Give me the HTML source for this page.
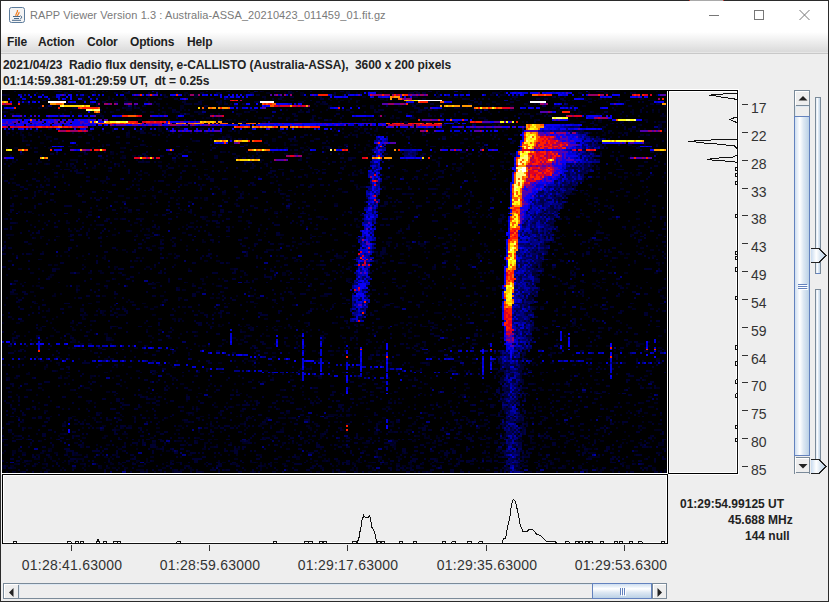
<!DOCTYPE html>
<html><head><meta charset="utf-8">
<style>
*{margin:0;padding:0;box-sizing:border-box}
html,body{width:829px;height:602px;overflow:hidden;background:#eeeeee}
body{position:relative;font-family:"Liberation Sans",sans-serif;}
.a{position:absolute}
#win{left:0;top:0;width:829px;height:602px;border:1px solid #2b2b2b;background:#eeeeee}
#title{left:1px;top:1px;width:827px;height:31px;background:#fff}
#menubar{left:1px;top:32px;width:827px;height:20px;background:linear-gradient(#ffffff,#dadada);border-bottom:0}
#menurow{left:1px;top:52px;width:827px;height:1px;background:#e6e6e6}
#menuline{left:1px;top:53px;width:827px;height:1px;background:#c8c8c8}
.menu{top:34px;font-weight:bold;font-size:12px;letter-spacing:-0.15px;color:#1e1e1e;line-height:16px}
.ttl{left:30px;top:6px;font-size:11px;letter-spacing:0.08px;color:#7a7a7a;line-height:18px;white-space:nowrap}
.hdr{left:3px;font-weight:bold;font-size:12px;color:#222;white-space:nowrap;line-height:15px}
.tick{font-size:14px;color:#333;line-height:14px;white-space:nowrap}
.tl{font-size:14px;color:#333;line-height:14px;white-space:nowrap;letter-spacing:0.22px}
.info{font-weight:bold;font-size:12px;color:#222;white-space:nowrap;line-height:14px}
</style></head><body>
<div class="a" id="win"></div>
<div class="a" id="title"></div>
<div class="a" style="left:690px;top:0;width:33px;height:1px;background:#a9a9a9"></div><div class="a" style="left:689px;top:0;width:1px;height:1px;background:#c0302a"></div><div class="a" style="left:723px;top:0;width:1px;height:1px;background:#c0302a"></div>
<div class="a" id="menubar"></div>
<div class="a" id="menurow"></div>
<div class="a" id="menuline"></div>
<!-- java icon -->
<svg class="a" style="left:9px;top:7px" width="16" height="16" viewBox="0 0 16 16">
 <rect x="0.5" y="0.5" width="15" height="15" rx="2" fill="#f4f4f4" stroke="#5c7c9c"/>
 <path d="M7 9.5 C5.5 7.5 9 6 8.5 3 M8.5 9 C8 7.5 10.5 7 10 5" stroke="#f07a1a" stroke-width="1.2" fill="none"/>
 <path d="M4 9.5h7M5 11.5h5M3 13.3h9M11.5 8.5q2.5 1.5 0 3.5" stroke="#4a6a8a" stroke-width="1" fill="none"/>
</svg>
<div class="a ttl">RAPP Viewer Version 1.3 : Australia-ASSA_20210423_011459_01.fit.gz</div>
<!-- window controls -->
<svg class="a" style="left:700px;top:0" width="128" height="30">
 <path d="M9 15.5h10" stroke="#777" stroke-width="1"/>
 <rect x="54.5" y="10.5" width="9" height="9" fill="none" stroke="#777"/>
 <path d="M99.5 10l10 10M109.5 10l-10 10" stroke="#777" stroke-width="1"/>
</svg>
<div class="a menu" style="left:7px">File</div>
<div class="a menu" style="left:38px">Action</div>
<div class="a menu" style="left:87px">Color</div>
<div class="a menu" style="left:130px">Options</div>
<div class="a menu" style="left:187px">Help</div>

<div class="a hdr" style="top:58px;letter-spacing:-0.07px">2021/04/23&nbsp; Radio flux density, e-CALLISTO (Australia-ASSA),&nbsp; 3600 x 200 pixels</div>
<div class="a hdr" style="top:74px">01:14:59.381-01:29:59 UT,&nbsp; dt = 0.25s</div>

<!-- spectrogram frame -->
<div class="a" style="left:1px;top:89px;width:738px;height:386px;background:#fff"></div>
<svg class="a" style="left:2px;top:90px" width="665" height="383" viewBox="0 0 332.5 200" preserveAspectRatio="none" shape-rendering="crispEdges"><rect width="332.5" height="200" fill="#000"/><path fill="#00001e" d="M20 0h1v1h-1zM26 0h2v1h-2zM37 0h1v1h-1zM52 0h1v1h-1zM76 0h2v1h-2zM112 0h1v1h-1zM121 0h1v1h-1zM130 0h1v1h-1zM137 0h2v1h-2zM160 0h1v1h-1zM172 0h2v1h-2zM187 0h1v1h-1zM191 0h1v1h-1zM217 0h2v1h-2zM233 0h1v1h-1zM249 0h1v1h-1zM256 0h2v1h-2zM327 0h1v1h-1zM44 1h1v1h-1zM46 1h1v1h-1zM57 1h1v1h-1zM61 1h1v1h-1zM91 1h2v1h-2zM109 1h1v1h-1zM132 1h2v1h-2zM141 1h1v1h-1zM145 1h1v1h-1zM149 1h2v1h-2zM177 1h1v1h-1zM179 1h1v1h-1zM182 1h1v1h-1zM188 1h2v1h-2zM194 1h2v1h-2zM233 1h1v1h-1zM247 1h2v1h-2zM263 1h1v1h-1zM269 1h1v1h-1zM301 1h1v1h-1zM305 1h1v1h-1zM315 1h1v1h-1zM2 2h2v1h-2zM18 2h2v1h-2zM38 2h1v1h-1zM41 2h2v1h-2zM80 2h1v1h-1zM143 2h1v1h-1zM149 2h1v1h-1zM170 2h1v1h-1zM245 2h1v1h-1zM250 2h2v1h-2zM304 2h1v1h-1zM10 3h1v1h-1zM25 3h2v1h-2zM29 3h1v1h-1zM37 3h1v1h-1zM39 3h2v1h-2zM47 3h2v1h-2zM53 3h1v1h-1zM73 3h1v1h-1zM85 3h1v1h-1zM96 3h2v1h-2zM152 3h1v1h-1zM156 3h1v1h-1zM158 3h1v1h-1zM180 3h2v1h-2zM205 3h1v1h-1zM223 3h2v1h-2zM226 3h2v1h-2zM288 3h2v1h-2zM7 4h2v1h-2zM40 4h1v1h-1zM45 4h1v1h-1zM53 4h1v1h-1zM62 4h1v1h-1zM66 4h2v1h-2zM94 4h2v1h-2zM120 4h1v1h-1zM131 4h1v1h-1zM167 4h1v1h-1zM189 4h2v1h-2zM192 4h1v1h-1zM210 4h2v1h-2zM232 4h2v1h-2zM238 4h1v1h-1zM256 4h1v1h-1zM291 4h1v1h-1zM293 4h2v1h-2zM298 4h1v1h-1zM301 4h1v1h-1zM320 4h1v1h-1zM17 5h1v1h-1zM62 5h1v1h-1zM88 5h1v1h-1zM99 5h2v1h-2zM140 5h2v1h-2zM144 5h2v1h-2zM151 5h1v1h-1zM164 5h1v1h-1zM169 5h2v1h-2zM173 5h1v1h-1zM177 5h2v1h-2zM186 5h1v1h-1zM191 5h1v1h-1zM283 5h1v1h-1zM285 5h1v1h-1zM291 5h1v1h-1zM324 5h3v1h-3zM9 6h1v1h-1zM47 6h2v1h-2zM71 6h1v1h-1zM108 6h1v1h-1zM111 6h1v1h-1zM118 6h1v1h-1zM148 6h2v1h-2zM168 6h1v1h-1zM173 6h1v1h-1zM245 6h2v1h-2zM263 6h1v1h-1zM281 6h1v1h-1zM302 6h1v1h-1zM308 6h1v1h-1zM311 6h1v1h-1zM32 7h1v1h-1zM37 7h1v1h-1zM82 7h1v1h-1zM98 7h1v1h-1zM109 7h1v1h-1zM121 7h1v1h-1zM156 7h1v1h-1zM159 7h2v1h-2zM204 7h1v1h-1zM208 7h2v1h-2zM242 7h2v1h-2zM247 7h2v1h-2zM252 7h2v1h-2zM262 7h1v1h-1zM266 7h1v1h-1zM311 7h1v1h-1zM22 8h1v1h-1zM28 8h1v1h-1zM48 8h1v1h-1zM62 8h1v1h-1zM71 8h1v1h-1zM78 8h1v1h-1zM89 8h2v1h-2zM108 8h1v1h-1zM113 8h1v1h-1zM157 8h1v1h-1zM163 8h2v1h-2zM180 8h2v1h-2zM184 8h2v1h-2zM198 8h2v1h-2zM217 8h2v1h-2zM229 8h1v1h-1zM243 8h1v1h-1zM245 8h1v1h-1zM254 8h2v1h-2zM262 8h1v1h-1zM281 8h2v1h-2zM290 8h2v1h-2zM307 8h1v1h-1zM8 9h1v1h-1zM14 9h1v1h-1zM19 9h1v1h-1zM21 9h2v1h-2zM26 9h1v1h-1zM35 9h1v1h-1zM52 9h1v1h-1zM61 9h2v1h-2zM67 9h1v1h-1zM83 9h2v1h-2zM89 9h2v1h-2zM101 9h1v1h-1zM118 9h2v1h-2zM151 9h2v1h-2zM184 9h2v1h-2zM228 9h2v1h-2zM232 9h1v1h-1zM235 9h1v1h-1zM275 9h2v1h-2zM28 10h1v1h-1zM31 10h1v1h-1zM62 10h3v1h-3zM69 10h1v1h-1zM89 10h1v1h-1zM91 10h1v1h-1zM100 10h1v1h-1zM117 10h1v1h-1zM126 10h1v1h-1zM142 10h1v1h-1zM162 10h1v1h-1zM167 10h1v1h-1zM196 10h2v1h-2zM210 10h2v1h-2zM216 10h2v1h-2zM221 10h1v1h-1zM251 10h2v1h-2zM255 10h1v1h-1zM278 10h1v1h-1zM284 10h2v1h-2zM288 10h1v1h-1zM306 10h1v1h-1zM315 10h1v1h-1zM328 10h1v1h-1zM0 11h1v1h-1zM2 11h1v1h-1zM55 11h1v1h-1zM71 11h1v1h-1zM80 11h2v1h-2zM86 11h1v1h-1zM98 11h2v1h-2zM122 11h1v1h-1zM149 11h2v1h-2zM159 11h1v1h-1zM174 11h2v1h-2zM188 11h1v1h-1zM204 11h2v1h-2zM207 11h1v1h-1zM209 11h1v1h-1zM236 11h1v1h-1zM243 11h1v1h-1zM260 11h1v1h-1zM288 11h2v1h-2zM295 11h1v1h-1zM314 11h2v1h-2zM325 11h1v1h-1zM328 11h1v1h-1zM7 12h2v1h-2zM28 12h1v1h-1zM34 12h1v1h-1zM38 12h2v1h-2zM42 12h1v1h-1zM49 12h1v1h-1zM60 12h1v1h-1zM66 12h1v1h-1zM81 12h1v1h-1zM90 12h1v1h-1zM99 12h2v1h-2zM104 12h2v1h-2zM118 12h2v1h-2zM140 12h1v1h-1zM237 12h1v1h-1zM244 12h1v1h-1zM258 12h1v1h-1zM262 12h1v1h-1zM268 12h1v1h-1zM285 12h1v1h-1zM287 12h2v1h-2zM291 12h1v1h-1zM297 12h2v1h-2zM309 12h1v1h-1zM315 12h1v1h-1zM10 13h1v1h-1zM94 13h2v1h-2zM118 13h1v1h-1zM126 13h1v1h-1zM216 13h1v1h-1zM226 13h1v1h-1zM329 13h3v1h-3zM8 14h1v1h-1zM24 14h1v1h-1zM100 14h1v1h-1zM102 14h2v1h-2zM108 14h1v1h-1zM128 14h2v1h-2zM134 14h1v1h-1zM142 14h2v1h-2zM159 14h1v1h-1zM194 14h2v1h-2zM197 14h2v1h-2zM206 14h1v1h-1zM208 14h1v1h-1zM220 14h1v1h-1zM238 14h4v1h-4zM251 14h2v1h-2zM264 14h1v1h-1zM287 14h1v1h-1zM309 14h1v1h-1zM60 15h1v1h-1zM68 15h2v1h-2zM73 15h1v1h-1zM112 15h3v1h-3zM116 15h1v1h-1zM134 15h1v1h-1zM163 15h1v1h-1zM249 15h1v1h-1zM266 15h2v1h-2zM283 15h1v1h-1zM303 15h1v1h-1zM321 15h2v1h-2zM111 16h1v1h-1zM118 16h2v1h-2zM130 16h1v1h-1zM154 16h1v1h-1zM157 16h2v1h-2zM168 16h2v1h-2zM260 16h1v1h-1zM291 16h1v1h-1zM298 16h2v1h-2zM313 16h2v1h-2zM328 16h2v1h-2zM25 17h1v1h-1zM202 17h1v1h-1zM227 17h1v1h-1zM235 17h2v1h-2zM270 17h1v1h-1zM304 17h1v1h-1zM329 17h1v1h-1zM53 18h1v1h-1zM172 18h1v1h-1zM206 18h1v1h-1zM245 18h2v1h-2zM318 18h1v1h-1zM47 19h1v1h-1zM78 19h1v1h-1zM87 19h1v1h-1zM104 19h2v1h-2zM187 19h1v1h-1zM295 19h1v1h-1zM307 19h1v1h-1zM11 20h1v1h-1zM71 20h1v1h-1zM75 20h1v1h-1zM79 20h1v1h-1zM86 20h1v1h-1zM88 20h1v1h-1zM135 20h1v1h-1zM151 20h1v1h-1zM153 20h1v1h-1zM168 20h1v1h-1zM204 20h1v1h-1zM206 20h2v1h-2zM219 20h2v1h-2zM235 20h3v1h-3zM300 20h1v1h-1zM315 20h2v1h-2zM318 20h1v1h-1zM321 20h1v1h-1zM2 21h1v1h-1zM5 21h1v1h-1zM9 21h2v1h-2zM43 21h1v1h-1zM63 21h1v1h-1zM68 21h1v1h-1zM78 21h2v1h-2zM82 21h1v1h-1zM113 21h1v1h-1zM118 21h1v1h-1zM138 21h2v1h-2zM165 21h1v1h-1zM167 21h1v1h-1zM176 21h2v1h-2zM186 21h2v1h-2zM245 21h1v1h-1zM250 21h1v1h-1zM258 21h1v1h-1zM286 21h1v1h-1zM318 21h1v1h-1zM9 22h1v1h-1zM13 22h1v1h-1zM38 22h1v1h-1zM52 22h2v1h-2zM73 22h2v1h-2zM80 22h1v1h-1zM97 22h1v1h-1zM101 22h2v1h-2zM118 22h1v1h-1zM124 22h1v1h-1zM170 22h1v1h-1zM174 22h1v1h-1zM179 22h2v1h-2zM192 22h1v1h-1zM205 22h1v1h-1zM215 22h1v1h-1zM225 22h1v1h-1zM234 22h1v1h-1zM294 22h1v1h-1zM297 22h1v1h-1zM301 22h1v1h-1zM305 22h1v1h-1zM308 22h2v1h-2zM329 22h1v1h-1zM2 23h1v1h-1zM5 23h1v1h-1zM9 23h1v1h-1zM13 23h1v1h-1zM43 23h2v1h-2zM63 23h1v1h-1zM88 23h1v1h-1zM112 23h2v1h-2zM125 23h1v1h-1zM131 23h2v1h-2zM142 23h1v1h-1zM176 23h1v1h-1zM188 23h1v1h-1zM226 23h2v1h-2zM240 23h1v1h-1zM246 23h2v1h-2zM251 23h2v1h-2zM300 23h2v1h-2zM319 23h2v1h-2zM322 23h1v1h-1zM10 24h2v1h-2zM22 24h3v1h-3zM38 24h2v1h-2zM45 24h1v1h-1zM62 24h2v1h-2zM65 24h2v1h-2zM82 24h1v1h-1zM111 24h2v1h-2zM114 24h1v1h-1zM162 24h1v1h-1zM224 24h1v1h-1zM237 24h2v1h-2zM304 24h1v1h-1zM318 24h1v1h-1zM10 25h1v1h-1zM22 25h1v1h-1zM108 25h2v1h-2zM116 25h1v1h-1zM135 25h2v1h-2zM156 25h1v1h-1zM245 25h1v1h-1zM326 25h1v1h-1zM11 26h2v1h-2zM48 26h1v1h-1zM82 26h1v1h-1zM95 26h2v1h-2zM115 26h1v1h-1zM132 26h1v1h-1zM135 26h2v1h-2zM146 26h2v1h-2zM165 26h1v1h-1zM183 26h1v1h-1zM19 27h2v1h-2zM28 27h1v1h-1zM57 27h2v1h-2zM141 27h1v1h-1zM151 27h1v1h-1zM163 27h1v1h-1zM229 27h2v1h-2zM240 27h1v1h-1zM322 27h2v1h-2zM50 28h1v1h-1zM71 28h1v1h-1zM121 28h1v1h-1zM141 28h1v1h-1zM144 28h2v1h-2zM147 28h1v1h-1zM178 28h1v1h-1zM182 28h2v1h-2zM204 28h1v1h-1zM314 28h1v1h-1zM321 28h1v1h-1zM48 29h1v1h-1zM74 29h1v1h-1zM107 29h1v1h-1zM114 29h2v1h-2zM127 29h1v1h-1zM152 29h1v1h-1zM160 29h2v1h-2zM168 29h2v1h-2zM183 29h2v1h-2zM201 29h1v1h-1zM206 29h1v1h-1zM220 29h1v1h-1zM222 29h2v1h-2zM301 29h1v1h-1zM315 29h2v1h-2zM6 30h2v1h-2zM14 30h1v1h-1zM17 30h1v1h-1zM23 30h2v1h-2zM59 30h2v1h-2zM137 30h1v1h-1zM141 30h1v1h-1zM150 30h1v1h-1zM153 30h1v1h-1zM162 30h1v1h-1zM168 30h1v1h-1zM171 30h2v1h-2zM181 30h1v1h-1zM204 30h1v1h-1zM220 30h1v1h-1zM239 30h1v1h-1zM78 31h1v1h-1zM91 31h2v1h-2zM144 31h1v1h-1zM151 31h2v1h-2zM181 31h1v1h-1zM184 31h1v1h-1zM297 31h1v1h-1zM39 32h2v1h-2zM47 32h1v1h-1zM55 32h1v1h-1zM90 32h1v1h-1zM96 32h1v1h-1zM110 32h2v1h-2zM161 32h1v1h-1zM178 32h2v1h-2zM248 32h1v1h-1zM253 32h1v1h-1zM299 32h1v1h-1zM10 33h1v1h-1zM54 33h2v1h-2zM57 33h1v1h-1zM86 33h1v1h-1zM100 33h1v1h-1zM141 33h2v1h-2zM153 33h2v1h-2zM170 33h1v1h-1zM183 33h2v1h-2zM227 33h1v1h-1zM242 33h1v1h-1zM251 33h2v1h-2zM327 33h1v1h-1zM38 34h2v1h-2zM60 34h2v1h-2zM65 34h2v1h-2zM74 34h1v1h-1zM117 34h2v1h-2zM123 34h1v1h-1zM128 34h2v1h-2zM243 34h2v1h-2zM314 34h1v1h-1zM0 35h1v1h-1zM49 35h2v1h-2zM55 35h1v1h-1zM59 35h2v1h-2zM88 35h1v1h-1zM153 35h1v1h-1zM162 35h1v1h-1zM219 35h1v1h-1zM245 35h1v1h-1zM251 35h1v1h-1zM5 36h1v1h-1zM34 36h4v1h-4zM41 36h1v1h-1zM67 36h1v1h-1zM85 36h2v1h-2zM129 36h2v1h-2zM202 36h1v1h-1zM215 36h2v1h-2zM233 36h1v1h-1zM5 37h2v1h-2zM18 37h2v1h-2zM54 37h1v1h-1zM71 37h1v1h-1zM78 37h2v1h-2zM86 37h1v1h-1zM100 37h2v1h-2zM128 37h2v1h-2zM160 37h2v1h-2zM217 37h2v1h-2zM232 37h2v1h-2zM249 37h2v1h-2zM252 37h2v1h-2zM4 38h1v1h-1zM21 38h1v1h-1zM23 38h1v1h-1zM57 38h2v1h-2zM83 38h1v1h-1zM131 38h1v1h-1zM296 38h1v1h-1zM306 38h1v1h-1zM32 39h1v1h-1zM34 39h1v1h-1zM51 39h1v1h-1zM56 39h1v1h-1zM88 39h1v1h-1zM125 39h2v1h-2zM153 39h1v1h-1zM171 39h1v1h-1zM175 39h2v1h-2zM194 39h2v1h-2zM213 39h1v1h-1zM230 39h1v1h-1zM249 39h1v1h-1zM35 40h2v1h-2zM45 40h2v1h-2zM79 40h1v1h-1zM124 40h2v1h-2zM181 40h1v1h-1zM183 40h1v1h-1zM225 40h1v1h-1zM227 40h3v1h-3zM250 40h1v1h-1zM293 40h1v1h-1zM297 40h2v1h-2zM25 41h1v1h-1zM82 41h1v1h-1zM101 41h2v1h-2zM144 41h1v1h-1zM149 41h2v1h-2zM228 41h2v1h-2zM245 41h1v1h-1zM295 41h1v1h-1zM322 41h1v1h-1zM16 42h1v1h-1zM53 42h2v1h-2zM80 42h2v1h-2zM120 42h2v1h-2zM176 42h1v1h-1zM178 42h2v1h-2zM201 42h2v1h-2zM217 42h2v1h-2zM227 42h2v1h-2zM18 43h1v1h-1zM71 43h2v1h-2zM81 43h1v1h-1zM155 43h1v1h-1zM169 43h1v1h-1zM180 43h1v1h-1zM216 43h1v1h-1zM232 43h1v1h-1zM248 43h1v1h-1zM314 43h1v1h-1zM0 44h1v1h-1zM30 44h1v1h-1zM68 44h2v1h-2zM73 44h1v1h-1zM83 44h2v1h-2zM96 44h1v1h-1zM102 44h1v1h-1zM132 44h1v1h-1zM152 44h1v1h-1zM173 44h1v1h-1zM176 44h2v1h-2zM190 44h1v1h-1zM315 44h1v1h-1zM317 44h2v1h-2zM324 44h2v1h-2zM26 45h2v1h-2zM81 45h1v1h-1zM116 45h1v1h-1zM128 45h1v1h-1zM134 45h2v1h-2zM146 45h1v1h-1zM152 45h1v1h-1zM200 45h1v1h-1zM236 45h1v1h-1zM295 45h1v1h-1zM301 45h1v1h-1zM308 45h2v1h-2zM311 45h2v1h-2zM330 45h1v1h-1zM4 46h2v1h-2zM22 46h2v1h-2zM46 46h2v1h-2zM88 46h2v1h-2zM98 46h2v1h-2zM103 46h1v1h-1zM112 46h1v1h-1zM119 46h1v1h-1zM142 46h2v1h-2zM191 46h2v1h-2zM210 46h1v1h-1zM252 46h1v1h-1zM301 46h1v1h-1zM311 46h1v1h-1zM21 47h1v1h-1zM23 47h1v1h-1zM43 47h1v1h-1zM49 47h3v1h-3zM65 47h1v1h-1zM68 47h1v1h-1zM76 47h1v1h-1zM137 47h1v1h-1zM214 47h1v1h-1zM237 47h1v1h-1zM251 47h2v1h-2zM5 48h2v1h-2zM50 48h1v1h-1zM52 48h1v1h-1zM93 48h2v1h-2zM135 48h1v1h-1zM183 48h1v1h-1zM189 48h1v1h-1zM212 48h1v1h-1zM309 48h1v1h-1zM331 48h1v1h-1zM13 49h2v1h-2zM67 49h2v1h-2zM82 49h2v1h-2zM91 49h2v1h-2zM101 49h1v1h-1zM139 49h1v1h-1zM176 49h2v1h-2zM217 49h2v1h-2zM293 49h1v1h-1zM314 49h1v1h-1zM19 50h1v1h-1zM39 50h1v1h-1zM64 50h1v1h-1zM99 50h1v1h-1zM106 50h2v1h-2zM179 50h2v1h-2zM191 50h1v1h-1zM294 50h1v1h-1zM320 50h1v1h-1zM63 51h1v1h-1zM74 51h2v1h-2zM168 51h2v1h-2zM177 51h2v1h-2zM191 51h1v1h-1zM199 51h1v1h-1zM217 51h1v1h-1zM222 51h2v1h-2zM229 51h1v1h-1zM246 51h1v1h-1zM249 51h1v1h-1zM252 51h1v1h-1zM298 51h2v1h-2zM309 51h2v1h-2zM5 52h2v1h-2zM52 52h1v1h-1zM67 52h2v1h-2zM73 52h1v1h-1zM98 52h2v1h-2zM129 52h1v1h-1zM139 52h1v1h-1zM153 52h1v1h-1zM167 52h1v1h-1zM18 53h1v1h-1zM21 53h2v1h-2zM79 53h1v1h-1zM117 53h2v1h-2zM120 53h1v1h-1zM136 53h1v1h-1zM138 53h1v1h-1zM170 53h1v1h-1zM221 53h2v1h-2zM247 53h1v1h-1zM250 53h1v1h-1zM289 53h1v1h-1zM305 53h1v1h-1zM322 53h1v1h-1zM16 54h1v1h-1zM37 54h2v1h-2zM40 54h1v1h-1zM81 54h2v1h-2zM106 54h1v1h-1zM110 54h2v1h-2zM120 54h1v1h-1zM123 54h1v1h-1zM141 54h1v1h-1zM146 54h1v1h-1zM202 54h3v1h-3zM226 54h2v1h-2zM234 54h1v1h-1zM281 54h1v1h-1zM284 54h1v1h-1zM286 54h1v1h-1zM291 54h2v1h-2zM321 54h1v1h-1zM7 55h1v1h-1zM58 55h3v1h-3zM70 55h2v1h-2zM75 55h2v1h-2zM156 55h1v1h-1zM192 55h1v1h-1zM234 55h1v1h-1zM276 55h1v1h-1zM293 55h1v1h-1zM311 55h2v1h-2zM62 56h2v1h-2zM66 56h2v1h-2zM85 56h1v1h-1zM88 56h1v1h-1zM99 56h1v1h-1zM101 56h1v1h-1zM113 56h1v1h-1zM140 56h1v1h-1zM220 56h1v1h-1zM223 56h1v1h-1zM316 56h2v1h-2zM25 57h1v1h-1zM87 57h1v1h-1zM101 57h2v1h-2zM110 57h1v1h-1zM278 57h1v1h-1zM292 57h1v1h-1zM302 57h1v1h-1zM26 58h1v1h-1zM56 58h2v1h-2zM94 58h1v1h-1zM146 58h1v1h-1zM150 58h1v1h-1zM158 58h2v1h-2zM217 58h2v1h-2zM221 58h1v1h-1zM238 58h2v1h-2zM313 58h1v1h-1zM9 59h1v1h-1zM69 59h2v1h-2zM74 59h1v1h-1zM105 59h1v1h-1zM116 59h2v1h-2zM166 59h2v1h-2zM285 59h1v1h-1zM293 59h2v1h-2zM125 60h1v1h-1zM191 60h1v1h-1zM195 60h2v1h-2zM304 60h2v1h-2zM52 61h1v1h-1zM59 61h1v1h-1zM61 61h2v1h-2zM134 61h1v1h-1zM203 61h1v1h-1zM237 61h2v1h-2zM303 61h2v1h-2zM48 62h2v1h-2zM89 62h1v1h-1zM91 62h1v1h-1zM156 62h1v1h-1zM216 62h1v1h-1zM325 62h1v1h-1zM8 63h1v1h-1zM14 63h1v1h-1zM38 63h2v1h-2zM43 63h2v1h-2zM63 63h2v1h-2zM131 63h1v1h-1zM136 63h2v1h-2zM139 63h1v1h-1zM150 63h1v1h-1zM171 63h1v1h-1zM178 63h1v1h-1zM196 63h2v1h-2zM235 63h1v1h-1zM253 63h1v1h-1zM318 63h1v1h-1zM325 63h2v1h-2zM2 64h1v1h-1zM15 64h1v1h-1zM68 64h1v1h-1zM87 64h2v1h-2zM94 64h1v1h-1zM106 64h1v1h-1zM124 64h1v1h-1zM145 64h1v1h-1zM222 64h2v1h-2zM233 64h1v1h-1zM290 64h1v1h-1zM3 65h1v1h-1zM18 65h1v1h-1zM76 65h2v1h-2zM106 65h1v1h-1zM153 65h1v1h-1zM240 65h1v1h-1zM290 65h1v1h-1zM47 66h1v1h-1zM101 66h2v1h-2zM108 66h1v1h-1zM137 66h1v1h-1zM142 66h1v1h-1zM157 66h1v1h-1zM159 66h2v1h-2zM197 66h3v1h-3zM233 66h1v1h-1zM235 66h2v1h-2zM239 66h1v1h-1zM242 66h1v1h-1zM251 66h1v1h-1zM281 66h2v1h-2zM306 66h1v1h-1zM330 66h2v1h-2zM1 67h1v1h-1zM56 67h2v1h-2zM59 67h1v1h-1zM69 67h2v1h-2zM100 67h2v1h-2zM133 67h1v1h-1zM159 67h1v1h-1zM195 67h1v1h-1zM250 67h1v1h-1zM303 67h2v1h-2zM317 67h2v1h-2zM18 68h1v1h-1zM32 68h1v1h-1zM75 68h1v1h-1zM97 68h1v1h-1zM102 68h2v1h-2zM118 68h2v1h-2zM122 68h2v1h-2zM176 68h1v1h-1zM178 68h2v1h-2zM233 68h2v1h-2zM293 68h2v1h-2zM313 68h1v1h-1zM7 69h1v1h-1zM21 69h1v1h-1zM32 69h2v1h-2zM40 69h1v1h-1zM66 69h2v1h-2zM83 69h1v1h-1zM94 69h2v1h-2zM147 69h1v1h-1zM150 69h1v1h-1zM187 69h1v1h-1zM226 69h2v1h-2zM237 69h1v1h-1zM248 69h2v1h-2zM298 69h1v1h-1zM14 70h1v1h-1zM44 70h1v1h-1zM47 70h2v1h-2zM64 70h1v1h-1zM69 70h1v1h-1zM92 70h1v1h-1zM129 70h1v1h-1zM177 70h1v1h-1zM203 70h1v1h-1zM298 70h1v1h-1zM318 70h1v1h-1zM90 71h1v1h-1zM95 71h1v1h-1zM107 71h2v1h-2zM115 71h1v1h-1zM177 71h2v1h-2zM276 71h1v1h-1zM299 71h1v1h-1zM315 71h2v1h-2zM36 72h1v1h-1zM43 72h1v1h-1zM46 72h1v1h-1zM56 72h1v1h-1zM70 72h1v1h-1zM72 72h2v1h-2zM77 72h2v1h-2zM88 72h1v1h-1zM96 72h1v1h-1zM121 72h1v1h-1zM156 72h1v1h-1zM165 72h2v1h-2zM199 72h1v1h-1zM244 72h1v1h-1zM311 72h1v1h-1zM315 72h1v1h-1zM33 73h2v1h-2zM38 73h1v1h-1zM43 73h1v1h-1zM62 73h1v1h-1zM64 73h1v1h-1zM69 73h1v1h-1zM73 73h1v1h-1zM248 73h3v1h-3zM278 73h1v1h-1zM297 73h2v1h-2zM317 73h2v1h-2zM90 74h2v1h-2zM103 74h1v1h-1zM131 74h1v1h-1zM172 74h1v1h-1zM197 74h2v1h-2zM200 74h1v1h-1zM275 74h1v1h-1zM319 74h1v1h-1zM2 75h4v1h-4zM14 75h1v1h-1zM55 75h2v1h-2zM67 75h1v1h-1zM72 75h2v1h-2zM139 75h2v1h-2zM154 75h1v1h-1zM173 75h2v1h-2zM224 75h1v1h-1zM228 75h1v1h-1zM246 75h1v1h-1zM276 75h1v1h-1zM280 75h1v1h-1zM296 75h1v1h-1zM302 75h2v1h-2zM314 75h2v1h-2zM329 75h1v1h-1zM19 76h2v1h-2zM28 76h1v1h-1zM33 76h1v1h-1zM49 76h1v1h-1zM74 76h2v1h-2zM131 76h1v1h-1zM158 76h2v1h-2zM208 76h2v1h-2zM250 76h2v1h-2zM271 76h1v1h-1zM273 76h1v1h-1zM279 76h1v1h-1zM281 76h1v1h-1zM3 77h1v1h-1zM16 77h1v1h-1zM19 77h1v1h-1zM139 77h1v1h-1zM188 77h1v1h-1zM201 77h1v1h-1zM219 77h2v1h-2zM224 77h1v1h-1zM273 77h1v1h-1zM294 77h1v1h-1zM327 77h1v1h-1zM23 78h1v1h-1zM79 78h2v1h-2zM84 78h1v1h-1zM89 78h1v1h-1zM100 78h1v1h-1zM166 78h2v1h-2zM235 78h1v1h-1zM248 78h1v1h-1zM251 78h1v1h-1zM293 78h2v1h-2zM303 78h1v1h-1zM49 79h1v1h-1zM71 79h1v1h-1zM85 79h1v1h-1zM100 79h2v1h-2zM105 79h1v1h-1zM145 79h2v1h-2zM150 79h2v1h-2zM155 79h1v1h-1zM158 79h1v1h-1zM190 79h1v1h-1zM192 79h3v1h-3zM202 79h2v1h-2zM213 79h1v1h-1zM222 79h2v1h-2zM13 80h2v1h-2zM138 80h1v1h-1zM140 80h1v1h-1zM148 80h1v1h-1zM152 80h2v1h-2zM192 80h2v1h-2zM200 80h1v1h-1zM209 80h2v1h-2zM271 80h1v1h-1zM309 80h1v1h-1zM75 81h2v1h-2zM92 81h1v1h-1zM203 81h1v1h-1zM209 81h2v1h-2zM217 81h2v1h-2zM225 81h1v1h-1zM234 81h1v1h-1zM241 81h2v1h-2zM298 81h1v1h-1zM317 81h1v1h-1zM327 81h1v1h-1zM331 81h1v1h-1zM73 82h1v1h-1zM78 82h1v1h-1zM147 82h1v1h-1zM203 82h2v1h-2zM211 82h1v1h-1zM216 82h1v1h-1zM230 82h2v1h-2zM319 82h2v1h-2zM15 83h1v1h-1zM57 83h1v1h-1zM60 83h2v1h-2zM79 83h1v1h-1zM103 83h1v1h-1zM125 83h1v1h-1zM132 83h4v1h-4zM137 83h2v1h-2zM165 83h1v1h-1zM203 83h1v1h-1zM226 83h1v1h-1zM230 83h2v1h-2zM242 83h1v1h-1zM248 83h1v1h-1zM272 83h1v1h-1zM301 83h1v1h-1zM324 83h2v1h-2zM328 83h1v1h-1zM20 84h1v1h-1zM31 84h2v1h-2zM62 84h1v1h-1zM162 84h2v1h-2zM175 84h1v1h-1zM211 84h1v1h-1zM213 84h1v1h-1zM303 84h2v1h-2zM317 84h1v1h-1zM320 84h1v1h-1zM5 85h1v1h-1zM14 85h1v1h-1zM83 85h2v1h-2zM86 85h1v1h-1zM187 85h1v1h-1zM191 85h2v1h-2zM199 85h2v1h-2zM221 85h1v1h-1zM237 85h1v1h-1zM269 85h1v1h-1zM309 85h2v1h-2zM312 85h2v1h-2zM331 85h1v1h-1zM27 86h1v1h-1zM29 86h1v1h-1zM33 86h1v1h-1zM40 86h1v1h-1zM51 86h1v1h-1zM137 86h1v1h-1zM168 86h2v1h-2zM187 86h2v1h-2zM194 86h1v1h-1zM203 86h1v1h-1zM227 86h2v1h-2zM237 86h3v1h-3zM251 86h1v1h-1zM276 86h1v1h-1zM325 86h2v1h-2zM330 86h1v1h-1zM37 87h1v1h-1zM50 87h2v1h-2zM68 87h1v1h-1zM70 87h1v1h-1zM82 87h1v1h-1zM87 87h1v1h-1zM141 87h2v1h-2zM167 87h4v1h-4zM240 87h1v1h-1zM307 87h1v1h-1zM311 87h2v1h-2zM19 88h1v1h-1zM41 88h1v1h-1zM51 88h1v1h-1zM99 88h1v1h-1zM141 88h1v1h-1zM148 88h1v1h-1zM187 88h2v1h-2zM199 88h2v1h-2zM234 88h1v1h-1zM273 88h2v1h-2zM278 88h2v1h-2zM3 89h2v1h-2zM66 89h2v1h-2zM101 89h2v1h-2zM107 89h2v1h-2zM137 89h2v1h-2zM146 89h2v1h-2zM149 89h1v1h-1zM154 89h2v1h-2zM222 89h1v1h-1zM227 89h1v1h-1zM294 89h1v1h-1zM304 89h1v1h-1zM113 90h1v1h-1zM173 90h1v1h-1zM187 90h1v1h-1zM200 90h2v1h-2zM238 90h1v1h-1zM316 90h1v1h-1zM327 90h2v1h-2zM330 90h1v1h-1zM23 91h2v1h-2zM26 91h2v1h-2zM40 91h1v1h-1zM86 91h1v1h-1zM157 91h2v1h-2zM234 91h1v1h-1zM272 91h1v1h-1zM328 91h1v1h-1zM41 92h1v1h-1zM56 92h2v1h-2zM72 92h2v1h-2zM76 92h1v1h-1zM139 92h1v1h-1zM152 92h1v1h-1zM173 92h2v1h-2zM208 92h1v1h-1zM215 92h1v1h-1zM220 92h2v1h-2zM234 92h1v1h-1zM269 92h1v1h-1zM305 92h2v1h-2zM8 93h2v1h-2zM18 93h1v1h-1zM27 93h2v1h-2zM56 93h1v1h-1zM71 93h1v1h-1zM93 93h1v1h-1zM114 93h2v1h-2zM134 93h1v1h-1zM150 93h1v1h-1zM155 93h1v1h-1zM215 93h2v1h-2zM237 93h1v1h-1zM275 93h1v1h-1zM295 93h2v1h-2zM20 94h1v1h-1zM48 94h2v1h-2zM119 94h2v1h-2zM142 94h2v1h-2zM165 94h2v1h-2zM169 94h1v1h-1zM193 94h1v1h-1zM284 94h2v1h-2zM14 95h2v1h-2zM37 95h2v1h-2zM43 95h2v1h-2zM49 95h2v1h-2zM58 95h1v1h-1zM68 95h1v1h-1zM136 95h1v1h-1zM140 95h2v1h-2zM161 95h2v1h-2zM170 95h1v1h-1zM190 95h2v1h-2zM204 95h1v1h-1zM238 95h2v1h-2zM243 95h1v1h-1zM245 95h1v1h-1zM267 95h1v1h-1zM298 95h1v1h-1zM311 95h2v1h-2zM326 95h2v1h-2zM2 96h1v1h-1zM24 96h2v1h-2zM61 96h1v1h-1zM121 96h2v1h-2zM140 96h2v1h-2zM143 96h1v1h-1zM273 96h2v1h-2zM284 96h1v1h-1zM23 97h2v1h-2zM102 97h1v1h-1zM136 97h1v1h-1zM169 97h1v1h-1zM208 97h1v1h-1zM236 97h1v1h-1zM247 97h1v1h-1zM286 97h1v1h-1zM56 98h1v1h-1zM99 98h2v1h-2zM108 98h1v1h-1zM110 98h1v1h-1zM126 98h2v1h-2zM151 98h1v1h-1zM156 98h2v1h-2zM172 98h3v1h-3zM223 98h1v1h-1zM229 98h1v1h-1zM247 98h2v1h-2zM278 98h1v1h-1zM301 98h1v1h-1zM52 99h2v1h-2zM100 99h1v1h-1zM161 99h1v1h-1zM164 99h1v1h-1zM173 99h1v1h-1zM183 99h1v1h-1zM202 99h1v1h-1zM297 99h1v1h-1zM18 100h1v1h-1zM28 100h1v1h-1zM77 100h2v1h-2zM83 100h1v1h-1zM92 100h1v1h-1zM125 100h1v1h-1zM148 100h1v1h-1zM190 100h1v1h-1zM208 100h1v1h-1zM224 100h1v1h-1zM286 100h1v1h-1zM290 100h2v1h-2zM300 100h2v1h-2zM322 100h1v1h-1zM9 101h1v1h-1zM47 101h2v1h-2zM58 101h1v1h-1zM75 101h2v1h-2zM95 101h1v1h-1zM100 101h2v1h-2zM105 101h1v1h-1zM209 101h1v1h-1zM280 101h1v1h-1zM295 101h2v1h-2zM15 102h1v1h-1zM17 102h2v1h-2zM32 102h1v1h-1zM37 102h2v1h-2zM107 102h1v1h-1zM154 102h1v1h-1zM184 102h1v1h-1zM213 102h1v1h-1zM235 102h2v1h-2zM248 102h2v1h-2zM277 102h1v1h-1zM284 102h1v1h-1zM297 102h2v1h-2zM309 102h1v1h-1zM317 102h1v1h-1zM37 103h1v1h-1zM52 103h1v1h-1zM88 103h1v1h-1zM142 103h1v1h-1zM144 103h1v1h-1zM191 103h1v1h-1zM198 103h2v1h-2zM211 103h2v1h-2zM214 103h1v1h-1zM222 103h1v1h-1zM242 103h2v1h-2zM245 103h2v1h-2zM296 103h1v1h-1zM299 103h1v1h-1zM312 103h1v1h-1zM324 103h1v1h-1zM330 103h2v1h-2zM38 104h1v1h-1zM90 104h2v1h-2zM101 104h1v1h-1zM152 104h2v1h-2zM156 104h1v1h-1zM182 104h1v1h-1zM245 104h2v1h-2zM270 104h1v1h-1zM289 104h2v1h-2zM328 104h2v1h-2zM14 105h2v1h-2zM37 105h1v1h-1zM81 105h1v1h-1zM97 105h2v1h-2zM110 105h1v1h-1zM123 105h1v1h-1zM201 105h1v1h-1zM210 105h1v1h-1zM236 105h1v1h-1zM286 105h1v1h-1zM310 105h1v1h-1zM4 106h4v1h-4zM26 106h1v1h-1zM29 106h1v1h-1zM108 106h1v1h-1zM126 106h1v1h-1zM144 106h2v1h-2zM183 106h2v1h-2zM220 106h1v1h-1zM246 106h1v1h-1zM277 106h1v1h-1zM289 106h2v1h-2zM16 107h1v1h-1zM25 107h2v1h-2zM50 107h2v1h-2zM79 107h2v1h-2zM117 107h1v1h-1zM159 107h4v1h-4zM205 107h1v1h-1zM287 107h1v1h-1zM308 107h1v1h-1zM329 107h2v1h-2zM2 108h1v1h-1zM7 108h1v1h-1zM36 108h1v1h-1zM56 108h1v1h-1zM88 108h2v1h-2zM104 108h2v1h-2zM107 108h2v1h-2zM127 108h2v1h-2zM132 108h1v1h-1zM139 108h1v1h-1zM170 108h2v1h-2zM200 108h1v1h-1zM221 108h1v1h-1zM263 108h1v1h-1zM330 108h2v1h-2zM20 109h1v1h-1zM63 109h1v1h-1zM88 109h1v1h-1zM186 109h1v1h-1zM200 109h1v1h-1zM228 109h1v1h-1zM292 109h1v1h-1zM8 110h1v1h-1zM16 110h1v1h-1zM47 110h2v1h-2zM62 110h1v1h-1zM64 110h2v1h-2zM80 110h2v1h-2zM122 110h1v1h-1zM136 110h1v1h-1zM188 110h1v1h-1zM209 110h2v1h-2zM218 110h2v1h-2zM236 110h2v1h-2zM17 111h1v1h-1zM43 111h2v1h-2zM70 111h2v1h-2zM113 111h1v1h-1zM126 111h2v1h-2zM155 111h2v1h-2zM235 111h1v1h-1zM281 111h1v1h-1zM315 111h1v1h-1zM329 111h2v1h-2zM1 112h1v1h-1zM145 112h2v1h-2zM159 112h1v1h-1zM165 112h1v1h-1zM191 112h1v1h-1zM218 112h1v1h-1zM223 112h2v1h-2zM296 112h2v1h-2zM14 113h1v1h-1zM33 113h2v1h-2zM54 113h1v1h-1zM60 113h1v1h-1zM71 113h2v1h-2zM76 113h2v1h-2zM90 113h2v1h-2zM126 113h1v1h-1zM135 113h1v1h-1zM140 113h1v1h-1zM190 113h2v1h-2zM198 113h1v1h-1zM266 113h2v1h-2zM269 113h2v1h-2zM280 113h2v1h-2zM289 113h1v1h-1zM294 113h1v1h-1zM314 113h1v1h-1zM23 114h1v1h-1zM39 114h2v1h-2zM48 114h1v1h-1zM55 114h1v1h-1zM74 114h2v1h-2zM107 114h1v1h-1zM155 114h1v1h-1zM157 114h1v1h-1zM160 114h1v1h-1zM182 114h1v1h-1zM315 114h2v1h-2zM324 114h2v1h-2zM328 114h1v1h-1zM20 115h1v1h-1zM22 115h2v1h-2zM39 115h2v1h-2zM50 115h2v1h-2zM86 115h1v1h-1zM98 115h1v1h-1zM212 115h1v1h-1zM222 115h1v1h-1zM263 115h1v1h-1zM284 115h1v1h-1zM310 115h1v1h-1zM330 115h1v1h-1zM50 116h1v1h-1zM57 116h1v1h-1zM91 116h1v1h-1zM99 116h2v1h-2zM106 116h1v1h-1zM216 116h4v1h-4zM244 116h1v1h-1zM301 116h1v1h-1zM0 117h1v1h-1zM40 117h3v1h-3zM46 117h2v1h-2zM50 117h2v1h-2zM58 117h4v1h-4zM75 117h2v1h-2zM109 117h1v1h-1zM116 117h1v1h-1zM239 117h2v1h-2zM242 117h2v1h-2zM284 117h1v1h-1zM291 117h2v1h-2zM4 118h1v1h-1zM20 118h2v1h-2zM27 118h1v1h-1zM40 118h1v1h-1zM167 118h1v1h-1zM204 118h1v1h-1zM206 118h2v1h-2zM221 118h1v1h-1zM246 118h1v1h-1zM293 118h1v1h-1zM5 119h1v1h-1zM25 119h1v1h-1zM40 119h2v1h-2zM78 119h2v1h-2zM85 119h2v1h-2zM88 119h2v1h-2zM131 119h2v1h-2zM229 119h1v1h-1zM9 120h2v1h-2zM44 120h2v1h-2zM86 120h1v1h-1zM90 120h1v1h-1zM148 120h1v1h-1zM298 120h1v1h-1zM307 120h2v1h-2zM0 121h1v1h-1zM7 121h2v1h-2zM24 121h1v1h-1zM34 121h2v1h-2zM71 121h1v1h-1zM151 121h2v1h-2zM166 121h2v1h-2zM199 121h2v1h-2zM203 121h2v1h-2zM213 121h2v1h-2zM264 121h1v1h-1zM309 121h1v1h-1zM37 122h1v1h-1zM44 122h1v1h-1zM103 122h1v1h-1zM108 122h1v1h-1zM110 122h1v1h-1zM122 122h2v1h-2zM177 122h1v1h-1zM196 122h2v1h-2zM216 122h2v1h-2zM282 122h1v1h-1zM285 122h2v1h-2zM312 122h1v1h-1zM57 123h1v1h-1zM105 123h1v1h-1zM108 123h2v1h-2zM119 123h1v1h-1zM121 123h1v1h-1zM124 123h1v1h-1zM138 123h2v1h-2zM143 123h2v1h-2zM146 123h1v1h-1zM172 123h2v1h-2zM188 123h3v1h-3zM209 123h2v1h-2zM212 123h1v1h-1zM237 123h1v1h-1zM284 123h2v1h-2zM287 123h1v1h-1zM19 124h1v1h-1zM25 124h1v1h-1zM35 124h1v1h-1zM124 124h1v1h-1zM135 124h1v1h-1zM141 124h1v1h-1zM144 124h1v1h-1zM169 124h2v1h-2zM183 124h1v1h-1zM188 124h2v1h-2zM200 124h1v1h-1zM204 124h1v1h-1zM216 124h2v1h-2zM226 124h1v1h-1zM288 124h1v1h-1zM299 124h2v1h-2zM18 125h2v1h-2zM26 125h1v1h-1zM35 125h2v1h-2zM39 125h1v1h-1zM44 125h1v1h-1zM72 125h1v1h-1zM78 125h2v1h-2zM85 125h1v1h-1zM119 125h1v1h-1zM132 125h1v1h-1zM136 125h1v1h-1zM150 125h1v1h-1zM154 125h1v1h-1zM177 125h1v1h-1zM203 125h1v1h-1zM224 125h1v1h-1zM291 125h1v1h-1zM308 125h1v1h-1zM331 125h1v1h-1zM13 126h1v1h-1zM27 126h2v1h-2zM43 126h1v1h-1zM83 126h1v1h-1zM97 126h1v1h-1zM120 126h2v1h-2zM160 126h1v1h-1zM203 126h2v1h-2zM248 126h1v1h-1zM294 126h2v1h-2zM299 126h1v1h-1zM322 126h1v1h-1zM331 126h1v1h-1zM5 127h1v1h-1zM32 127h2v1h-2zM46 127h1v1h-1zM51 127h2v1h-2zM89 127h1v1h-1zM130 127h1v1h-1zM161 127h2v1h-2zM183 127h1v1h-1zM185 127h2v1h-2zM200 127h2v1h-2zM242 127h1v1h-1zM245 127h1v1h-1zM306 127h2v1h-2zM11 128h1v1h-1zM24 128h2v1h-2zM34 128h1v1h-1zM52 128h1v1h-1zM73 128h2v1h-2zM97 128h1v1h-1zM121 128h2v1h-2zM124 128h1v1h-1zM132 128h2v1h-2zM146 128h1v1h-1zM148 128h2v1h-2zM154 128h1v1h-1zM169 128h1v1h-1zM176 128h1v1h-1zM207 128h2v1h-2zM262 128h1v1h-1zM328 128h2v1h-2zM29 129h1v1h-1zM54 129h1v1h-1zM75 129h1v1h-1zM83 129h2v1h-2zM88 129h1v1h-1zM115 129h2v1h-2zM121 129h1v1h-1zM147 129h1v1h-1zM203 129h2v1h-2zM229 129h1v1h-1zM293 129h1v1h-1zM299 129h1v1h-1zM31 130h1v1h-1zM35 130h2v1h-2zM43 130h1v1h-1zM54 130h2v1h-2zM111 130h1v1h-1zM117 130h1v1h-1zM119 130h2v1h-2zM127 130h1v1h-1zM177 130h1v1h-1zM182 130h2v1h-2zM191 130h1v1h-1zM16 131h1v1h-1zM35 131h2v1h-2zM68 131h2v1h-2zM112 131h1v1h-1zM160 131h1v1h-1zM171 131h1v1h-1zM183 131h2v1h-2zM313 131h2v1h-2zM328 131h1v1h-1zM39 132h2v1h-2zM110 132h1v1h-1zM118 132h2v1h-2zM141 132h1v1h-1zM147 132h1v1h-1zM207 132h2v1h-2zM211 132h1v1h-1zM216 132h1v1h-1zM237 132h1v1h-1zM277 132h2v1h-2zM312 132h2v1h-2zM317 132h4v1h-4zM19 133h1v1h-1zM57 133h1v1h-1zM72 133h1v1h-1zM98 133h1v1h-1zM100 133h2v1h-2zM103 133h1v1h-1zM108 133h1v1h-1zM142 133h2v1h-2zM189 133h1v1h-1zM211 133h1v1h-1zM228 133h2v1h-2zM234 133h1v1h-1zM250 133h1v1h-1zM292 133h2v1h-2zM297 133h1v1h-1zM302 133h2v1h-2zM312 133h1v1h-1zM323 133h1v1h-1zM33 134h1v1h-1zM35 134h2v1h-2zM66 134h2v1h-2zM84 134h1v1h-1zM87 134h1v1h-1zM132 134h3v1h-3zM176 134h2v1h-2zM186 134h1v1h-1zM188 134h2v1h-2zM224 134h1v1h-1zM234 134h1v1h-1zM240 134h1v1h-1zM273 134h2v1h-2zM321 134h1v1h-1zM328 134h2v1h-2zM40 135h2v1h-2zM56 135h1v1h-1zM71 135h1v1h-1zM81 135h2v1h-2zM100 135h2v1h-2zM223 135h1v1h-1zM268 135h2v1h-2zM274 135h1v1h-1zM280 135h1v1h-1zM293 135h1v1h-1zM308 135h1v1h-1zM323 135h1v1h-1zM6 136h1v1h-1zM44 136h1v1h-1zM64 136h1v1h-1zM148 136h1v1h-1zM151 136h1v1h-1zM155 136h2v1h-2zM165 136h1v1h-1zM167 136h2v1h-2zM187 136h2v1h-2zM213 136h1v1h-1zM218 136h1v1h-1zM220 136h1v1h-1zM258 136h1v1h-1zM306 136h1v1h-1zM309 136h1v1h-1zM331 136h1v1h-1zM71 137h2v1h-2zM93 137h1v1h-1zM135 137h2v1h-2zM143 137h1v1h-1zM187 137h1v1h-1zM226 137h2v1h-2zM274 137h2v1h-2zM289 137h1v1h-1zM313 137h1v1h-1zM33 138h1v1h-1zM93 138h1v1h-1zM164 138h2v1h-2zM173 138h2v1h-2zM236 138h1v1h-1zM249 138h1v1h-1zM314 138h1v1h-1zM27 139h2v1h-2zM127 139h1v1h-1zM178 139h1v1h-1zM183 139h2v1h-2zM215 139h2v1h-2zM222 139h2v1h-2zM259 139h1v1h-1zM274 139h1v1h-1zM306 139h1v1h-1zM311 139h1v1h-1zM9 140h2v1h-2zM38 140h1v1h-1zM51 140h2v1h-2zM121 140h2v1h-2zM149 140h1v1h-1zM158 140h1v1h-1zM258 140h1v1h-1zM262 140h1v1h-1zM292 140h2v1h-2zM303 140h1v1h-1zM317 140h1v1h-1zM327 140h2v1h-2zM19 141h2v1h-2zM65 141h1v1h-1zM123 141h2v1h-2zM135 141h1v1h-1zM161 141h2v1h-2zM172 141h2v1h-2zM187 141h2v1h-2zM190 141h1v1h-1zM219 141h1v1h-1zM226 141h4v1h-4zM286 141h1v1h-1zM320 141h1v1h-1zM27 142h2v1h-2zM108 142h2v1h-2zM121 142h1v1h-1zM128 142h1v1h-1zM154 142h1v1h-1zM189 142h1v1h-1zM203 142h1v1h-1zM209 142h1v1h-1zM213 142h1v1h-1zM235 142h2v1h-2zM239 142h1v1h-1zM265 142h2v1h-2zM274 142h2v1h-2zM298 142h2v1h-2zM0 143h2v1h-2zM8 143h1v1h-1zM16 143h1v1h-1zM28 143h1v1h-1zM60 143h1v1h-1zM79 143h1v1h-1zM84 143h1v1h-1zM125 143h1v1h-1zM171 143h1v1h-1zM188 143h2v1h-2zM194 143h1v1h-1zM212 143h2v1h-2zM265 143h1v1h-1zM285 143h1v1h-1zM289 143h1v1h-1zM293 143h2v1h-2zM303 143h1v1h-1zM8 144h1v1h-1zM21 144h2v1h-2zM55 144h1v1h-1zM57 144h1v1h-1zM63 144h2v1h-2zM85 144h2v1h-2zM126 144h1v1h-1zM151 144h1v1h-1zM154 144h1v1h-1zM204 144h2v1h-2zM225 144h2v1h-2zM21 145h1v1h-1zM103 145h1v1h-1zM136 145h1v1h-1zM152 145h2v1h-2zM238 145h1v1h-1zM245 145h1v1h-1zM293 145h1v1h-1zM299 145h1v1h-1zM27 146h1v1h-1zM54 146h1v1h-1zM67 146h2v1h-2zM98 146h1v1h-1zM124 146h1v1h-1zM131 146h1v1h-1zM150 146h1v1h-1zM207 146h3v1h-3zM231 146h1v1h-1zM293 146h1v1h-1zM323 146h2v1h-2zM13 147h1v1h-1zM51 147h2v1h-2zM69 147h1v1h-1zM76 147h2v1h-2zM205 147h1v1h-1zM221 147h1v1h-1zM247 147h1v1h-1zM269 147h2v1h-2zM12 148h2v1h-2zM62 148h1v1h-1zM76 148h1v1h-1zM82 148h2v1h-2zM147 148h1v1h-1zM182 148h1v1h-1zM235 148h1v1h-1zM247 148h1v1h-1zM269 148h1v1h-1zM288 148h1v1h-1zM303 148h2v1h-2zM29 149h1v1h-1zM33 149h1v1h-1zM44 149h2v1h-2zM48 149h1v1h-1zM57 149h2v1h-2zM90 149h1v1h-1zM96 149h1v1h-1zM118 149h1v1h-1zM144 149h1v1h-1zM156 149h2v1h-2zM171 149h1v1h-1zM185 149h1v1h-1zM201 149h2v1h-2zM211 149h1v1h-1zM231 149h1v1h-1zM239 149h2v1h-2zM248 149h1v1h-1zM251 149h1v1h-1zM263 149h1v1h-1zM284 149h1v1h-1zM321 149h2v1h-2zM2 150h2v1h-2zM6 150h2v1h-2zM31 150h2v1h-2zM44 150h1v1h-1zM55 150h1v1h-1zM64 150h1v1h-1zM85 150h2v1h-2zM135 150h1v1h-1zM158 150h2v1h-2zM178 150h1v1h-1zM214 150h1v1h-1zM250 150h1v1h-1zM290 150h1v1h-1zM3 151h1v1h-1zM35 151h1v1h-1zM85 151h1v1h-1zM103 151h1v1h-1zM112 151h1v1h-1zM125 151h1v1h-1zM144 151h2v1h-2zM149 151h1v1h-1zM173 151h1v1h-1zM203 151h2v1h-2zM226 151h1v1h-1zM270 151h1v1h-1zM296 151h2v1h-2zM321 151h1v1h-1zM43 152h1v1h-1zM61 152h1v1h-1zM77 152h1v1h-1zM130 152h2v1h-2zM251 152h1v1h-1zM33 153h1v1h-1zM89 153h2v1h-2zM104 153h1v1h-1zM116 153h1v1h-1zM120 153h1v1h-1zM180 153h2v1h-2zM193 153h1v1h-1zM212 153h1v1h-1zM240 153h1v1h-1zM266 153h1v1h-1zM277 153h2v1h-2zM281 153h1v1h-1zM289 153h1v1h-1zM297 153h2v1h-2zM318 153h1v1h-1zM40 154h1v1h-1zM49 154h1v1h-1zM59 154h1v1h-1zM103 154h1v1h-1zM164 154h2v1h-2zM190 154h1v1h-1zM242 154h2v1h-2zM283 154h1v1h-1zM319 154h1v1h-1zM8 155h1v1h-1zM19 155h1v1h-1zM41 155h3v1h-3zM62 155h1v1h-1zM83 155h1v1h-1zM98 155h1v1h-1zM149 155h1v1h-1zM155 155h1v1h-1zM198 155h1v1h-1zM208 155h2v1h-2zM214 155h1v1h-1zM220 155h1v1h-1zM232 155h2v1h-2zM244 155h1v1h-1zM268 155h2v1h-2zM290 155h1v1h-1zM294 155h1v1h-1zM313 155h1v1h-1zM322 155h2v1h-2zM327 155h2v1h-2zM12 156h2v1h-2zM20 156h1v1h-1zM34 156h2v1h-2zM44 156h1v1h-1zM93 156h2v1h-2zM115 156h1v1h-1zM117 156h1v1h-1zM139 156h2v1h-2zM231 156h1v1h-1zM242 156h1v1h-1zM269 156h2v1h-2zM273 156h2v1h-2zM278 156h1v1h-1zM3 157h2v1h-2zM52 157h2v1h-2zM72 157h1v1h-1zM106 157h1v1h-1zM150 157h1v1h-1zM156 157h2v1h-2zM182 157h1v1h-1zM185 157h1v1h-1zM189 157h2v1h-2zM197 157h1v1h-1zM226 157h1v1h-1zM239 157h1v1h-1zM282 157h4v1h-4zM296 157h2v1h-2zM37 158h1v1h-1zM77 158h1v1h-1zM81 158h1v1h-1zM98 158h2v1h-2zM119 158h1v1h-1zM165 158h1v1h-1zM169 158h1v1h-1zM174 158h1v1h-1zM194 158h1v1h-1zM218 158h1v1h-1zM225 158h1v1h-1zM245 158h2v1h-2zM249 158h1v1h-1zM288 158h1v1h-1zM296 158h1v1h-1zM299 158h1v1h-1zM308 158h1v1h-1zM324 158h1v1h-1zM7 159h1v1h-1zM17 159h1v1h-1zM56 159h1v1h-1zM69 159h1v1h-1zM92 159h1v1h-1zM122 159h1v1h-1zM137 159h2v1h-2zM150 159h1v1h-1zM185 159h1v1h-1zM211 159h1v1h-1zM229 159h2v1h-2zM263 159h1v1h-1zM71 160h1v1h-1zM76 160h1v1h-1zM79 160h1v1h-1zM97 160h1v1h-1zM103 160h2v1h-2zM123 160h2v1h-2zM144 160h1v1h-1zM180 160h1v1h-1zM228 160h1v1h-1zM233 160h1v1h-1zM236 160h1v1h-1zM247 160h1v1h-1zM261 160h1v1h-1zM279 160h3v1h-3zM323 160h2v1h-2zM8 161h1v1h-1zM74 161h3v1h-3zM145 161h1v1h-1zM151 161h1v1h-1zM178 161h2v1h-2zM194 161h1v1h-1zM200 161h1v1h-1zM273 161h1v1h-1zM5 162h1v1h-1zM24 162h1v1h-1zM42 162h2v1h-2zM92 162h1v1h-1zM124 162h1v1h-1zM126 162h1v1h-1zM142 162h2v1h-2zM154 162h1v1h-1zM156 162h1v1h-1zM193 162h1v1h-1zM196 162h1v1h-1zM223 162h2v1h-2zM240 162h1v1h-1zM249 162h1v1h-1zM257 162h1v1h-1zM275 162h1v1h-1zM284 162h1v1h-1zM2 163h2v1h-2zM18 163h1v1h-1zM43 163h1v1h-1zM46 163h1v1h-1zM54 163h1v1h-1zM60 163h1v1h-1zM72 163h2v1h-2zM82 163h1v1h-1zM106 163h1v1h-1zM112 163h1v1h-1zM158 163h1v1h-1zM179 163h2v1h-2zM182 163h1v1h-1zM198 163h2v1h-2zM217 163h1v1h-1zM223 163h1v1h-1zM252 163h1v1h-1zM268 163h1v1h-1zM296 163h1v1h-1zM312 163h2v1h-2zM319 163h2v1h-2zM326 163h2v1h-2zM77 164h2v1h-2zM117 164h2v1h-2zM125 164h1v1h-1zM155 164h1v1h-1zM206 164h1v1h-1zM215 164h1v1h-1zM221 164h1v1h-1zM242 164h1v1h-1zM246 164h1v1h-1zM265 164h1v1h-1zM281 164h1v1h-1zM299 164h1v1h-1zM4 165h1v1h-1zM69 165h1v1h-1zM89 165h1v1h-1zM95 165h1v1h-1zM97 165h1v1h-1zM106 165h2v1h-2zM113 165h1v1h-1zM115 165h1v1h-1zM133 165h1v1h-1zM151 165h1v1h-1zM192 165h2v1h-2zM203 165h1v1h-1zM219 165h1v1h-1zM252 165h1v1h-1zM259 165h1v1h-1zM268 165h2v1h-2zM271 165h1v1h-1zM283 165h1v1h-1zM323 165h3v1h-3zM18 166h1v1h-1zM30 166h1v1h-1zM42 166h1v1h-1zM60 166h1v1h-1zM98 166h1v1h-1zM138 166h1v1h-1zM169 166h1v1h-1zM182 166h2v1h-2zM190 166h2v1h-2zM194 166h1v1h-1zM238 166h2v1h-2zM258 166h1v1h-1zM274 166h1v1h-1zM288 166h1v1h-1zM302 166h1v1h-1zM6 167h1v1h-1zM21 167h2v1h-2zM72 167h1v1h-1zM90 167h1v1h-1zM97 167h1v1h-1zM119 167h2v1h-2zM133 167h1v1h-1zM150 167h1v1h-1zM168 167h1v1h-1zM172 167h2v1h-2zM225 167h1v1h-1zM268 167h1v1h-1zM313 167h1v1h-1zM317 167h1v1h-1zM48 168h2v1h-2zM92 168h1v1h-1zM95 168h1v1h-1zM108 168h2v1h-2zM142 168h2v1h-2zM198 168h1v1h-1zM210 168h1v1h-1zM212 168h1v1h-1zM221 168h1v1h-1zM249 168h1v1h-1zM263 168h2v1h-2zM282 168h1v1h-1zM286 168h1v1h-1zM312 168h1v1h-1zM321 168h2v1h-2zM59 169h1v1h-1zM93 169h1v1h-1zM95 169h1v1h-1zM103 169h1v1h-1zM119 169h1v1h-1zM141 169h1v1h-1zM157 169h1v1h-1zM163 169h5v1h-5zM174 169h1v1h-1zM244 169h3v1h-3zM260 169h1v1h-1zM280 169h2v1h-2zM306 169h1v1h-1zM309 169h1v1h-1zM329 169h1v1h-1zM24 170h1v1h-1zM35 170h2v1h-2zM43 170h1v1h-1zM60 170h1v1h-1zM65 170h2v1h-2zM99 170h2v1h-2zM117 170h1v1h-1zM168 170h3v1h-3zM172 170h2v1h-2zM181 170h2v1h-2zM196 170h1v1h-1zM247 170h1v1h-1zM271 170h1v1h-1zM275 170h1v1h-1zM283 170h1v1h-1zM299 170h1v1h-1zM303 170h2v1h-2zM318 170h1v1h-1zM45 171h2v1h-2zM57 171h2v1h-2zM73 171h1v1h-1zM77 171h1v1h-1zM82 171h1v1h-1zM103 171h1v1h-1zM110 171h2v1h-2zM123 171h2v1h-2zM133 171h1v1h-1zM138 171h4v1h-4zM143 171h2v1h-2zM148 171h1v1h-1zM153 171h1v1h-1zM167 171h1v1h-1zM190 171h2v1h-2zM232 171h1v1h-1zM251 171h1v1h-1zM262 171h1v1h-1zM313 171h1v1h-1zM23 172h1v1h-1zM37 172h1v1h-1zM41 172h1v1h-1zM46 172h1v1h-1zM53 172h2v1h-2zM66 172h1v1h-1zM80 172h1v1h-1zM90 172h1v1h-1zM98 172h1v1h-1zM131 172h2v1h-2zM183 172h1v1h-1zM193 172h1v1h-1zM207 172h1v1h-1zM230 172h1v1h-1zM232 172h2v1h-2zM236 172h1v1h-1zM239 172h1v1h-1zM249 172h1v1h-1zM270 172h2v1h-2zM294 172h1v1h-1zM3 173h3v1h-3zM10 173h1v1h-1zM40 173h1v1h-1zM48 173h2v1h-2zM78 173h1v1h-1zM91 173h2v1h-2zM94 173h1v1h-1zM104 173h1v1h-1zM121 173h1v1h-1zM138 173h1v1h-1zM144 173h1v1h-1zM163 173h1v1h-1zM166 173h2v1h-2zM183 173h2v1h-2zM188 173h2v1h-2zM195 173h1v1h-1zM206 173h1v1h-1zM227 173h1v1h-1zM234 173h1v1h-1zM251 173h1v1h-1zM256 173h1v1h-1zM259 173h2v1h-2zM262 173h1v1h-1zM265 173h1v1h-1zM306 173h1v1h-1zM308 173h1v1h-1zM320 173h1v1h-1zM323 173h2v1h-2zM8 174h1v1h-1zM30 174h2v1h-2zM36 174h2v1h-2zM54 174h1v1h-1zM102 174h1v1h-1zM119 174h2v1h-2zM129 174h4v1h-4zM136 174h1v1h-1zM140 174h2v1h-2zM156 174h2v1h-2zM188 174h1v1h-1zM195 174h1v1h-1zM205 174h2v1h-2zM210 174h1v1h-1zM223 174h1v1h-1zM227 174h2v1h-2zM241 174h2v1h-2zM277 174h2v1h-2zM282 174h1v1h-1zM310 174h1v1h-1zM328 174h2v1h-2zM44 175h1v1h-1zM50 175h2v1h-2zM63 175h2v1h-2zM88 175h2v1h-2zM104 175h2v1h-2zM116 175h1v1h-1zM121 175h1v1h-1zM129 175h1v1h-1zM134 175h1v1h-1zM152 175h2v1h-2zM193 175h3v1h-3zM203 175h2v1h-2zM238 175h4v1h-4zM251 175h1v1h-1zM296 175h1v1h-1zM11 176h1v1h-1zM13 176h2v1h-2zM40 176h1v1h-1zM47 176h2v1h-2zM56 176h1v1h-1zM60 176h1v1h-1zM77 176h2v1h-2zM90 176h1v1h-1zM106 176h2v1h-2zM122 176h1v1h-1zM140 176h1v1h-1zM153 176h2v1h-2zM209 176h1v1h-1zM222 176h1v1h-1zM271 176h1v1h-1zM303 176h1v1h-1zM307 176h1v1h-1zM318 176h1v1h-1zM320 176h2v1h-2zM30 177h1v1h-1zM50 177h1v1h-1zM57 177h2v1h-2zM72 177h1v1h-1zM87 177h2v1h-2zM98 177h1v1h-1zM121 177h1v1h-1zM139 177h2v1h-2zM146 177h1v1h-1zM154 177h1v1h-1zM157 177h1v1h-1zM170 177h1v1h-1zM202 177h3v1h-3zM242 177h1v1h-1zM265 177h1v1h-1zM289 177h2v1h-2zM298 177h1v1h-1zM319 177h1v1h-1zM326 177h4v1h-4zM3 178h2v1h-2zM68 178h1v1h-1zM77 178h2v1h-2zM98 178h1v1h-1zM109 178h1v1h-1zM131 178h2v1h-2zM152 178h1v1h-1zM161 178h2v1h-2zM172 178h1v1h-1zM186 178h2v1h-2zM189 178h1v1h-1zM194 178h2v1h-2zM199 178h1v1h-1zM201 178h2v1h-2zM221 178h2v1h-2zM229 178h1v1h-1zM264 178h2v1h-2zM285 178h1v1h-1zM311 178h1v1h-1zM17 179h1v1h-1zM29 179h2v1h-2zM32 179h1v1h-1zM60 179h3v1h-3zM86 179h1v1h-1zM88 179h1v1h-1zM99 179h2v1h-2zM103 179h1v1h-1zM149 179h1v1h-1zM159 179h1v1h-1zM186 179h2v1h-2zM211 179h1v1h-1zM251 179h1v1h-1zM296 179h2v1h-2zM329 179h1v1h-1zM6 180h2v1h-2zM28 180h1v1h-1zM36 180h1v1h-1zM51 180h2v1h-2zM135 180h2v1h-2zM141 180h1v1h-1zM159 180h2v1h-2zM207 180h2v1h-2zM211 180h1v1h-1zM213 180h1v1h-1zM217 180h1v1h-1zM251 180h1v1h-1zM257 180h1v1h-1zM313 180h1v1h-1zM324 180h1v1h-1zM5 181h1v1h-1zM24 181h1v1h-1zM40 181h2v1h-2zM50 181h2v1h-2zM62 181h1v1h-1zM74 181h2v1h-2zM89 181h1v1h-1zM97 181h2v1h-2zM131 181h1v1h-1zM159 181h1v1h-1zM179 181h2v1h-2zM183 181h2v1h-2zM211 181h3v1h-3zM217 181h2v1h-2zM238 181h2v1h-2zM242 181h1v1h-1zM244 181h1v1h-1zM259 181h1v1h-1zM269 181h1v1h-1zM282 181h1v1h-1zM286 181h1v1h-1zM326 181h1v1h-1zM12 182h1v1h-1zM33 182h1v1h-1zM68 182h1v1h-1zM82 182h1v1h-1zM103 182h2v1h-2zM106 182h2v1h-2zM153 182h2v1h-2zM158 182h1v1h-1zM174 182h1v1h-1zM179 182h1v1h-1zM194 182h2v1h-2zM206 182h1v1h-1zM218 182h1v1h-1zM243 182h1v1h-1zM264 182h2v1h-2zM275 182h2v1h-2zM278 182h1v1h-1zM293 182h1v1h-1zM296 182h1v1h-1zM298 182h1v1h-1zM310 182h2v1h-2zM324 182h1v1h-1zM0 183h1v1h-1zM19 183h1v1h-1zM68 183h1v1h-1zM87 183h3v1h-3zM97 183h1v1h-1zM103 183h1v1h-1zM123 183h1v1h-1zM151 183h2v1h-2zM155 183h1v1h-1zM168 183h1v1h-1zM170 183h1v1h-1zM186 183h1v1h-1zM196 183h2v1h-2zM205 183h2v1h-2zM246 183h2v1h-2zM256 183h1v1h-1zM258 183h3v1h-3zM264 183h1v1h-1zM270 183h1v1h-1zM282 183h2v1h-2zM299 183h2v1h-2zM314 183h2v1h-2zM325 183h1v1h-1zM36 184h2v1h-2zM75 184h2v1h-2zM83 184h1v1h-1zM92 184h1v1h-1zM101 184h2v1h-2zM104 184h1v1h-1zM111 184h1v1h-1zM114 184h1v1h-1zM120 184h3v1h-3zM126 184h1v1h-1zM140 184h1v1h-1zM143 184h1v1h-1zM145 184h1v1h-1zM147 184h1v1h-1zM151 184h1v1h-1zM180 184h4v1h-4zM194 184h2v1h-2zM212 184h2v1h-2zM215 184h2v1h-2zM222 184h1v1h-1zM242 184h2v1h-2zM264 184h3v1h-3zM281 184h2v1h-2zM293 184h1v1h-1zM310 184h1v1h-1zM312 184h1v1h-1zM318 184h2v1h-2zM323 184h1v1h-1zM328 184h3v1h-3zM1 185h2v1h-2zM14 185h1v1h-1zM40 185h1v1h-1zM47 185h1v1h-1zM52 185h2v1h-2zM61 185h1v1h-1zM64 185h1v1h-1zM67 185h1v1h-1zM81 185h1v1h-1zM91 185h1v1h-1zM101 185h1v1h-1zM107 185h1v1h-1zM140 185h1v1h-1zM164 185h1v1h-1zM167 185h1v1h-1zM170 185h2v1h-2zM196 185h1v1h-1zM218 185h2v1h-2zM227 185h2v1h-2zM262 185h1v1h-1zM268 185h1v1h-1zM271 185h1v1h-1zM286 185h1v1h-1zM309 185h1v1h-1zM320 185h1v1h-1zM328 185h3v1h-3zM25 186h1v1h-1zM40 186h1v1h-1zM57 186h1v1h-1zM77 186h1v1h-1zM104 186h2v1h-2zM181 186h2v1h-2zM195 186h2v1h-2zM215 186h1v1h-1zM242 186h2v1h-2zM252 186h1v1h-1zM256 186h1v1h-1zM265 186h2v1h-2zM270 186h4v1h-4zM278 186h1v1h-1zM290 186h2v1h-2zM323 186h1v1h-1zM8 187h1v1h-1zM23 187h2v1h-2zM58 187h2v1h-2zM67 187h1v1h-1zM77 187h2v1h-2zM100 187h2v1h-2zM117 187h2v1h-2zM142 187h2v1h-2zM159 187h1v1h-1zM166 187h1v1h-1zM225 187h1v1h-1zM247 187h1v1h-1zM293 187h2v1h-2zM296 187h1v1h-1zM305 187h1v1h-1zM330 187h2v1h-2zM1 188h1v1h-1zM5 188h2v1h-2zM8 188h1v1h-1zM21 188h1v1h-1zM24 188h1v1h-1zM60 188h1v1h-1zM80 188h1v1h-1zM82 188h2v1h-2zM85 188h1v1h-1zM93 188h1v1h-1zM114 188h2v1h-2zM152 188h1v1h-1zM170 188h1v1h-1zM180 188h2v1h-2zM186 188h2v1h-2zM194 188h1v1h-1zM219 188h2v1h-2zM248 188h1v1h-1zM291 188h2v1h-2zM316 188h2v1h-2zM0 189h1v1h-1zM5 189h2v1h-2zM10 189h2v1h-2zM19 189h2v1h-2zM26 189h2v1h-2zM32 189h1v1h-1zM36 189h1v1h-1zM49 189h1v1h-1zM158 189h1v1h-1zM197 189h1v1h-1zM200 189h1v1h-1zM202 189h1v1h-1zM250 189h1v1h-1zM268 189h1v1h-1zM277 189h1v1h-1zM281 189h1v1h-1zM294 189h3v1h-3zM305 189h1v1h-1zM328 189h2v1h-2zM17 190h2v1h-2zM36 190h4v1h-4zM42 190h1v1h-1zM56 190h2v1h-2zM79 190h1v1h-1zM93 190h2v1h-2zM109 190h1v1h-1zM113 190h1v1h-1zM117 190h1v1h-1zM121 190h1v1h-1zM128 190h2v1h-2zM149 190h1v1h-1zM160 190h2v1h-2zM182 190h2v1h-2zM187 190h1v1h-1zM205 190h2v1h-2zM246 190h2v1h-2zM260 190h2v1h-2zM268 190h1v1h-1zM316 190h1v1h-1zM23 191h2v1h-2zM33 191h1v1h-1zM51 191h2v1h-2zM54 191h1v1h-1zM74 191h2v1h-2zM89 191h1v1h-1zM106 191h1v1h-1zM138 191h2v1h-2zM143 191h1v1h-1zM147 191h2v1h-2zM158 191h2v1h-2zM197 191h2v1h-2zM219 191h1v1h-1zM222 191h1v1h-1zM242 191h2v1h-2zM246 191h1v1h-1zM259 191h1v1h-1zM293 191h6v1h-6zM323 191h1v1h-1zM9 192h1v1h-1zM16 192h3v1h-3zM21 192h1v1h-1zM24 192h1v1h-1zM28 192h1v1h-1zM37 192h4v1h-4zM53 192h1v1h-1zM55 192h1v1h-1zM64 192h1v1h-1zM72 192h1v1h-1zM116 192h2v1h-2zM147 192h2v1h-2zM161 192h1v1h-1zM163 192h1v1h-1zM188 192h2v1h-2zM193 192h1v1h-1zM198 192h2v1h-2zM217 192h1v1h-1zM221 192h1v1h-1zM228 192h1v1h-1zM244 192h1v1h-1zM257 192h1v1h-1zM277 192h2v1h-2zM321 192h1v1h-1zM13 193h2v1h-2zM21 193h1v1h-1zM25 193h2v1h-2zM31 193h1v1h-1zM34 193h2v1h-2zM40 193h1v1h-1zM67 193h2v1h-2zM72 193h1v1h-1zM75 193h1v1h-1zM84 193h2v1h-2zM108 193h1v1h-1zM152 193h1v1h-1zM156 193h2v1h-2zM160 193h2v1h-2zM163 193h1v1h-1zM167 193h2v1h-2zM177 193h2v1h-2zM213 193h1v1h-1zM228 193h1v1h-1zM237 193h1v1h-1zM251 193h1v1h-1zM268 193h1v1h-1zM274 193h1v1h-1zM278 193h1v1h-1zM282 193h2v1h-2zM285 193h1v1h-1zM297 193h1v1h-1zM304 193h1v1h-1zM315 193h1v1h-1zM10 194h2v1h-2zM30 194h1v1h-1zM33 194h1v1h-1zM37 194h1v1h-1zM51 194h1v1h-1zM53 194h2v1h-2zM65 194h1v1h-1zM67 194h1v1h-1zM72 194h2v1h-2zM82 194h1v1h-1zM87 194h2v1h-2zM110 194h2v1h-2zM124 194h2v1h-2zM127 194h1v1h-1zM129 194h1v1h-1zM136 194h2v1h-2zM145 194h1v1h-1zM154 194h1v1h-1zM168 194h1v1h-1zM173 194h1v1h-1zM175 194h1v1h-1zM178 194h2v1h-2zM183 194h2v1h-2zM191 194h1v1h-1zM206 194h1v1h-1zM217 194h2v1h-2zM239 194h2v1h-2zM244 194h1v1h-1zM262 194h1v1h-1zM270 194h2v1h-2zM275 194h1v1h-1zM310 194h2v1h-2zM326 194h1v1h-1zM6 195h2v1h-2zM12 195h2v1h-2zM17 195h1v1h-1zM20 195h2v1h-2zM33 195h1v1h-1zM39 195h2v1h-2zM47 195h1v1h-1zM54 195h2v1h-2zM58 195h2v1h-2zM80 195h1v1h-1zM101 195h1v1h-1zM115 195h3v1h-3zM129 195h1v1h-1zM131 195h1v1h-1zM134 195h1v1h-1zM140 195h2v1h-2zM168 195h1v1h-1zM175 195h2v1h-2zM191 195h2v1h-2zM194 195h1v1h-1zM197 195h2v1h-2zM203 195h2v1h-2zM210 195h1v1h-1zM214 195h1v1h-1zM223 195h2v1h-2zM234 195h2v1h-2zM258 195h3v1h-3zM272 195h1v1h-1zM275 195h1v1h-1zM283 195h1v1h-1zM290 195h1v1h-1zM310 195h1v1h-1zM316 195h1v1h-1zM0 196h1v1h-1zM2 196h1v1h-1zM4 196h2v1h-2zM16 196h1v1h-1zM22 196h1v1h-1zM41 196h1v1h-1zM43 196h1v1h-1zM49 196h1v1h-1zM69 196h2v1h-2zM83 196h1v1h-1zM91 196h1v1h-1zM102 196h1v1h-1zM130 196h2v1h-2zM142 196h1v1h-1zM165 196h1v1h-1zM167 196h1v1h-1zM182 196h1v1h-1zM184 196h1v1h-1zM200 196h2v1h-2zM204 196h2v1h-2zM227 196h1v1h-1zM269 196h1v1h-1zM281 196h1v1h-1zM288 196h2v1h-2zM295 196h1v1h-1zM312 196h2v1h-2zM0 197h1v1h-1zM5 197h2v1h-2zM20 197h2v1h-2zM30 197h1v1h-1zM35 197h2v1h-2zM40 197h1v1h-1zM48 197h2v1h-2zM52 197h2v1h-2zM55 197h2v1h-2zM58 197h1v1h-1zM61 197h2v1h-2zM80 197h2v1h-2zM93 197h2v1h-2zM129 197h1v1h-1zM132 197h1v1h-1zM159 197h2v1h-2zM175 197h1v1h-1zM177 197h1v1h-1zM183 197h1v1h-1zM197 197h1v1h-1zM203 197h1v1h-1zM209 197h2v1h-2zM240 197h1v1h-1zM251 197h1v1h-1zM257 197h1v1h-1zM275 197h2v1h-2zM280 197h2v1h-2zM288 197h1v1h-1zM297 197h1v1h-1zM307 197h1v1h-1zM312 197h2v1h-2zM325 197h2v1h-2zM22 198h2v1h-2zM29 198h1v1h-1zM41 198h1v1h-1zM67 198h4v1h-4zM85 198h1v1h-1zM89 198h2v1h-2zM94 198h2v1h-2zM111 198h1v1h-1zM121 198h1v1h-1zM129 198h1v1h-1zM137 198h1v1h-1zM142 198h1v1h-1zM165 198h1v1h-1zM174 198h2v1h-2zM177 198h1v1h-1zM185 198h1v1h-1zM200 198h2v1h-2zM229 198h1v1h-1zM242 198h2v1h-2zM258 198h1v1h-1zM297 198h1v1h-1zM299 198h2v1h-2zM304 198h2v1h-2zM322 198h1v1h-1zM325 198h2v1h-2zM331 198h1v1h-1zM2 199h1v1h-1zM5 199h2v1h-2zM9 199h1v1h-1zM19 199h1v1h-1zM71 199h1v1h-1zM76 199h1v1h-1zM79 199h1v1h-1zM85 199h1v1h-1zM100 199h1v1h-1zM124 199h1v1h-1zM126 199h1v1h-1zM135 199h2v1h-2zM154 199h1v1h-1zM157 199h2v1h-2zM168 199h2v1h-2zM177 199h1v1h-1zM183 199h2v1h-2zM188 199h1v1h-1zM206 199h1v1h-1zM210 199h2v1h-2zM213 199h2v1h-2zM263 199h2v1h-2zM268 199h2v1h-2zM287 199h1v1h-1zM298 199h2v1h-2zM305 199h1v1h-1zM331 199h1v1h-1z"/><path fill="#00002f" d="M6 0h1v1h-1zM28 0h2v1h-2zM34 0h1v1h-1zM38 0h1v1h-1zM45 0h2v1h-2zM50 0h1v1h-1zM60 0h1v1h-1zM102 0h1v1h-1zM113 0h1v1h-1zM123 0h1v1h-1zM129 0h1v1h-1zM136 0h1v1h-1zM143 0h2v1h-2zM147 0h1v1h-1zM154 0h1v1h-1zM169 0h2v1h-2zM183 0h1v1h-1zM186 0h1v1h-1zM206 0h2v1h-2zM213 0h2v1h-2zM229 0h1v1h-1zM275 0h1v1h-1zM297 0h4v1h-4zM17 1h1v1h-1zM31 1h2v1h-2zM56 1h1v1h-1zM62 1h2v1h-2zM73 1h1v1h-1zM87 1h1v1h-1zM99 1h2v1h-2zM107 1h2v1h-2zM124 1h2v1h-2zM143 1h2v1h-2zM166 1h1v1h-1zM172 1h2v1h-2zM203 1h3v1h-3zM207 1h2v1h-2zM210 1h2v1h-2zM217 1h1v1h-1zM245 1h2v1h-2zM251 1h1v1h-1zM288 1h2v1h-2zM293 1h1v1h-1zM302 1h1v1h-1zM311 1h1v1h-1zM314 1h1v1h-1zM316 1h1v1h-1zM0 2h2v1h-2zM71 2h1v1h-1zM81 2h1v1h-1zM91 2h1v1h-1zM93 2h1v1h-1zM96 2h2v1h-2zM108 2h1v1h-1zM121 2h1v1h-1zM127 2h2v1h-2zM150 2h1v1h-1zM165 2h2v1h-2zM218 2h1v1h-1zM228 2h1v1h-1zM244 2h1v1h-1zM249 2h1v1h-1zM258 2h1v1h-1zM319 2h1v1h-1zM327 2h1v1h-1zM61 3h1v1h-1zM81 3h2v1h-2zM113 3h1v1h-1zM116 3h1v1h-1zM130 3h2v1h-2zM139 3h2v1h-2zM144 3h2v1h-2zM159 3h1v1h-1zM203 3h1v1h-1zM206 3h2v1h-2zM217 3h2v1h-2zM229 3h1v1h-1zM248 3h1v1h-1zM255 3h3v1h-3zM275 3h1v1h-1zM278 3h1v1h-1zM281 3h1v1h-1zM308 3h1v1h-1zM55 4h1v1h-1zM61 4h1v1h-1zM72 4h1v1h-1zM78 4h2v1h-2zM86 4h2v1h-2zM104 4h2v1h-2zM112 4h2v1h-2zM135 4h1v1h-1zM138 4h2v1h-2zM159 4h2v1h-2zM163 4h1v1h-1zM174 4h1v1h-1zM230 4h2v1h-2zM236 4h1v1h-1zM240 4h1v1h-1zM243 4h1v1h-1zM254 4h1v1h-1zM267 4h2v1h-2zM271 4h2v1h-2zM279 4h2v1h-2zM299 4h1v1h-1zM319 4h1v1h-1zM15 5h1v1h-1zM20 5h2v1h-2zM40 5h2v1h-2zM52 5h1v1h-1zM72 5h1v1h-1zM91 5h1v1h-1zM109 5h1v1h-1zM154 5h1v1h-1zM192 5h1v1h-1zM194 5h1v1h-1zM234 5h2v1h-2zM257 5h2v1h-2zM280 5h2v1h-2zM292 5h1v1h-1zM296 5h1v1h-1zM307 5h2v1h-2zM312 5h2v1h-2zM323 5h1v1h-1zM11 6h2v1h-2zM50 6h2v1h-2zM56 6h2v1h-2zM61 6h4v1h-4zM73 6h1v1h-1zM76 6h1v1h-1zM90 6h2v1h-2zM98 6h2v1h-2zM107 6h1v1h-1zM109 6h1v1h-1zM126 6h3v1h-3zM150 6h1v1h-1zM157 6h2v1h-2zM160 6h2v1h-2zM177 6h1v1h-1zM213 6h1v1h-1zM236 6h2v1h-2zM239 6h1v1h-1zM254 6h2v1h-2zM293 6h2v1h-2zM318 6h1v1h-1zM320 6h1v1h-1zM13 7h1v1h-1zM44 7h2v1h-2zM47 7h1v1h-1zM75 7h1v1h-1zM77 7h2v1h-2zM91 7h4v1h-4zM96 7h2v1h-2zM99 7h1v1h-1zM108 7h1v1h-1zM111 7h2v1h-2zM114 7h1v1h-1zM120 7h1v1h-1zM147 7h1v1h-1zM161 7h2v1h-2zM205 7h1v1h-1zM207 7h1v1h-1zM214 7h2v1h-2zM233 7h2v1h-2zM238 7h2v1h-2zM261 7h1v1h-1zM268 7h1v1h-1zM324 7h2v1h-2zM327 7h2v1h-2zM19 8h1v1h-1zM47 8h1v1h-1zM66 8h1v1h-1zM70 8h1v1h-1zM101 8h2v1h-2zM116 8h2v1h-2zM168 8h1v1h-1zM177 8h1v1h-1zM188 8h1v1h-1zM205 8h2v1h-2zM263 8h1v1h-1zM276 8h3v1h-3zM280 8h1v1h-1zM284 8h1v1h-1zM313 8h2v1h-2zM322 8h1v1h-1zM331 8h1v1h-1zM18 9h1v1h-1zM36 9h2v1h-2zM60 9h1v1h-1zM63 9h2v1h-2zM66 9h1v1h-1zM68 9h1v1h-1zM80 9h1v1h-1zM123 9h1v1h-1zM163 9h1v1h-1zM206 9h3v1h-3zM226 9h2v1h-2zM285 9h1v1h-1zM305 9h1v1h-1zM320 9h1v1h-1zM4 10h2v1h-2zM49 10h1v1h-1zM57 10h2v1h-2zM78 10h1v1h-1zM85 10h2v1h-2zM93 10h1v1h-1zM110 10h1v1h-1zM124 10h2v1h-2zM149 10h1v1h-1zM153 10h1v1h-1zM155 10h1v1h-1zM168 10h1v1h-1zM170 10h1v1h-1zM172 10h2v1h-2zM186 10h1v1h-1zM188 10h3v1h-3zM208 10h2v1h-2zM213 10h2v1h-2zM238 10h2v1h-2zM254 10h1v1h-1zM283 10h1v1h-1zM319 10h1v1h-1zM325 10h1v1h-1zM1 11h1v1h-1zM34 11h1v1h-1zM51 11h1v1h-1zM54 11h1v1h-1zM70 11h1v1h-1zM74 11h2v1h-2zM85 11h1v1h-1zM87 11h2v1h-2zM96 11h2v1h-2zM121 11h1v1h-1zM123 11h1v1h-1zM127 11h1v1h-1zM148 11h1v1h-1zM181 11h1v1h-1zM186 11h2v1h-2zM198 11h2v1h-2zM208 11h1v1h-1zM228 11h1v1h-1zM248 11h1v1h-1zM294 11h1v1h-1zM310 11h1v1h-1zM319 11h1v1h-1zM322 11h1v1h-1zM4 12h2v1h-2zM30 12h1v1h-1zM47 12h2v1h-2zM78 12h1v1h-1zM89 12h1v1h-1zM92 12h2v1h-2zM98 12h1v1h-1zM108 12h1v1h-1zM117 12h1v1h-1zM145 12h2v1h-2zM167 12h2v1h-2zM202 12h1v1h-1zM213 12h1v1h-1zM219 12h2v1h-2zM226 12h1v1h-1zM230 12h3v1h-3zM238 12h1v1h-1zM259 12h1v1h-1zM261 12h1v1h-1zM263 12h1v1h-1zM267 12h1v1h-1zM269 12h1v1h-1zM272 12h1v1h-1zM284 12h1v1h-1zM300 12h1v1h-1zM330 12h1v1h-1zM49 13h2v1h-2zM87 13h1v1h-1zM146 13h2v1h-2zM155 13h2v1h-2zM166 13h1v1h-1zM170 13h1v1h-1zM188 13h1v1h-1zM191 13h1v1h-1zM195 13h1v1h-1zM205 13h1v1h-1zM213 13h2v1h-2zM256 13h1v1h-1zM264 13h2v1h-2zM271 13h1v1h-1zM273 13h2v1h-2zM312 13h1v1h-1zM318 13h1v1h-1zM10 14h1v1h-1zM13 14h1v1h-1zM23 14h1v1h-1zM43 14h1v1h-1zM50 14h1v1h-1zM87 14h1v1h-1zM105 14h1v1h-1zM133 14h1v1h-1zM138 14h2v1h-2zM155 14h1v1h-1zM158 14h1v1h-1zM169 14h1v1h-1zM204 14h2v1h-2zM224 14h1v1h-1zM235 14h1v1h-1zM17 15h1v1h-1zM74 15h2v1h-2zM83 15h1v1h-1zM91 15h1v1h-1zM96 15h1v1h-1zM108 15h2v1h-2zM122 15h1v1h-1zM142 15h1v1h-1zM146 15h2v1h-2zM154 15h2v1h-2zM164 15h1v1h-1zM180 15h2v1h-2zM183 15h1v1h-1zM186 15h1v1h-1zM241 15h2v1h-2zM268 15h1v1h-1zM296 15h1v1h-1zM298 15h2v1h-2zM107 16h1v1h-1zM120 16h2v1h-2zM131 16h1v1h-1zM155 16h2v1h-2zM197 16h1v1h-1zM199 16h1v1h-1zM201 16h2v1h-2zM212 16h2v1h-2zM233 16h1v1h-1zM262 16h1v1h-1zM266 16h1v1h-1zM289 16h2v1h-2zM295 16h1v1h-1zM309 16h2v1h-2zM322 16h1v1h-1zM326 16h1v1h-1zM330 16h2v1h-2zM14 17h1v1h-1zM20 17h1v1h-1zM86 17h1v1h-1zM106 17h1v1h-1zM120 17h1v1h-1zM211 17h1v1h-1zM240 17h5v1h-5zM253 17h1v1h-1zM284 17h2v1h-2zM305 17h1v1h-1zM307 17h1v1h-1zM309 17h1v1h-1zM24 18h1v1h-1zM93 18h1v1h-1zM176 18h1v1h-1zM181 18h1v1h-1zM220 18h2v1h-2zM225 18h1v1h-1zM230 18h1v1h-1zM248 18h1v1h-1zM296 18h2v1h-2zM302 18h1v1h-1zM310 18h1v1h-1zM319 18h1v1h-1zM328 18h2v1h-2zM45 19h1v1h-1zM54 19h1v1h-1zM66 19h1v1h-1zM70 19h2v1h-2zM81 19h2v1h-2zM88 19h1v1h-1zM94 19h1v1h-1zM110 19h1v1h-1zM124 19h1v1h-1zM176 19h2v1h-2zM179 19h1v1h-1zM190 19h1v1h-1zM224 19h1v1h-1zM292 19h1v1h-1zM300 19h2v1h-2zM311 19h1v1h-1zM328 19h2v1h-2zM4 20h1v1h-1zM13 20h1v1h-1zM23 20h2v1h-2zM42 20h1v1h-1zM55 20h1v1h-1zM78 20h1v1h-1zM89 20h2v1h-2zM99 20h2v1h-2zM121 20h1v1h-1zM129 20h1v1h-1zM157 20h1v1h-1zM166 20h1v1h-1zM170 20h1v1h-1zM178 20h1v1h-1zM181 20h2v1h-2zM187 20h1v1h-1zM202 20h2v1h-2zM211 20h2v1h-2zM224 20h1v1h-1zM230 20h1v1h-1zM233 20h1v1h-1zM238 20h1v1h-1zM246 20h1v1h-1zM252 20h1v1h-1zM311 20h1v1h-1zM313 20h2v1h-2zM328 20h1v1h-1zM331 20h1v1h-1zM16 21h2v1h-2zM19 21h1v1h-1zM44 21h1v1h-1zM50 21h1v1h-1zM55 21h1v1h-1zM67 21h1v1h-1zM69 21h2v1h-2zM114 21h1v1h-1zM116 21h1v1h-1zM181 21h1v1h-1zM197 21h2v1h-2zM206 21h1v1h-1zM285 21h1v1h-1zM287 21h2v1h-2zM290 21h1v1h-1zM300 21h1v1h-1zM303 21h2v1h-2zM314 21h1v1h-1zM317 21h1v1h-1zM331 21h1v1h-1zM2 22h2v1h-2zM7 22h1v1h-1zM35 22h1v1h-1zM41 22h1v1h-1zM62 22h2v1h-2zM69 22h3v1h-3zM85 22h1v1h-1zM94 22h1v1h-1zM109 22h1v1h-1zM123 22h1v1h-1zM140 22h2v1h-2zM161 22h1v1h-1zM182 22h2v1h-2zM199 22h1v1h-1zM210 22h1v1h-1zM212 22h2v1h-2zM229 22h1v1h-1zM232 22h1v1h-1zM290 22h1v1h-1zM303 22h1v1h-1zM311 22h2v1h-2zM10 23h1v1h-1zM14 23h1v1h-1zM21 23h1v1h-1zM48 23h1v1h-1zM62 23h1v1h-1zM75 23h2v1h-2zM78 23h1v1h-1zM83 23h1v1h-1zM89 23h1v1h-1zM104 23h2v1h-2zM151 23h2v1h-2zM154 23h1v1h-1zM166 23h2v1h-2zM173 23h1v1h-1zM175 23h1v1h-1zM177 23h1v1h-1zM184 23h1v1h-1zM186 23h1v1h-1zM195 23h1v1h-1zM200 23h1v1h-1zM210 23h2v1h-2zM234 23h1v1h-1zM244 23h1v1h-1zM256 23h2v1h-2zM310 23h1v1h-1zM312 23h1v1h-1zM323 23h1v1h-1zM18 24h1v1h-1zM57 24h2v1h-2zM88 24h1v1h-1zM110 24h1v1h-1zM113 24h1v1h-1zM138 24h2v1h-2zM149 24h2v1h-2zM171 24h2v1h-2zM177 24h1v1h-1zM202 24h2v1h-2zM220 24h2v1h-2zM246 24h1v1h-1zM294 24h2v1h-2zM298 24h1v1h-1zM308 24h1v1h-1zM26 25h2v1h-2zM45 25h1v1h-1zM68 25h1v1h-1zM94 25h1v1h-1zM104 25h1v1h-1zM110 25h2v1h-2zM114 25h1v1h-1zM118 25h2v1h-2zM122 25h1v1h-1zM129 25h1v1h-1zM143 25h4v1h-4zM157 25h2v1h-2zM203 25h1v1h-1zM218 25h1v1h-1zM231 25h2v1h-2zM235 25h1v1h-1zM248 25h1v1h-1zM303 25h1v1h-1zM10 26h1v1h-1zM14 26h1v1h-1zM24 26h1v1h-1zM30 26h1v1h-1zM70 26h1v1h-1zM97 26h2v1h-2zM113 26h1v1h-1zM144 26h1v1h-1zM154 26h2v1h-2zM162 26h1v1h-1zM212 26h1v1h-1zM255 26h2v1h-2zM330 26h1v1h-1zM42 27h2v1h-2zM62 27h2v1h-2zM131 27h2v1h-2zM160 27h2v1h-2zM237 27h2v1h-2zM254 27h2v1h-2zM294 27h1v1h-1zM296 27h1v1h-1zM321 27h1v1h-1zM12 28h2v1h-2zM37 28h1v1h-1zM52 28h2v1h-2zM69 28h2v1h-2zM104 28h1v1h-1zM122 28h1v1h-1zM133 28h1v1h-1zM146 28h1v1h-1zM171 28h2v1h-2zM176 28h1v1h-1zM212 28h1v1h-1zM247 28h1v1h-1zM298 28h2v1h-2zM301 28h1v1h-1zM308 28h1v1h-1zM313 28h1v1h-1zM327 28h1v1h-1zM21 29h1v1h-1zM24 29h1v1h-1zM33 29h2v1h-2zM50 29h1v1h-1zM66 29h2v1h-2zM72 29h1v1h-1zM87 29h2v1h-2zM92 29h1v1h-1zM162 29h2v1h-2zM214 29h3v1h-3zM233 29h1v1h-1zM238 29h1v1h-1zM240 29h1v1h-1zM250 29h1v1h-1zM299 29h2v1h-2zM318 29h1v1h-1zM327 29h1v1h-1zM2 30h1v1h-1zM16 30h1v1h-1zM29 30h1v1h-1zM45 30h1v1h-1zM61 30h1v1h-1zM105 30h2v1h-2zM142 30h1v1h-1zM149 30h1v1h-1zM160 30h1v1h-1zM163 30h2v1h-2zM176 30h1v1h-1zM240 30h1v1h-1zM242 30h1v1h-1zM299 30h1v1h-1zM302 30h1v1h-1zM317 30h2v1h-2zM324 30h1v1h-1zM64 31h1v1h-1zM104 31h1v1h-1zM146 31h2v1h-2zM291 31h1v1h-1zM319 31h1v1h-1zM16 32h2v1h-2zM51 32h1v1h-1zM54 32h1v1h-1zM59 32h2v1h-2zM72 32h1v1h-1zM93 32h2v1h-2zM109 32h1v1h-1zM113 32h1v1h-1zM122 32h1v1h-1zM127 32h2v1h-2zM133 32h1v1h-1zM135 32h1v1h-1zM150 32h1v1h-1zM173 32h1v1h-1zM185 32h1v1h-1zM199 32h1v1h-1zM207 32h1v1h-1zM216 32h1v1h-1zM229 32h3v1h-3zM292 32h1v1h-1zM295 32h1v1h-1zM305 32h1v1h-1zM308 32h1v1h-1zM324 32h2v1h-2zM9 33h1v1h-1zM24 33h2v1h-2zM27 33h1v1h-1zM31 33h1v1h-1zM41 33h2v1h-2zM70 33h2v1h-2zM83 33h2v1h-2zM88 33h2v1h-2zM115 33h2v1h-2zM127 33h1v1h-1zM146 33h2v1h-2zM164 33h1v1h-1zM168 33h1v1h-1zM186 33h1v1h-1zM191 33h2v1h-2zM210 33h2v1h-2zM233 33h2v1h-2zM239 33h1v1h-1zM255 33h2v1h-2zM296 33h1v1h-1zM299 33h1v1h-1zM329 33h1v1h-1zM4 34h1v1h-1zM19 34h1v1h-1zM52 34h1v1h-1zM68 34h2v1h-2zM71 34h2v1h-2zM80 34h1v1h-1zM87 34h1v1h-1zM106 34h2v1h-2zM125 34h1v1h-1zM209 34h2v1h-2zM232 34h1v1h-1zM238 34h1v1h-1zM255 34h2v1h-2zM299 34h1v1h-1zM304 34h2v1h-2zM309 34h2v1h-2zM61 35h1v1h-1zM76 35h1v1h-1zM106 35h2v1h-2zM116 35h2v1h-2zM120 35h2v1h-2zM124 35h2v1h-2zM127 35h2v1h-2zM149 35h1v1h-1zM152 35h1v1h-1zM169 35h2v1h-2zM173 35h4v1h-4zM218 35h1v1h-1zM229 35h2v1h-2zM295 35h1v1h-1zM307 35h1v1h-1zM313 35h1v1h-1zM2 36h1v1h-1zM7 36h1v1h-1zM18 36h1v1h-1zM23 36h1v1h-1zM52 36h1v1h-1zM70 36h1v1h-1zM92 36h1v1h-1zM94 36h1v1h-1zM100 36h1v1h-1zM148 36h2v1h-2zM173 36h2v1h-2zM193 36h1v1h-1zM209 36h1v1h-1zM326 36h1v1h-1zM29 37h1v1h-1zM37 37h1v1h-1zM60 37h1v1h-1zM68 37h3v1h-3zM72 37h2v1h-2zM76 37h1v1h-1zM109 37h2v1h-2zM121 37h4v1h-4zM134 37h1v1h-1zM152 37h1v1h-1zM165 37h2v1h-2zM169 37h1v1h-1zM171 37h1v1h-1zM308 37h1v1h-1zM321 37h2v1h-2zM328 37h1v1h-1zM1 38h1v1h-1zM13 38h2v1h-2zM17 38h1v1h-1zM22 38h1v1h-1zM32 38h1v1h-1zM34 38h2v1h-2zM48 38h1v1h-1zM121 38h1v1h-1zM125 38h1v1h-1zM132 38h1v1h-1zM163 38h1v1h-1zM184 38h1v1h-1zM218 38h1v1h-1zM225 38h2v1h-2zM229 38h1v1h-1zM235 38h1v1h-1zM291 38h1v1h-1zM294 38h1v1h-1zM331 38h1v1h-1zM3 39h1v1h-1zM27 39h2v1h-2zM36 39h1v1h-1zM46 39h1v1h-1zM58 39h1v1h-1zM61 39h1v1h-1zM78 39h2v1h-2zM82 39h1v1h-1zM91 39h2v1h-2zM95 39h2v1h-2zM105 39h1v1h-1zM132 39h1v1h-1zM218 39h1v1h-1zM244 39h2v1h-2zM250 39h1v1h-1zM294 39h1v1h-1zM297 39h1v1h-1zM309 39h1v1h-1zM318 39h3v1h-3zM326 39h2v1h-2zM42 40h1v1h-1zM53 40h1v1h-1zM83 40h3v1h-3zM112 40h1v1h-1zM117 40h1v1h-1zM129 40h1v1h-1zM134 40h1v1h-1zM154 40h1v1h-1zM169 40h2v1h-2zM212 40h1v1h-1zM254 40h1v1h-1zM285 40h3v1h-3zM289 40h1v1h-1zM294 40h1v1h-1zM324 40h1v1h-1zM9 41h2v1h-2zM29 41h1v1h-1zM31 41h3v1h-3zM37 41h1v1h-1zM39 41h1v1h-1zM63 41h1v1h-1zM97 41h1v1h-1zM138 41h3v1h-3zM156 41h2v1h-2zM160 41h2v1h-2zM170 41h1v1h-1zM179 41h1v1h-1zM200 41h2v1h-2zM209 41h1v1h-1zM221 41h1v1h-1zM225 41h1v1h-1zM251 41h1v1h-1zM253 41h1v1h-1zM291 41h2v1h-2zM297 41h2v1h-2zM307 41h4v1h-4zM317 41h2v1h-2zM34 42h1v1h-1zM36 42h2v1h-2zM63 42h1v1h-1zM69 42h1v1h-1zM90 42h2v1h-2zM105 42h1v1h-1zM108 42h1v1h-1zM111 42h1v1h-1zM122 42h1v1h-1zM134 42h3v1h-3zM144 42h2v1h-2zM158 42h1v1h-1zM207 42h2v1h-2zM219 42h2v1h-2zM244 42h1v1h-1zM286 42h2v1h-2zM291 42h1v1h-1zM26 43h1v1h-1zM37 43h4v1h-4zM63 43h1v1h-1zM67 43h1v1h-1zM89 43h1v1h-1zM133 43h2v1h-2zM140 43h1v1h-1zM157 43h1v1h-1zM160 43h2v1h-2zM168 43h1v1h-1zM175 43h1v1h-1zM179 43h1v1h-1zM220 43h1v1h-1zM235 43h1v1h-1zM289 43h1v1h-1zM298 43h1v1h-1zM303 43h2v1h-2zM311 43h2v1h-2zM318 43h2v1h-2zM331 43h1v1h-1zM6 44h1v1h-1zM80 44h1v1h-1zM101 44h1v1h-1zM136 44h1v1h-1zM140 44h1v1h-1zM151 44h1v1h-1zM175 44h1v1h-1zM188 44h1v1h-1zM211 44h2v1h-2zM224 44h1v1h-1zM246 44h1v1h-1zM283 44h1v1h-1zM306 44h1v1h-1zM21 45h1v1h-1zM30 45h1v1h-1zM42 45h2v1h-2zM52 45h1v1h-1zM89 45h1v1h-1zM98 45h1v1h-1zM103 45h1v1h-1zM126 45h1v1h-1zM137 45h1v1h-1zM148 45h2v1h-2zM192 45h1v1h-1zM196 45h1v1h-1zM206 45h2v1h-2zM218 45h3v1h-3zM291 45h1v1h-1zM297 45h2v1h-2zM323 45h1v1h-1zM15 46h2v1h-2zM52 46h2v1h-2zM59 46h1v1h-1zM66 46h1v1h-1zM69 46h1v1h-1zM102 46h1v1h-1zM104 46h2v1h-2zM110 46h2v1h-2zM158 46h2v1h-2zM169 46h1v1h-1zM205 46h1v1h-1zM207 46h1v1h-1zM215 46h1v1h-1zM217 46h1v1h-1zM245 46h2v1h-2zM292 46h1v1h-1zM322 46h1v1h-1zM1 47h2v1h-2zM12 47h1v1h-1zM17 47h2v1h-2zM42 47h1v1h-1zM78 47h3v1h-3zM87 47h1v1h-1zM104 47h2v1h-2zM166 47h2v1h-2zM174 47h2v1h-2zM236 47h1v1h-1zM287 47h2v1h-2zM290 47h1v1h-1zM319 47h2v1h-2zM3 48h1v1h-1zM31 48h1v1h-1zM124 48h2v1h-2zM134 48h1v1h-1zM194 48h1v1h-1zM202 48h1v1h-1zM225 48h1v1h-1zM230 48h1v1h-1zM284 48h1v1h-1zM7 49h2v1h-2zM19 49h1v1h-1zM22 49h2v1h-2zM33 49h1v1h-1zM55 49h2v1h-2zM65 49h1v1h-1zM89 49h1v1h-1zM98 49h1v1h-1zM100 49h1v1h-1zM123 49h1v1h-1zM125 49h2v1h-2zM138 49h1v1h-1zM149 49h2v1h-2zM154 49h2v1h-2zM159 49h2v1h-2zM163 49h1v1h-1zM283 49h2v1h-2zM294 49h1v1h-1zM9 50h2v1h-2zM17 50h1v1h-1zM20 50h1v1h-1zM75 50h1v1h-1zM88 50h1v1h-1zM116 50h2v1h-2zM147 50h1v1h-1zM153 50h2v1h-2zM177 50h1v1h-1zM181 50h1v1h-1zM190 50h1v1h-1zM203 50h1v1h-1zM279 50h1v1h-1zM281 50h3v1h-3zM286 50h1v1h-1zM322 50h1v1h-1zM11 51h2v1h-2zM62 51h1v1h-1zM68 51h1v1h-1zM99 51h1v1h-1zM108 51h1v1h-1zM138 51h1v1h-1zM195 51h1v1h-1zM197 51h2v1h-2zM203 51h2v1h-2zM208 51h1v1h-1zM213 51h4v1h-4zM282 51h1v1h-1zM286 51h1v1h-1zM9 52h1v1h-1zM18 52h2v1h-2zM28 52h1v1h-1zM31 52h1v1h-1zM50 52h1v1h-1zM71 52h1v1h-1zM75 52h1v1h-1zM79 52h1v1h-1zM85 52h2v1h-2zM88 52h1v1h-1zM111 52h1v1h-1zM138 52h1v1h-1zM143 52h2v1h-2zM162 52h1v1h-1zM233 52h1v1h-1zM285 52h2v1h-2zM289 52h2v1h-2zM292 52h1v1h-1zM307 52h2v1h-2zM323 52h1v1h-1zM16 53h1v1h-1zM45 53h2v1h-2zM53 53h2v1h-2zM78 53h1v1h-1zM86 53h1v1h-1zM110 53h2v1h-2zM171 53h2v1h-2zM278 53h1v1h-1zM304 53h1v1h-1zM312 53h2v1h-2zM21 54h1v1h-1zM24 54h1v1h-1zM119 54h1v1h-1zM139 54h2v1h-2zM150 54h1v1h-1zM200 54h2v1h-2zM205 54h1v1h-1zM215 54h2v1h-2zM220 54h2v1h-2zM232 54h1v1h-1zM251 54h1v1h-1zM285 54h1v1h-1zM6 55h1v1h-1zM16 55h1v1h-1zM38 55h2v1h-2zM119 55h1v1h-1zM142 55h2v1h-2zM161 55h1v1h-1zM165 55h1v1h-1zM222 55h2v1h-2zM231 55h1v1h-1zM235 55h1v1h-1zM280 55h1v1h-1zM307 55h1v1h-1zM318 55h1v1h-1zM328 55h2v1h-2zM4 56h1v1h-1zM11 56h2v1h-2zM15 56h1v1h-1zM44 56h1v1h-1zM46 56h1v1h-1zM49 56h1v1h-1zM52 56h1v1h-1zM76 56h1v1h-1zM84 56h1v1h-1zM90 56h1v1h-1zM96 56h2v1h-2zM102 56h1v1h-1zM118 56h3v1h-3zM126 56h2v1h-2zM187 56h1v1h-1zM193 56h2v1h-2zM204 56h1v1h-1zM212 56h1v1h-1zM244 56h2v1h-2zM278 56h2v1h-2zM281 56h1v1h-1zM296 56h2v1h-2zM24 57h1v1h-1zM47 57h2v1h-2zM117 57h1v1h-1zM142 57h2v1h-2zM197 57h1v1h-1zM233 57h1v1h-1zM245 57h1v1h-1zM273 57h1v1h-1zM276 57h1v1h-1zM322 57h1v1h-1zM22 58h1v1h-1zM40 58h2v1h-2zM60 58h2v1h-2zM77 58h1v1h-1zM83 58h1v1h-1zM93 58h1v1h-1zM111 58h2v1h-2zM132 58h1v1h-1zM151 58h1v1h-1zM181 58h1v1h-1zM191 58h2v1h-2zM194 58h1v1h-1zM196 58h1v1h-1zM198 58h2v1h-2zM205 58h1v1h-1zM212 58h2v1h-2zM233 58h1v1h-1zM244 58h1v1h-1zM278 58h1v1h-1zM296 58h2v1h-2zM5 59h1v1h-1zM18 59h2v1h-2zM87 59h2v1h-2zM140 59h1v1h-1zM143 59h2v1h-2zM191 59h2v1h-2zM220 59h1v1h-1zM232 59h1v1h-1zM280 59h1v1h-1zM298 59h1v1h-1zM321 59h1v1h-1zM4 60h2v1h-2zM16 60h1v1h-1zM31 60h4v1h-4zM47 60h1v1h-1zM83 60h1v1h-1zM108 60h1v1h-1zM117 60h2v1h-2zM124 60h1v1h-1zM152 60h2v1h-2zM166 60h2v1h-2zM189 60h2v1h-2zM207 60h3v1h-3zM226 60h1v1h-1zM239 60h1v1h-1zM274 60h1v1h-1zM280 60h1v1h-1zM296 60h1v1h-1zM301 60h2v1h-2zM325 60h2v1h-2zM16 61h1v1h-1zM44 61h1v1h-1zM88 61h1v1h-1zM99 61h1v1h-1zM126 61h2v1h-2zM142 61h2v1h-2zM148 61h1v1h-1zM150 61h1v1h-1zM174 61h1v1h-1zM207 61h1v1h-1zM218 61h2v1h-2zM226 61h3v1h-3zM275 61h1v1h-1zM280 61h1v1h-1zM330 61h1v1h-1zM4 62h2v1h-2zM38 62h1v1h-1zM55 62h2v1h-2zM63 62h2v1h-2zM67 62h2v1h-2zM94 62h1v1h-1zM109 62h2v1h-2zM120 62h1v1h-1zM122 62h1v1h-1zM131 62h2v1h-2zM233 62h1v1h-1zM243 62h1v1h-1zM270 62h1v1h-1zM276 62h1v1h-1zM283 62h1v1h-1zM289 62h1v1h-1zM298 62h1v1h-1zM4 63h1v1h-1zM11 63h1v1h-1zM13 63h1v1h-1zM61 63h1v1h-1zM72 63h1v1h-1zM93 63h2v1h-2zM105 63h2v1h-2zM109 63h2v1h-2zM113 63h2v1h-2zM120 63h1v1h-1zM173 63h2v1h-2zM199 63h2v1h-2zM231 63h2v1h-2zM271 63h1v1h-1zM296 63h1v1h-1zM300 63h1v1h-1zM317 63h1v1h-1zM25 64h1v1h-1zM57 64h1v1h-1zM82 64h2v1h-2zM136 64h1v1h-1zM149 64h3v1h-3zM174 64h1v1h-1zM189 64h1v1h-1zM244 64h1v1h-1zM289 64h1v1h-1zM20 65h1v1h-1zM26 65h1v1h-1zM43 65h2v1h-2zM80 65h2v1h-2zM96 65h1v1h-1zM105 65h1v1h-1zM108 65h2v1h-2zM124 65h1v1h-1zM170 65h1v1h-1zM179 65h2v1h-2zM208 65h1v1h-1zM215 65h1v1h-1zM220 65h2v1h-2zM243 65h1v1h-1zM249 65h2v1h-2zM269 65h1v1h-1zM271 65h1v1h-1zM273 65h3v1h-3zM42 66h1v1h-1zM87 66h1v1h-1zM99 66h2v1h-2zM118 66h2v1h-2zM148 66h2v1h-2zM158 66h1v1h-1zM221 66h1v1h-1zM244 66h1v1h-1zM250 66h1v1h-1zM272 66h1v1h-1zM287 66h2v1h-2zM292 66h2v1h-2zM305 66h1v1h-1zM325 66h2v1h-2zM329 66h1v1h-1zM2 67h1v1h-1zM4 67h1v1h-1zM38 67h1v1h-1zM52 67h2v1h-2zM60 67h2v1h-2zM67 67h2v1h-2zM83 67h2v1h-2zM112 67h2v1h-2zM153 67h2v1h-2zM161 67h2v1h-2zM167 67h1v1h-1zM176 67h2v1h-2zM190 67h3v1h-3zM194 67h1v1h-1zM197 67h1v1h-1zM248 67h2v1h-2zM278 67h2v1h-2zM282 67h2v1h-2zM307 67h1v1h-1zM329 67h1v1h-1zM12 68h1v1h-1zM23 68h1v1h-1zM28 68h1v1h-1zM37 68h1v1h-1zM46 68h1v1h-1zM51 68h2v1h-2zM63 68h1v1h-1zM69 68h1v1h-1zM105 68h3v1h-3zM110 68h1v1h-1zM145 68h1v1h-1zM149 68h2v1h-2zM205 68h1v1h-1zM215 68h3v1h-3zM248 68h2v1h-2zM252 68h1v1h-1zM274 68h1v1h-1zM324 68h1v1h-1zM4 69h3v1h-3zM26 69h1v1h-1zM54 69h1v1h-1zM107 69h2v1h-2zM123 69h2v1h-2zM135 69h1v1h-1zM144 69h1v1h-1zM154 69h1v1h-1zM185 69h1v1h-1zM233 69h2v1h-2zM272 69h2v1h-2zM283 69h1v1h-1zM321 69h1v1h-1zM331 69h1v1h-1zM22 70h1v1h-1zM49 70h2v1h-2zM76 70h1v1h-1zM102 70h1v1h-1zM136 70h3v1h-3zM149 70h1v1h-1zM157 70h1v1h-1zM171 70h1v1h-1zM174 70h1v1h-1zM189 70h2v1h-2zM192 70h2v1h-2zM251 70h1v1h-1zM274 70h2v1h-2zM331 70h1v1h-1zM4 71h1v1h-1zM16 71h1v1h-1zM26 71h2v1h-2zM40 71h1v1h-1zM75 71h2v1h-2zM78 71h1v1h-1zM93 71h2v1h-2zM97 71h1v1h-1zM99 71h1v1h-1zM112 71h2v1h-2zM123 71h1v1h-1zM152 71h1v1h-1zM203 71h1v1h-1zM235 71h2v1h-2zM241 71h1v1h-1zM310 71h2v1h-2zM323 71h1v1h-1zM1 72h2v1h-2zM4 72h1v1h-1zM20 72h1v1h-1zM33 72h1v1h-1zM39 72h1v1h-1zM92 72h1v1h-1zM113 72h1v1h-1zM128 72h1v1h-1zM132 72h1v1h-1zM157 72h1v1h-1zM202 72h2v1h-2zM221 72h2v1h-2zM249 72h1v1h-1zM270 72h1v1h-1zM277 72h1v1h-1zM330 72h2v1h-2zM13 73h1v1h-1zM18 73h1v1h-1zM37 73h1v1h-1zM50 73h1v1h-1zM53 73h1v1h-1zM63 73h1v1h-1zM98 73h1v1h-1zM101 73h1v1h-1zM112 73h2v1h-2zM128 73h1v1h-1zM198 73h2v1h-2zM273 73h1v1h-1zM277 73h1v1h-1zM286 73h1v1h-1zM324 73h2v1h-2zM9 74h1v1h-1zM15 74h1v1h-1zM17 74h2v1h-2zM42 74h1v1h-1zM49 74h1v1h-1zM58 74h1v1h-1zM75 74h1v1h-1zM137 74h2v1h-2zM160 74h2v1h-2zM171 74h1v1h-1zM208 74h1v1h-1zM226 74h1v1h-1zM267 74h1v1h-1zM270 74h1v1h-1zM272 74h1v1h-1zM274 74h1v1h-1zM297 74h4v1h-4zM316 74h2v1h-2zM34 75h2v1h-2zM38 75h2v1h-2zM42 75h1v1h-1zM71 75h1v1h-1zM78 75h1v1h-1zM93 75h2v1h-2zM103 75h2v1h-2zM127 75h1v1h-1zM137 75h2v1h-2zM164 75h1v1h-1zM223 75h1v1h-1zM273 75h1v1h-1zM288 75h2v1h-2zM321 75h1v1h-1zM328 75h1v1h-1zM27 76h1v1h-1zM34 76h1v1h-1zM52 76h1v1h-1zM66 76h2v1h-2zM80 76h1v1h-1zM108 76h1v1h-1zM112 76h2v1h-2zM155 76h2v1h-2zM314 76h1v1h-1zM319 76h2v1h-2zM331 76h1v1h-1zM15 77h1v1h-1zM43 77h1v1h-1zM48 77h2v1h-2zM72 77h2v1h-2zM85 77h2v1h-2zM121 77h2v1h-2zM145 77h1v1h-1zM149 77h1v1h-1zM154 77h1v1h-1zM177 77h2v1h-2zM193 77h2v1h-2zM200 77h1v1h-1zM218 77h1v1h-1zM271 77h1v1h-1zM277 77h2v1h-2zM301 77h2v1h-2zM316 77h1v1h-1zM321 77h1v1h-1zM26 78h1v1h-1zM34 78h2v1h-2zM66 78h1v1h-1zM70 78h1v1h-1zM95 78h1v1h-1zM104 78h2v1h-2zM118 78h2v1h-2zM128 78h2v1h-2zM226 78h1v1h-1zM268 78h1v1h-1zM296 78h4v1h-4zM318 78h2v1h-2zM1 79h1v1h-1zM11 79h2v1h-2zM79 79h1v1h-1zM108 79h1v1h-1zM133 79h1v1h-1zM157 79h1v1h-1zM184 79h1v1h-1zM208 79h1v1h-1zM212 79h1v1h-1zM271 79h1v1h-1zM273 79h1v1h-1zM275 79h2v1h-2zM290 79h2v1h-2zM293 79h1v1h-1zM318 79h1v1h-1zM330 79h2v1h-2zM22 80h1v1h-1zM68 80h2v1h-2zM79 80h2v1h-2zM86 80h1v1h-1zM119 80h1v1h-1zM126 80h2v1h-2zM134 80h2v1h-2zM139 80h1v1h-1zM149 80h1v1h-1zM197 80h1v1h-1zM208 80h1v1h-1zM211 80h1v1h-1zM220 80h2v1h-2zM239 80h1v1h-1zM241 80h1v1h-1zM278 80h2v1h-2zM289 80h1v1h-1zM296 80h2v1h-2zM1 81h1v1h-1zM37 81h1v1h-1zM49 81h1v1h-1zM85 81h2v1h-2zM120 81h2v1h-2zM126 81h1v1h-1zM142 81h2v1h-2zM145 81h1v1h-1zM175 81h2v1h-2zM193 81h1v1h-1zM197 81h1v1h-1zM202 81h1v1h-1zM226 81h1v1h-1zM267 81h1v1h-1zM271 81h1v1h-1zM322 81h1v1h-1zM0 82h2v1h-2zM3 82h2v1h-2zM33 82h2v1h-2zM55 82h2v1h-2zM68 82h2v1h-2zM72 82h1v1h-1zM79 82h2v1h-2zM123 82h1v1h-1zM190 82h2v1h-2zM196 82h1v1h-1zM251 82h1v1h-1zM280 82h1v1h-1zM293 82h1v1h-1zM295 82h1v1h-1zM305 82h2v1h-2zM0 83h1v1h-1zM66 83h1v1h-1zM73 83h2v1h-2zM92 83h1v1h-1zM97 83h1v1h-1zM144 83h1v1h-1zM185 83h1v1h-1zM190 83h2v1h-2zM267 83h1v1h-1zM271 83h1v1h-1zM276 83h2v1h-2zM299 83h1v1h-1zM303 83h1v1h-1zM51 84h2v1h-2zM65 84h2v1h-2zM122 84h1v1h-1zM131 84h2v1h-2zM171 84h2v1h-2zM186 84h2v1h-2zM189 84h3v1h-3zM222 84h2v1h-2zM241 84h1v1h-1zM243 84h1v1h-1zM246 84h1v1h-1zM266 84h1v1h-1zM284 84h2v1h-2zM292 84h2v1h-2zM298 84h1v1h-1zM301 84h1v1h-1zM308 84h2v1h-2zM330 84h1v1h-1zM0 85h2v1h-2zM10 85h1v1h-1zM12 85h2v1h-2zM19 85h2v1h-2zM43 85h1v1h-1zM79 85h1v1h-1zM103 85h2v1h-2zM122 85h1v1h-1zM156 85h2v1h-2zM167 85h1v1h-1zM189 85h2v1h-2zM220 85h1v1h-1zM238 85h1v1h-1zM268 85h1v1h-1zM272 85h1v1h-1zM281 85h2v1h-2zM286 85h1v1h-1zM290 85h1v1h-1zM292 85h2v1h-2zM318 85h2v1h-2zM7 86h1v1h-1zM47 86h1v1h-1zM87 86h2v1h-2zM100 86h1v1h-1zM102 86h2v1h-2zM107 86h1v1h-1zM121 86h2v1h-2zM127 86h1v1h-1zM139 86h2v1h-2zM159 86h1v1h-1zM166 86h2v1h-2zM171 86h1v1h-1zM189 86h1v1h-1zM249 86h1v1h-1zM269 86h1v1h-1zM290 86h1v1h-1zM301 86h2v1h-2zM321 86h1v1h-1zM67 87h1v1h-1zM79 87h1v1h-1zM86 87h1v1h-1zM99 87h1v1h-1zM104 87h1v1h-1zM117 87h2v1h-2zM127 87h1v1h-1zM129 87h1v1h-1zM145 87h2v1h-2zM190 87h1v1h-1zM212 87h1v1h-1zM238 87h1v1h-1zM268 87h1v1h-1zM305 87h2v1h-2zM323 87h1v1h-1zM325 87h1v1h-1zM331 87h1v1h-1zM18 88h1v1h-1zM147 88h1v1h-1zM164 88h2v1h-2zM175 88h1v1h-1zM243 88h1v1h-1zM269 88h1v1h-1zM299 88h1v1h-1zM327 88h1v1h-1zM13 89h1v1h-1zM47 89h1v1h-1zM64 89h1v1h-1zM69 89h1v1h-1zM159 89h2v1h-2zM164 89h1v1h-1zM186 89h2v1h-2zM194 89h2v1h-2zM221 89h1v1h-1zM270 89h1v1h-1zM279 89h2v1h-2zM316 89h1v1h-1zM29 90h2v1h-2zM47 90h1v1h-1zM78 90h1v1h-1zM95 90h2v1h-2zM109 90h2v1h-2zM112 90h1v1h-1zM190 90h2v1h-2zM198 90h2v1h-2zM243 90h2v1h-2zM269 90h1v1h-1zM282 90h1v1h-1zM287 90h1v1h-1zM76 91h1v1h-1zM141 91h2v1h-2zM153 91h1v1h-1zM159 91h3v1h-3zM168 91h1v1h-1zM205 91h3v1h-3zM216 91h1v1h-1zM226 91h1v1h-1zM233 91h1v1h-1zM250 91h1v1h-1zM266 91h2v1h-2zM269 91h1v1h-1zM302 91h1v1h-1zM313 91h1v1h-1zM0 92h2v1h-2zM53 92h1v1h-1zM64 92h2v1h-2zM85 92h1v1h-1zM127 92h1v1h-1zM136 92h1v1h-1zM170 92h1v1h-1zM189 92h1v1h-1zM209 92h1v1h-1zM216 92h1v1h-1zM227 92h1v1h-1zM265 92h2v1h-2zM275 92h2v1h-2zM286 92h1v1h-1zM3 93h1v1h-1zM13 93h1v1h-1zM25 93h2v1h-2zM40 93h1v1h-1zM58 93h3v1h-3zM74 93h1v1h-1zM81 93h1v1h-1zM116 93h2v1h-2zM131 93h1v1h-1zM149 93h1v1h-1zM160 93h1v1h-1zM172 93h2v1h-2zM177 93h1v1h-1zM183 93h1v1h-1zM187 93h1v1h-1zM227 93h2v1h-2zM268 93h1v1h-1zM287 93h2v1h-2zM321 93h4v1h-4zM328 93h1v1h-1zM25 94h2v1h-2zM44 94h1v1h-1zM79 94h1v1h-1zM93 94h2v1h-2zM116 94h1v1h-1zM134 94h2v1h-2zM174 94h1v1h-1zM185 94h1v1h-1zM196 94h1v1h-1zM206 94h1v1h-1zM244 94h2v1h-2zM295 94h2v1h-2zM299 94h2v1h-2zM328 94h2v1h-2zM34 95h2v1h-2zM54 95h2v1h-2zM59 95h1v1h-1zM78 95h2v1h-2zM81 95h1v1h-1zM105 95h3v1h-3zM115 95h2v1h-2zM121 95h1v1h-1zM144 95h1v1h-1zM149 95h1v1h-1zM167 95h1v1h-1zM184 95h1v1h-1zM203 95h1v1h-1zM211 95h1v1h-1zM241 95h1v1h-1zM265 95h2v1h-2zM269 95h1v1h-1zM284 95h1v1h-1zM286 95h1v1h-1zM303 95h2v1h-2zM60 96h1v1h-1zM131 96h1v1h-1zM152 96h1v1h-1zM162 96h2v1h-2zM212 96h2v1h-2zM225 96h2v1h-2zM265 96h2v1h-2zM270 96h1v1h-1zM285 96h2v1h-2zM64 97h2v1h-2zM119 97h1v1h-1zM131 97h4v1h-4zM213 97h1v1h-1zM220 97h1v1h-1zM239 97h1v1h-1zM267 97h1v1h-1zM276 97h1v1h-1zM18 98h1v1h-1zM22 98h2v1h-2zM44 98h1v1h-1zM55 98h1v1h-1zM62 98h2v1h-2zM83 98h1v1h-1zM88 98h2v1h-2zM115 98h2v1h-2zM134 98h1v1h-1zM144 98h2v1h-2zM148 98h1v1h-1zM166 98h1v1h-1zM195 98h2v1h-2zM210 98h2v1h-2zM300 98h1v1h-1zM307 98h2v1h-2zM331 98h1v1h-1zM6 99h2v1h-2zM41 99h1v1h-1zM65 99h1v1h-1zM83 99h1v1h-1zM111 99h2v1h-2zM122 99h1v1h-1zM125 99h1v1h-1zM139 99h1v1h-1zM172 99h1v1h-1zM215 99h1v1h-1zM239 99h2v1h-2zM263 99h1v1h-1zM279 99h1v1h-1zM289 99h2v1h-2zM11 100h1v1h-1zM75 100h1v1h-1zM91 100h1v1h-1zM121 100h3v1h-3zM132 100h1v1h-1zM142 100h2v1h-2zM149 100h1v1h-1zM151 100h1v1h-1zM173 100h2v1h-2zM195 100h2v1h-2zM266 100h1v1h-1zM282 100h1v1h-1zM298 100h1v1h-1zM307 100h1v1h-1zM5 101h2v1h-2zM73 101h2v1h-2zM154 101h1v1h-1zM159 101h2v1h-2zM175 101h1v1h-1zM216 101h1v1h-1zM230 101h1v1h-1zM262 101h1v1h-1zM266 101h1v1h-1zM281 101h2v1h-2zM305 101h1v1h-1zM307 101h1v1h-1zM312 101h2v1h-2zM10 102h1v1h-1zM51 102h2v1h-2zM62 102h1v1h-1zM79 102h1v1h-1zM95 102h2v1h-2zM108 102h2v1h-2zM197 102h1v1h-1zM200 102h2v1h-2zM226 102h1v1h-1zM265 102h1v1h-1zM276 102h1v1h-1zM285 102h2v1h-2zM308 102h1v1h-1zM19 103h2v1h-2zM75 103h2v1h-2zM87 103h1v1h-1zM98 103h2v1h-2zM111 103h2v1h-2zM124 103h1v1h-1zM163 103h2v1h-2zM229 103h3v1h-3zM249 103h1v1h-1zM283 103h3v1h-3zM309 103h2v1h-2zM319 103h1v1h-1zM5 104h2v1h-2zM37 104h1v1h-1zM44 104h1v1h-1zM48 104h1v1h-1zM87 104h2v1h-2zM126 104h1v1h-1zM135 104h1v1h-1zM185 104h2v1h-2zM266 104h3v1h-3zM302 104h1v1h-1zM4 105h2v1h-2zM10 105h2v1h-2zM46 105h1v1h-1zM56 105h1v1h-1zM72 105h1v1h-1zM109 105h1v1h-1zM141 105h1v1h-1zM143 105h2v1h-2zM265 105h1v1h-1zM281 105h1v1h-1zM290 105h1v1h-1zM315 105h2v1h-2zM328 105h1v1h-1zM11 106h2v1h-2zM56 106h2v1h-2zM95 106h2v1h-2zM105 106h1v1h-1zM136 106h1v1h-1zM139 106h1v1h-1zM149 106h3v1h-3zM161 106h4v1h-4zM169 106h1v1h-1zM188 106h1v1h-1zM191 106h2v1h-2zM210 106h1v1h-1zM236 106h2v1h-2zM264 106h1v1h-1zM266 106h1v1h-1zM281 106h1v1h-1zM308 106h1v1h-1zM321 106h2v1h-2zM42 107h2v1h-2zM47 107h1v1h-1zM75 107h2v1h-2zM95 107h2v1h-2zM110 107h1v1h-1zM124 107h2v1h-2zM212 107h1v1h-1zM232 107h2v1h-2zM239 107h1v1h-1zM242 107h1v1h-1zM261 107h1v1h-1zM263 107h2v1h-2zM290 107h1v1h-1zM307 107h1v1h-1zM10 108h1v1h-1zM38 108h2v1h-2zM60 108h1v1h-1zM111 108h1v1h-1zM114 108h1v1h-1zM140 108h1v1h-1zM146 108h1v1h-1zM155 108h2v1h-2zM199 108h1v1h-1zM264 108h2v1h-2zM293 108h1v1h-1zM300 108h2v1h-2zM8 109h2v1h-2zM81 109h2v1h-2zM91 109h2v1h-2zM110 109h1v1h-1zM115 109h2v1h-2zM135 109h2v1h-2zM140 109h1v1h-1zM172 109h2v1h-2zM224 109h1v1h-1zM260 109h1v1h-1zM262 109h3v1h-3zM7 110h1v1h-1zM15 110h1v1h-1zM124 110h2v1h-2zM154 110h1v1h-1zM187 110h1v1h-1zM203 110h2v1h-2zM281 110h1v1h-1zM302 110h1v1h-1zM16 111h1v1h-1zM31 111h3v1h-3zM111 111h1v1h-1zM137 111h1v1h-1zM154 111h1v1h-1zM166 111h1v1h-1zM170 111h2v1h-2zM173 111h1v1h-1zM194 111h2v1h-2zM215 111h1v1h-1zM231 111h1v1h-1zM260 111h1v1h-1zM271 111h2v1h-2zM289 111h2v1h-2zM314 111h1v1h-1zM323 111h1v1h-1zM20 112h2v1h-2zM40 112h1v1h-1zM56 112h1v1h-1zM65 112h2v1h-2zM79 112h1v1h-1zM98 112h1v1h-1zM119 112h1v1h-1zM192 112h2v1h-2zM207 112h2v1h-2zM229 112h1v1h-1zM234 112h1v1h-1zM236 112h1v1h-1zM323 112h2v1h-2zM8 113h1v1h-1zM18 113h1v1h-1zM88 113h1v1h-1zM93 113h2v1h-2zM111 113h2v1h-2zM165 113h1v1h-1zM196 113h2v1h-2zM208 113h1v1h-1zM240 113h1v1h-1zM249 113h1v1h-1zM261 113h1v1h-1zM265 113h1v1h-1zM299 113h1v1h-1zM304 113h2v1h-2zM313 113h1v1h-1zM9 114h2v1h-2zM18 114h1v1h-1zM29 114h2v1h-2zM57 114h2v1h-2zM60 114h2v1h-2zM67 114h2v1h-2zM85 114h1v1h-1zM154 114h1v1h-1zM164 114h1v1h-1zM177 114h1v1h-1zM226 114h1v1h-1zM246 114h1v1h-1zM266 114h1v1h-1zM269 114h2v1h-2zM277 114h1v1h-1zM289 114h3v1h-3zM300 114h3v1h-3zM47 115h1v1h-1zM49 115h1v1h-1zM54 115h1v1h-1zM61 115h2v1h-2zM95 115h1v1h-1zM109 115h2v1h-2zM122 115h1v1h-1zM138 115h2v1h-2zM153 115h1v1h-1zM162 115h1v1h-1zM176 115h1v1h-1zM186 115h2v1h-2zM276 115h2v1h-2zM309 115h1v1h-1zM327 115h1v1h-1zM331 115h1v1h-1zM3 116h1v1h-1zM15 116h1v1h-1zM18 116h1v1h-1zM30 116h1v1h-1zM41 116h1v1h-1zM49 116h1v1h-1zM56 116h1v1h-1zM62 116h1v1h-1zM108 116h2v1h-2zM112 116h2v1h-2zM128 116h2v1h-2zM138 116h1v1h-1zM152 116h2v1h-2zM184 116h1v1h-1zM235 116h1v1h-1zM245 116h1v1h-1zM262 116h1v1h-1zM292 116h1v1h-1zM308 116h2v1h-2zM321 116h2v1h-2zM13 117h1v1h-1zM39 117h1v1h-1zM54 117h2v1h-2zM84 117h2v1h-2zM96 117h2v1h-2zM101 117h2v1h-2zM105 117h1v1h-1zM129 117h4v1h-4zM144 117h1v1h-1zM150 117h1v1h-1zM182 117h1v1h-1zM184 117h2v1h-2zM210 117h1v1h-1zM225 117h1v1h-1zM232 117h1v1h-1zM262 117h1v1h-1zM277 117h1v1h-1zM280 117h2v1h-2zM321 117h2v1h-2zM3 118h1v1h-1zM57 118h1v1h-1zM102 118h1v1h-1zM109 118h1v1h-1zM169 118h2v1h-2zM176 118h1v1h-1zM203 118h1v1h-1zM226 118h1v1h-1zM228 118h1v1h-1zM266 118h2v1h-2zM305 118h1v1h-1zM324 118h1v1h-1zM120 119h1v1h-1zM142 119h1v1h-1zM178 119h1v1h-1zM187 119h2v1h-2zM220 119h1v1h-1zM233 119h1v1h-1zM285 119h2v1h-2zM289 119h1v1h-1zM295 119h2v1h-2zM22 120h1v1h-1zM35 120h1v1h-1zM46 120h1v1h-1zM53 120h1v1h-1zM72 120h1v1h-1zM88 120h1v1h-1zM96 120h1v1h-1zM137 120h2v1h-2zM171 120h2v1h-2zM213 120h1v1h-1zM241 120h2v1h-2zM261 120h1v1h-1zM263 120h1v1h-1zM265 120h1v1h-1zM275 120h2v1h-2zM286 120h1v1h-1zM295 120h1v1h-1zM297 120h1v1h-1zM324 120h1v1h-1zM327 120h2v1h-2zM38 121h2v1h-2zM62 121h1v1h-1zM78 121h1v1h-1zM97 121h3v1h-3zM102 121h1v1h-1zM105 121h1v1h-1zM113 121h1v1h-1zM153 121h1v1h-1zM165 121h1v1h-1zM172 121h1v1h-1zM185 121h1v1h-1zM215 121h1v1h-1zM232 121h2v1h-2zM285 121h2v1h-2zM17 122h1v1h-1zM78 122h1v1h-1zM98 122h2v1h-2zM118 122h1v1h-1zM143 122h1v1h-1zM153 122h1v1h-1zM176 122h1v1h-1zM179 122h2v1h-2zM202 122h1v1h-1zM206 122h1v1h-1zM209 122h1v1h-1zM223 122h2v1h-2zM229 122h1v1h-1zM261 122h1v1h-1zM275 122h1v1h-1zM289 122h1v1h-1zM323 122h1v1h-1zM20 123h2v1h-2zM34 123h1v1h-1zM41 123h1v1h-1zM54 123h3v1h-3zM68 123h2v1h-2zM73 123h2v1h-2zM104 123h1v1h-1zM127 123h1v1h-1zM132 123h1v1h-1zM136 123h1v1h-1zM152 123h1v1h-1zM177 123h1v1h-1zM185 123h1v1h-1zM211 123h1v1h-1zM214 123h2v1h-2zM265 123h1v1h-1zM270 123h1v1h-1zM327 123h2v1h-2zM17 124h1v1h-1zM54 124h1v1h-1zM58 124h2v1h-2zM84 124h1v1h-1zM104 124h1v1h-1zM123 124h1v1h-1zM125 124h1v1h-1zM173 124h1v1h-1zM182 124h1v1h-1zM193 124h1v1h-1zM215 124h1v1h-1zM265 124h3v1h-3zM271 124h2v1h-2zM280 124h2v1h-2zM298 124h1v1h-1zM303 124h2v1h-2zM313 124h2v1h-2zM124 125h2v1h-2zM137 125h1v1h-1zM158 125h1v1h-1zM185 125h1v1h-1zM214 125h1v1h-1zM219 125h1v1h-1zM222 125h1v1h-1zM239 125h1v1h-1zM262 125h1v1h-1zM265 125h1v1h-1zM267 125h2v1h-2zM290 125h1v1h-1zM303 125h1v1h-1zM0 126h1v1h-1zM6 126h1v1h-1zM42 126h1v1h-1zM62 126h1v1h-1zM72 126h1v1h-1zM84 126h1v1h-1zM92 126h1v1h-1zM95 126h2v1h-2zM102 126h1v1h-1zM119 126h1v1h-1zM152 126h1v1h-1zM176 126h2v1h-2zM187 126h1v1h-1zM220 126h1v1h-1zM249 126h1v1h-1zM264 126h1v1h-1zM275 126h1v1h-1zM286 126h2v1h-2zM298 126h1v1h-1zM307 126h1v1h-1zM309 126h1v1h-1zM312 126h1v1h-1zM56 127h1v1h-1zM78 127h1v1h-1zM107 127h2v1h-2zM194 127h1v1h-1zM214 127h2v1h-2zM236 127h2v1h-2zM261 127h1v1h-1zM271 127h2v1h-2zM316 127h2v1h-2zM7 128h2v1h-2zM17 128h2v1h-2zM41 128h2v1h-2zM96 128h1v1h-1zM123 128h1v1h-1zM129 128h1v1h-1zM159 128h2v1h-2zM201 128h1v1h-1zM206 128h1v1h-1zM216 128h3v1h-3zM236 128h2v1h-2zM239 128h1v1h-1zM263 128h2v1h-2zM281 128h1v1h-1zM297 128h2v1h-2zM5 129h3v1h-3zM17 129h1v1h-1zM22 129h1v1h-1zM34 129h2v1h-2zM52 129h2v1h-2zM141 129h2v1h-2zM160 129h2v1h-2zM170 129h2v1h-2zM174 129h2v1h-2zM177 129h1v1h-1zM194 129h1v1h-1zM221 129h2v1h-2zM249 129h2v1h-2zM268 129h1v1h-1zM298 129h1v1h-1zM5 130h1v1h-1zM14 130h1v1h-1zM18 130h2v1h-2zM52 130h2v1h-2zM78 130h2v1h-2zM110 130h1v1h-1zM159 130h2v1h-2zM174 130h1v1h-1zM218 130h1v1h-1zM225 130h1v1h-1zM235 130h2v1h-2zM263 130h1v1h-1zM277 130h1v1h-1zM296 130h1v1h-1zM311 130h2v1h-2zM5 131h2v1h-2zM34 131h1v1h-1zM38 131h1v1h-1zM74 131h1v1h-1zM121 131h2v1h-2zM129 131h2v1h-2zM141 131h1v1h-1zM147 131h1v1h-1zM187 131h1v1h-1zM190 131h1v1h-1zM210 131h2v1h-2zM232 131h1v1h-1zM249 131h1v1h-1zM251 131h1v1h-1zM264 131h1v1h-1zM316 131h2v1h-2zM323 131h1v1h-1zM43 132h2v1h-2zM54 132h1v1h-1zM96 132h1v1h-1zM130 132h2v1h-2zM136 132h1v1h-1zM177 132h1v1h-1zM182 132h1v1h-1zM199 132h2v1h-2zM202 132h1v1h-1zM230 132h1v1h-1zM235 132h2v1h-2zM243 132h1v1h-1zM259 132h1v1h-1zM3 133h2v1h-2zM12 133h1v1h-1zM24 133h1v1h-1zM65 133h1v1h-1zM71 133h1v1h-1zM109 133h1v1h-1zM125 133h2v1h-2zM148 133h1v1h-1zM151 133h1v1h-1zM164 133h1v1h-1zM196 133h1v1h-1zM206 133h2v1h-2zM225 133h2v1h-2zM280 133h1v1h-1zM286 133h2v1h-2zM294 133h1v1h-1zM317 133h2v1h-2zM48 134h2v1h-2zM92 134h1v1h-1zM124 134h1v1h-1zM127 134h1v1h-1zM147 134h1v1h-1zM168 134h1v1h-1zM171 134h1v1h-1zM173 134h1v1h-1zM202 134h2v1h-2zM205 134h1v1h-1zM209 134h2v1h-2zM223 134h1v1h-1zM278 134h1v1h-1zM309 134h2v1h-2zM9 135h2v1h-2zM23 135h1v1h-1zM50 135h2v1h-2zM60 135h1v1h-1zM94 135h1v1h-1zM138 135h1v1h-1zM206 135h1v1h-1zM228 135h2v1h-2zM262 135h1v1h-1zM279 135h1v1h-1zM317 135h1v1h-1zM330 135h1v1h-1zM8 136h2v1h-2zM11 136h1v1h-1zM27 136h1v1h-1zM77 136h2v1h-2zM85 136h2v1h-2zM107 136h2v1h-2zM127 136h2v1h-2zM163 136h2v1h-2zM171 136h1v1h-1zM207 136h2v1h-2zM219 136h1v1h-1zM261 136h1v1h-1zM289 136h2v1h-2zM321 136h2v1h-2zM328 136h2v1h-2zM3 137h3v1h-3zM28 137h1v1h-1zM46 137h2v1h-2zM49 137h1v1h-1zM57 137h1v1h-1zM85 137h1v1h-1zM115 137h2v1h-2zM126 137h1v1h-1zM131 137h2v1h-2zM158 137h1v1h-1zM211 137h2v1h-2zM259 137h1v1h-1zM276 137h1v1h-1zM278 137h2v1h-2zM25 138h1v1h-1zM75 138h2v1h-2zM83 138h1v1h-1zM112 138h1v1h-1zM170 138h1v1h-1zM184 138h1v1h-1zM190 138h2v1h-2zM197 138h2v1h-2zM205 138h2v1h-2zM251 138h1v1h-1zM261 138h1v1h-1zM269 138h1v1h-1zM273 138h2v1h-2zM285 138h1v1h-1zM306 138h2v1h-2zM11 139h1v1h-1zM17 139h1v1h-1zM48 139h1v1h-1zM53 139h1v1h-1zM61 139h1v1h-1zM66 139h1v1h-1zM135 139h2v1h-2zM224 139h1v1h-1zM232 139h1v1h-1zM248 139h1v1h-1zM260 139h1v1h-1zM268 139h1v1h-1zM307 139h1v1h-1zM29 140h1v1h-1zM33 140h1v1h-1zM54 140h2v1h-2zM127 140h1v1h-1zM176 140h1v1h-1zM183 140h2v1h-2zM193 140h1v1h-1zM235 140h2v1h-2zM255 140h2v1h-2zM265 140h1v1h-1zM294 140h1v1h-1zM307 140h1v1h-1zM24 141h1v1h-1zM41 141h1v1h-1zM75 141h2v1h-2zM87 141h1v1h-1zM98 141h1v1h-1zM102 141h2v1h-2zM116 141h1v1h-1zM120 141h1v1h-1zM125 141h2v1h-2zM156 141h3v1h-3zM249 141h1v1h-1zM258 141h1v1h-1zM317 141h1v1h-1zM327 141h2v1h-2zM40 142h4v1h-4zM83 142h1v1h-1zM103 142h2v1h-2zM142 142h1v1h-1zM193 142h2v1h-2zM201 142h1v1h-1zM210 142h3v1h-3zM246 142h1v1h-1zM248 142h1v1h-1zM258 142h2v1h-2zM261 142h1v1h-1zM269 142h1v1h-1zM305 142h2v1h-2zM310 142h2v1h-2zM317 142h1v1h-1zM326 142h1v1h-1zM329 142h1v1h-1zM3 143h1v1h-1zM22 143h1v1h-1zM48 143h2v1h-2zM56 143h2v1h-2zM78 143h1v1h-1zM133 143h2v1h-2zM200 143h1v1h-1zM230 143h1v1h-1zM249 143h1v1h-1zM259 143h3v1h-3zM267 143h1v1h-1zM286 143h1v1h-1zM327 143h1v1h-1zM5 144h1v1h-1zM32 144h2v1h-2zM47 144h1v1h-1zM117 144h1v1h-1zM145 144h1v1h-1zM163 144h1v1h-1zM174 144h2v1h-2zM249 144h1v1h-1zM256 144h2v1h-2zM259 144h2v1h-2zM298 144h1v1h-1zM308 144h1v1h-1zM317 144h1v1h-1zM325 144h1v1h-1zM29 145h2v1h-2zM33 145h1v1h-1zM80 145h2v1h-2zM102 145h1v1h-1zM149 145h1v1h-1zM154 145h1v1h-1zM184 145h2v1h-2zM193 145h1v1h-1zM196 145h1v1h-1zM209 145h1v1h-1zM224 145h1v1h-1zM246 145h2v1h-2zM250 145h1v1h-1zM253 145h1v1h-1zM258 145h3v1h-3zM280 145h1v1h-1zM294 145h1v1h-1zM297 145h1v1h-1zM301 145h1v1h-1zM25 146h2v1h-2zM38 146h1v1h-1zM74 146h3v1h-3zM93 146h1v1h-1zM102 146h1v1h-1zM132 146h1v1h-1zM148 146h1v1h-1zM165 146h1v1h-1zM197 146h1v1h-1zM223 146h4v1h-4zM233 146h1v1h-1zM248 146h3v1h-3zM258 146h1v1h-1zM263 146h2v1h-2zM276 146h1v1h-1zM322 146h1v1h-1zM32 147h2v1h-2zM90 147h1v1h-1zM97 147h2v1h-2zM109 147h2v1h-2zM134 147h1v1h-1zM144 147h1v1h-1zM151 147h1v1h-1zM170 147h2v1h-2zM175 147h1v1h-1zM182 147h2v1h-2zM217 147h1v1h-1zM232 147h2v1h-2zM248 147h1v1h-1zM253 147h1v1h-1zM258 147h2v1h-2zM261 147h1v1h-1zM272 147h1v1h-1zM297 147h2v1h-2zM331 147h1v1h-1zM2 148h1v1h-1zM40 148h1v1h-1zM75 148h1v1h-1zM135 148h1v1h-1zM140 148h1v1h-1zM228 148h1v1h-1zM255 148h1v1h-1zM259 148h2v1h-2zM262 148h1v1h-1zM307 148h1v1h-1zM312 148h2v1h-2zM324 148h1v1h-1zM7 149h2v1h-2zM39 149h1v1h-1zM46 149h1v1h-1zM84 149h1v1h-1zM97 149h1v1h-1zM133 149h1v1h-1zM158 149h2v1h-2zM164 149h1v1h-1zM177 149h1v1h-1zM246 149h1v1h-1zM250 149h1v1h-1zM254 149h2v1h-2zM259 149h1v1h-1zM265 149h1v1h-1zM294 149h1v1h-1zM313 149h3v1h-3zM15 150h1v1h-1zM28 150h2v1h-2zM68 150h1v1h-1zM113 150h1v1h-1zM120 150h1v1h-1zM182 150h1v1h-1zM193 150h1v1h-1zM206 150h1v1h-1zM246 150h1v1h-1zM249 150h1v1h-1zM253 150h1v1h-1zM259 150h1v1h-1zM319 150h1v1h-1zM2 151h1v1h-1zM59 151h1v1h-1zM71 151h2v1h-2zM78 151h1v1h-1zM87 151h1v1h-1zM134 151h2v1h-2zM185 151h1v1h-1zM206 151h2v1h-2zM249 151h2v1h-2zM255 151h2v1h-2zM260 151h1v1h-1zM284 151h1v1h-1zM300 151h1v1h-1zM312 151h2v1h-2zM317 151h2v1h-2zM320 151h1v1h-1zM21 152h3v1h-3zM45 152h2v1h-2zM74 152h1v1h-1zM81 152h1v1h-1zM95 152h1v1h-1zM123 152h2v1h-2zM128 152h1v1h-1zM174 152h2v1h-2zM190 152h2v1h-2zM209 152h1v1h-1zM248 152h3v1h-3zM256 152h1v1h-1zM258 152h1v1h-1zM260 152h1v1h-1zM282 152h1v1h-1zM312 152h1v1h-1zM324 152h2v1h-2zM4 153h2v1h-2zM11 153h2v1h-2zM18 153h2v1h-2zM31 153h1v1h-1zM44 153h1v1h-1zM57 153h2v1h-2zM85 153h1v1h-1zM186 153h2v1h-2zM211 153h1v1h-1zM231 153h2v1h-2zM252 153h1v1h-1zM258 153h1v1h-1zM260 153h1v1h-1zM263 153h3v1h-3zM275 153h1v1h-1zM282 153h2v1h-2zM292 153h1v1h-1zM5 154h1v1h-1zM28 154h1v1h-1zM82 154h1v1h-1zM106 154h1v1h-1zM109 154h1v1h-1zM145 154h1v1h-1zM150 154h1v1h-1zM178 154h2v1h-2zM302 154h2v1h-2zM326 154h1v1h-1zM2 155h2v1h-2zM18 155h1v1h-1zM38 155h1v1h-1zM73 155h1v1h-1zM81 155h1v1h-1zM87 155h1v1h-1zM91 155h2v1h-2zM125 155h2v1h-2zM156 155h2v1h-2zM173 155h1v1h-1zM187 155h3v1h-3zM202 155h1v1h-1zM226 155h1v1h-1zM248 155h1v1h-1zM250 155h1v1h-1zM252 155h1v1h-1zM260 155h2v1h-2zM319 155h2v1h-2zM324 155h1v1h-1zM326 155h1v1h-1zM14 156h1v1h-1zM36 156h1v1h-1zM68 156h1v1h-1zM81 156h2v1h-2zM102 156h1v1h-1zM107 156h2v1h-2zM141 156h1v1h-1zM145 156h1v1h-1zM180 156h2v1h-2zM252 156h2v1h-2zM257 156h1v1h-1zM259 156h1v1h-1zM265 156h2v1h-2zM277 156h1v1h-1zM287 156h1v1h-1zM311 156h1v1h-1zM55 157h2v1h-2zM117 157h1v1h-1zM165 157h2v1h-2zM184 157h1v1h-1zM196 157h1v1h-1zM218 157h1v1h-1zM241 157h2v1h-2zM258 157h1v1h-1zM260 157h1v1h-1zM281 157h1v1h-1zM290 157h2v1h-2zM294 157h1v1h-1zM300 157h2v1h-2zM57 158h1v1h-1zM74 158h1v1h-1zM209 158h1v1h-1zM259 158h1v1h-1zM261 158h1v1h-1zM267 158h1v1h-1zM284 158h1v1h-1zM303 158h1v1h-1zM66 159h1v1h-1zM68 159h1v1h-1zM114 159h2v1h-2zM117 159h2v1h-2zM164 159h2v1h-2zM170 159h1v1h-1zM184 159h1v1h-1zM208 159h1v1h-1zM214 159h1v1h-1zM231 159h1v1h-1zM246 159h1v1h-1zM249 159h1v1h-1zM251 159h1v1h-1zM257 159h1v1h-1zM275 159h1v1h-1zM313 159h2v1h-2zM3 160h2v1h-2zM8 160h1v1h-1zM11 160h2v1h-2zM23 160h1v1h-1zM30 160h2v1h-2zM38 160h2v1h-2zM69 160h2v1h-2zM72 160h1v1h-1zM78 160h1v1h-1zM92 160h2v1h-2zM130 160h1v1h-1zM140 160h3v1h-3zM157 160h1v1h-1zM181 160h1v1h-1zM187 160h1v1h-1zM206 160h1v1h-1zM230 160h1v1h-1zM249 160h1v1h-1zM251 160h2v1h-2zM255 160h1v1h-1zM258 160h1v1h-1zM285 160h1v1h-1zM289 160h1v1h-1zM292 160h1v1h-1zM299 160h1v1h-1zM50 161h2v1h-2zM57 161h2v1h-2zM60 161h1v1h-1zM72 161h2v1h-2zM81 161h1v1h-1zM92 161h2v1h-2zM114 161h1v1h-1zM153 161h1v1h-1zM158 161h1v1h-1zM163 161h1v1h-1zM174 161h2v1h-2zM189 161h1v1h-1zM198 161h1v1h-1zM243 161h2v1h-2zM250 161h1v1h-1zM296 161h2v1h-2zM327 161h1v1h-1zM1 162h1v1h-1zM8 162h1v1h-1zM15 162h1v1h-1zM44 162h1v1h-1zM57 162h2v1h-2zM77 162h2v1h-2zM84 162h2v1h-2zM98 162h1v1h-1zM121 162h1v1h-1zM127 162h1v1h-1zM137 162h1v1h-1zM140 162h1v1h-1zM159 162h1v1h-1zM165 162h1v1h-1zM167 162h2v1h-2zM184 162h2v1h-2zM231 162h2v1h-2zM239 162h1v1h-1zM250 162h2v1h-2zM258 162h1v1h-1zM277 162h2v1h-2zM283 162h1v1h-1zM289 162h1v1h-1zM322 162h2v1h-2zM35 163h1v1h-1zM59 163h1v1h-1zM75 163h2v1h-2zM99 163h2v1h-2zM122 163h1v1h-1zM127 163h2v1h-2zM135 163h2v1h-2zM144 163h2v1h-2zM154 163h2v1h-2zM157 163h1v1h-1zM175 163h1v1h-1zM193 163h2v1h-2zM196 163h1v1h-1zM228 163h1v1h-1zM251 163h1v1h-1zM256 163h1v1h-1zM274 163h1v1h-1zM295 163h1v1h-1zM308 163h1v1h-1zM318 163h1v1h-1zM4 164h1v1h-1zM8 164h1v1h-1zM21 164h2v1h-2zM60 164h4v1h-4zM68 164h1v1h-1zM105 164h1v1h-1zM120 164h4v1h-4zM127 164h1v1h-1zM168 164h3v1h-3zM177 164h1v1h-1zM214 164h1v1h-1zM234 164h1v1h-1zM244 164h2v1h-2zM255 164h1v1h-1zM257 164h1v1h-1zM287 164h1v1h-1zM316 164h1v1h-1zM15 165h2v1h-2zM27 165h1v1h-1zM46 165h1v1h-1zM59 165h1v1h-1zM68 165h1v1h-1zM88 165h1v1h-1zM90 165h1v1h-1zM111 165h1v1h-1zM114 165h1v1h-1zM134 165h1v1h-1zM136 165h1v1h-1zM163 165h2v1h-2zM168 165h2v1h-2zM174 165h1v1h-1zM211 165h1v1h-1zM218 165h1v1h-1zM224 165h1v1h-1zM227 165h1v1h-1zM244 165h2v1h-2zM266 165h1v1h-1zM275 165h1v1h-1zM306 165h2v1h-2zM309 165h1v1h-1zM5 166h2v1h-2zM12 166h2v1h-2zM16 166h1v1h-1zM33 166h1v1h-1zM38 166h1v1h-1zM54 166h3v1h-3zM66 166h2v1h-2zM75 166h1v1h-1zM95 166h1v1h-1zM97 166h1v1h-1zM112 166h1v1h-1zM120 166h2v1h-2zM125 166h2v1h-2zM137 166h1v1h-1zM147 166h3v1h-3zM170 166h1v1h-1zM173 166h1v1h-1zM193 166h1v1h-1zM206 166h1v1h-1zM215 166h1v1h-1zM251 166h1v1h-1zM253 166h1v1h-1zM260 166h1v1h-1zM266 166h1v1h-1zM279 166h2v1h-2zM299 166h2v1h-2zM319 166h1v1h-1zM327 166h1v1h-1zM2 167h1v1h-1zM9 167h1v1h-1zM43 167h1v1h-1zM76 167h1v1h-1zM89 167h1v1h-1zM109 167h2v1h-2zM142 167h2v1h-2zM167 167h1v1h-1zM170 167h1v1h-1zM192 167h1v1h-1zM201 167h1v1h-1zM224 167h1v1h-1zM234 167h3v1h-3zM249 167h1v1h-1zM251 167h1v1h-1zM257 167h2v1h-2zM260 167h1v1h-1zM269 167h1v1h-1zM277 167h1v1h-1zM286 167h2v1h-2zM304 167h2v1h-2zM318 167h2v1h-2zM5 168h1v1h-1zM10 168h1v1h-1zM21 168h1v1h-1zM47 168h1v1h-1zM57 168h2v1h-2zM93 168h2v1h-2zM114 168h1v1h-1zM139 168h2v1h-2zM186 168h1v1h-1zM195 168h1v1h-1zM211 168h1v1h-1zM225 168h2v1h-2zM228 168h1v1h-1zM238 168h3v1h-3zM248 168h1v1h-1zM251 168h1v1h-1zM266 168h1v1h-1zM274 168h1v1h-1zM314 168h1v1h-1zM318 168h1v1h-1zM329 168h1v1h-1zM2 169h1v1h-1zM10 169h2v1h-2zM28 169h1v1h-1zM47 169h2v1h-2zM69 169h1v1h-1zM76 169h1v1h-1zM85 169h1v1h-1zM109 169h1v1h-1zM128 169h2v1h-2zM149 169h2v1h-2zM169 169h1v1h-1zM172 169h2v1h-2zM176 169h1v1h-1zM186 169h2v1h-2zM200 169h1v1h-1zM213 169h3v1h-3zM225 169h1v1h-1zM238 169h1v1h-1zM252 169h1v1h-1zM256 169h1v1h-1zM258 169h1v1h-1zM275 169h1v1h-1zM316 169h1v1h-1zM325 169h2v1h-2zM4 170h2v1h-2zM7 170h1v1h-1zM18 170h2v1h-2zM84 170h1v1h-1zM119 170h1v1h-1zM123 170h1v1h-1zM125 170h1v1h-1zM152 170h2v1h-2zM162 170h4v1h-4zM207 170h2v1h-2zM213 170h1v1h-1zM230 170h2v1h-2zM242 170h1v1h-1zM248 170h3v1h-3zM254 170h1v1h-1zM260 170h2v1h-2zM269 170h2v1h-2zM287 170h2v1h-2zM298 170h1v1h-1zM302 170h1v1h-1zM320 170h1v1h-1zM8 171h1v1h-1zM15 171h2v1h-2zM18 171h2v1h-2zM22 171h2v1h-2zM33 171h2v1h-2zM49 171h1v1h-1zM52 171h1v1h-1zM66 171h1v1h-1zM70 171h2v1h-2zM76 171h1v1h-1zM81 171h1v1h-1zM97 171h2v1h-2zM106 171h1v1h-1zM122 171h1v1h-1zM132 171h1v1h-1zM145 171h2v1h-2zM161 171h2v1h-2zM203 171h2v1h-2zM209 171h2v1h-2zM216 171h1v1h-1zM219 171h1v1h-1zM253 171h1v1h-1zM256 171h1v1h-1zM258 171h2v1h-2zM264 171h2v1h-2zM271 171h2v1h-2zM302 171h2v1h-2zM10 172h1v1h-1zM33 172h1v1h-1zM36 172h1v1h-1zM52 172h1v1h-1zM58 172h2v1h-2zM91 172h2v1h-2zM100 172h1v1h-1zM114 172h1v1h-1zM122 172h1v1h-1zM126 172h1v1h-1zM147 172h1v1h-1zM151 172h3v1h-3zM197 172h1v1h-1zM226 172h1v1h-1zM229 172h1v1h-1zM241 172h2v1h-2zM252 172h1v1h-1zM259 172h1v1h-1zM277 172h1v1h-1zM302 172h1v1h-1zM329 172h1v1h-1zM9 173h1v1h-1zM21 173h2v1h-2zM31 173h1v1h-1zM38 173h1v1h-1zM47 173h1v1h-1zM57 173h1v1h-1zM66 173h1v1h-1zM72 173h1v1h-1zM74 173h1v1h-1zM93 173h1v1h-1zM95 173h1v1h-1zM107 173h1v1h-1zM130 173h2v1h-2zM137 173h1v1h-1zM153 173h1v1h-1zM155 173h1v1h-1zM169 173h1v1h-1zM174 173h1v1h-1zM194 173h1v1h-1zM197 173h2v1h-2zM222 173h1v1h-1zM233 173h1v1h-1zM243 173h1v1h-1zM258 173h1v1h-1zM269 173h1v1h-1zM281 173h1v1h-1zM304 173h1v1h-1zM310 173h3v1h-3zM2 174h2v1h-2zM39 174h2v1h-2zM42 174h2v1h-2zM77 174h1v1h-1zM104 174h1v1h-1zM121 174h1v1h-1zM146 174h2v1h-2zM172 174h2v1h-2zM180 174h1v1h-1zM187 174h1v1h-1zM232 174h1v1h-1zM235 174h1v1h-1zM251 174h1v1h-1zM261 174h2v1h-2zM268 174h2v1h-2zM289 174h2v1h-2zM304 174h2v1h-2zM325 174h1v1h-1zM8 175h1v1h-1zM20 175h2v1h-2zM30 175h2v1h-2zM57 175h1v1h-1zM59 175h3v1h-3zM86 175h1v1h-1zM92 175h1v1h-1zM108 175h1v1h-1zM111 175h3v1h-3zM118 175h1v1h-1zM123 175h1v1h-1zM125 175h1v1h-1zM128 175h1v1h-1zM157 175h2v1h-2zM163 175h1v1h-1zM187 175h1v1h-1zM211 175h2v1h-2zM229 175h1v1h-1zM234 175h1v1h-1zM248 175h1v1h-1zM250 175h1v1h-1zM253 175h1v1h-1zM259 175h2v1h-2zM262 175h1v1h-1zM284 175h2v1h-2zM288 175h1v1h-1zM301 175h1v1h-1zM315 175h1v1h-1zM318 175h2v1h-2zM0 176h1v1h-1zM10 176h1v1h-1zM43 176h1v1h-1zM45 176h1v1h-1zM59 176h1v1h-1zM62 176h3v1h-3zM68 176h2v1h-2zM101 176h2v1h-2zM109 176h2v1h-2zM114 176h2v1h-2zM117 176h1v1h-1zM130 176h1v1h-1zM134 176h1v1h-1zM168 176h2v1h-2zM186 176h2v1h-2zM198 176h1v1h-1zM208 176h1v1h-1zM210 176h2v1h-2zM226 176h1v1h-1zM228 176h2v1h-2zM237 176h2v1h-2zM243 176h1v1h-1zM247 176h2v1h-2zM254 176h1v1h-1zM260 176h2v1h-2zM273 176h2v1h-2zM299 176h2v1h-2zM3 177h2v1h-2zM10 177h1v1h-1zM18 177h1v1h-1zM23 177h2v1h-2zM38 177h1v1h-1zM49 177h1v1h-1zM55 177h2v1h-2zM69 177h1v1h-1zM104 177h1v1h-1zM111 177h1v1h-1zM162 177h1v1h-1zM169 177h1v1h-1zM183 177h1v1h-1zM194 177h1v1h-1zM210 177h2v1h-2zM213 177h2v1h-2zM219 177h2v1h-2zM224 177h2v1h-2zM256 177h1v1h-1zM258 177h1v1h-1zM260 177h1v1h-1zM293 177h1v1h-1zM297 177h1v1h-1zM301 177h1v1h-1zM26 178h1v1h-1zM35 178h2v1h-2zM56 178h1v1h-1zM61 178h1v1h-1zM70 178h1v1h-1zM81 178h2v1h-2zM104 178h2v1h-2zM118 178h2v1h-2zM137 178h4v1h-4zM149 178h1v1h-1zM156 178h1v1h-1zM167 178h1v1h-1zM193 178h1v1h-1zM196 178h2v1h-2zM208 178h1v1h-1zM228 178h1v1h-1zM237 178h1v1h-1zM255 178h1v1h-1zM259 178h2v1h-2zM272 178h1v1h-1zM278 178h1v1h-1zM283 178h1v1h-1zM301 178h1v1h-1zM304 178h1v1h-1zM317 178h2v1h-2zM330 178h1v1h-1zM5 179h1v1h-1zM20 179h2v1h-2zM31 179h1v1h-1zM40 179h1v1h-1zM42 179h1v1h-1zM56 179h2v1h-2zM79 179h2v1h-2zM121 179h1v1h-1zM126 179h1v1h-1zM130 179h1v1h-1zM160 179h2v1h-2zM177 179h1v1h-1zM192 179h1v1h-1zM203 179h1v1h-1zM210 179h1v1h-1zM227 179h2v1h-2zM233 179h1v1h-1zM247 179h1v1h-1zM249 179h1v1h-1zM256 179h1v1h-1zM260 179h1v1h-1zM268 179h1v1h-1zM271 179h1v1h-1zM284 179h2v1h-2zM303 179h1v1h-1zM330 179h1v1h-1zM0 180h1v1h-1zM8 180h2v1h-2zM13 180h1v1h-1zM20 180h2v1h-2zM35 180h1v1h-1zM37 180h2v1h-2zM69 180h2v1h-2zM76 180h1v1h-1zM105 180h1v1h-1zM113 180h1v1h-1zM125 180h1v1h-1zM143 180h1v1h-1zM153 180h1v1h-1zM155 180h2v1h-2zM165 180h1v1h-1zM177 180h1v1h-1zM206 180h1v1h-1zM220 180h1v1h-1zM231 180h1v1h-1zM235 180h1v1h-1zM241 180h1v1h-1zM263 180h3v1h-3zM269 180h2v1h-2zM272 180h2v1h-2zM279 180h3v1h-3zM289 180h2v1h-2zM293 180h1v1h-1zM300 180h1v1h-1zM325 180h1v1h-1zM10 181h1v1h-1zM29 181h2v1h-2zM35 181h1v1h-1zM58 181h1v1h-1zM84 181h1v1h-1zM88 181h1v1h-1zM90 181h1v1h-1zM93 181h1v1h-1zM96 181h1v1h-1zM124 181h1v1h-1zM130 181h1v1h-1zM132 181h2v1h-2zM136 181h2v1h-2zM144 181h2v1h-2zM149 181h2v1h-2zM162 181h1v1h-1zM172 181h2v1h-2zM176 181h2v1h-2zM188 181h1v1h-1zM222 181h1v1h-1zM226 181h2v1h-2zM232 181h3v1h-3zM243 181h1v1h-1zM250 181h2v1h-2zM258 181h1v1h-1zM264 181h1v1h-1zM271 181h2v1h-2zM274 181h1v1h-1zM291 181h2v1h-2zM323 181h2v1h-2zM0 182h3v1h-3zM7 182h3v1h-3zM21 182h1v1h-1zM27 182h1v1h-1zM32 182h1v1h-1zM38 182h1v1h-1zM58 182h2v1h-2zM65 182h1v1h-1zM70 182h1v1h-1zM72 182h2v1h-2zM78 182h2v1h-2zM99 182h2v1h-2zM112 182h2v1h-2zM123 182h1v1h-1zM129 182h3v1h-3zM134 182h1v1h-1zM143 182h1v1h-1zM149 182h1v1h-1zM178 182h1v1h-1zM184 182h1v1h-1zM191 182h2v1h-2zM198 182h1v1h-1zM200 182h1v1h-1zM203 182h2v1h-2zM208 182h1v1h-1zM214 182h1v1h-1zM220 182h1v1h-1zM228 182h2v1h-2zM233 182h2v1h-2zM239 182h3v1h-3zM248 182h1v1h-1zM259 182h1v1h-1zM274 182h1v1h-1zM284 182h2v1h-2zM319 182h1v1h-1zM330 182h2v1h-2zM5 183h2v1h-2zM15 183h1v1h-1zM18 183h1v1h-1zM29 183h1v1h-1zM39 183h1v1h-1zM54 183h1v1h-1zM70 183h1v1h-1zM75 183h2v1h-2zM79 183h2v1h-2zM86 183h1v1h-1zM91 183h1v1h-1zM96 183h1v1h-1zM119 183h2v1h-2zM122 183h1v1h-1zM138 183h1v1h-1zM145 183h1v1h-1zM172 183h2v1h-2zM182 183h2v1h-2zM188 183h1v1h-1zM195 183h1v1h-1zM216 183h1v1h-1zM218 183h2v1h-2zM234 183h2v1h-2zM257 183h1v1h-1zM287 183h1v1h-1zM296 183h1v1h-1zM307 183h1v1h-1zM321 183h1v1h-1zM330 183h1v1h-1zM14 184h1v1h-1zM24 184h1v1h-1zM40 184h1v1h-1zM61 184h1v1h-1zM65 184h3v1h-3zM70 184h2v1h-2zM81 184h1v1h-1zM96 184h2v1h-2zM123 184h2v1h-2zM141 184h1v1h-1zM153 184h1v1h-1zM157 184h1v1h-1zM176 184h2v1h-2zM185 184h1v1h-1zM191 184h3v1h-3zM196 184h1v1h-1zM221 184h1v1h-1zM246 184h2v1h-2zM249 184h3v1h-3zM275 184h2v1h-2zM296 184h1v1h-1zM322 184h1v1h-1zM25 185h1v1h-1zM38 185h2v1h-2zM55 185h1v1h-1zM70 185h1v1h-1zM74 185h3v1h-3zM89 185h2v1h-2zM93 185h2v1h-2zM113 185h2v1h-2zM133 185h1v1h-1zM136 185h2v1h-2zM148 185h2v1h-2zM157 185h2v1h-2zM166 185h1v1h-1zM194 185h2v1h-2zM209 185h2v1h-2zM239 185h1v1h-1zM252 185h1v1h-1zM255 185h1v1h-1zM258 185h1v1h-1zM261 185h1v1h-1zM275 185h2v1h-2zM290 185h1v1h-1zM295 185h1v1h-1zM305 185h1v1h-1zM319 185h1v1h-1zM13 186h1v1h-1zM20 186h2v1h-2zM39 186h1v1h-1zM42 186h2v1h-2zM49 186h1v1h-1zM60 186h2v1h-2zM74 186h3v1h-3zM80 186h1v1h-1zM101 186h1v1h-1zM106 186h2v1h-2zM116 186h1v1h-1zM118 186h1v1h-1zM120 186h2v1h-2zM139 186h1v1h-1zM157 186h4v1h-4zM168 186h2v1h-2zM172 186h2v1h-2zM191 186h2v1h-2zM206 186h2v1h-2zM211 186h1v1h-1zM216 186h1v1h-1zM232 186h1v1h-1zM235 186h1v1h-1zM281 186h1v1h-1zM288 186h1v1h-1zM302 186h2v1h-2zM308 186h2v1h-2zM316 186h2v1h-2zM320 186h3v1h-3zM324 186h1v1h-1zM31 187h3v1h-3zM47 187h1v1h-1zM51 187h2v1h-2zM73 187h1v1h-1zM79 187h2v1h-2zM84 187h1v1h-1zM89 187h2v1h-2zM103 187h1v1h-1zM111 187h1v1h-1zM116 187h1v1h-1zM120 187h1v1h-1zM131 187h1v1h-1zM148 187h2v1h-2zM178 187h1v1h-1zM192 187h1v1h-1zM196 187h1v1h-1zM200 187h2v1h-2zM224 187h1v1h-1zM232 187h2v1h-2zM248 187h2v1h-2zM263 187h3v1h-3zM269 187h1v1h-1zM291 187h2v1h-2zM297 187h1v1h-1zM302 187h2v1h-2zM9 188h1v1h-1zM20 188h1v1h-1zM23 188h1v1h-1zM32 188h4v1h-4zM45 188h4v1h-4zM50 188h1v1h-1zM57 188h1v1h-1zM61 188h1v1h-1zM75 188h1v1h-1zM92 188h1v1h-1zM111 188h2v1h-2zM116 188h2v1h-2zM124 188h1v1h-1zM126 188h1v1h-1zM136 188h1v1h-1zM156 188h2v1h-2zM161 188h1v1h-1zM174 188h1v1h-1zM200 188h2v1h-2zM206 188h2v1h-2zM214 188h2v1h-2zM222 188h1v1h-1zM225 188h2v1h-2zM232 188h1v1h-1zM241 188h1v1h-1zM247 188h1v1h-1zM255 188h1v1h-1zM259 188h2v1h-2zM262 188h1v1h-1zM287 188h2v1h-2zM301 188h2v1h-2zM308 188h1v1h-1zM331 188h1v1h-1zM35 189h1v1h-1zM37 189h1v1h-1zM57 189h1v1h-1zM62 189h1v1h-1zM75 189h1v1h-1zM86 189h2v1h-2zM94 189h3v1h-3zM98 189h1v1h-1zM100 189h1v1h-1zM106 189h1v1h-1zM108 189h1v1h-1zM116 189h2v1h-2zM153 189h3v1h-3zM171 189h1v1h-1zM174 189h1v1h-1zM187 189h1v1h-1zM201 189h1v1h-1zM209 189h2v1h-2zM218 189h1v1h-1zM221 189h3v1h-3zM225 189h2v1h-2zM240 189h2v1h-2zM243 189h1v1h-1zM249 189h1v1h-1zM252 189h2v1h-2zM262 189h3v1h-3zM280 189h1v1h-1zM290 189h2v1h-2zM293 189h1v1h-1zM304 189h1v1h-1zM327 189h1v1h-1zM5 190h1v1h-1zM10 190h2v1h-2zM15 190h1v1h-1zM22 190h2v1h-2zM27 190h1v1h-1zM31 190h2v1h-2zM35 190h1v1h-1zM48 190h1v1h-1zM50 190h1v1h-1zM55 190h1v1h-1zM64 190h2v1h-2zM127 190h1v1h-1zM146 190h1v1h-1zM175 190h1v1h-1zM191 190h1v1h-1zM199 190h1v1h-1zM221 190h2v1h-2zM229 190h1v1h-1zM263 190h1v1h-1zM269 190h1v1h-1zM288 190h1v1h-1zM290 190h1v1h-1zM298 190h1v1h-1zM300 190h1v1h-1zM317 190h3v1h-3zM328 190h1v1h-1zM8 191h1v1h-1zM15 191h2v1h-2zM18 191h1v1h-1zM41 191h2v1h-2zM46 191h1v1h-1zM57 191h2v1h-2zM66 191h1v1h-1zM87 191h1v1h-1zM100 191h2v1h-2zM129 191h1v1h-1zM145 191h2v1h-2zM188 191h2v1h-2zM201 191h1v1h-1zM204 191h1v1h-1zM229 191h1v1h-1zM248 191h2v1h-2zM251 191h1v1h-1zM253 191h1v1h-1zM257 191h2v1h-2zM261 191h3v1h-3zM272 191h1v1h-1zM305 191h2v1h-2zM308 191h1v1h-1zM312 191h1v1h-1zM330 191h1v1h-1zM4 192h2v1h-2zM34 192h3v1h-3zM65 192h2v1h-2zM95 192h5v1h-5zM127 192h2v1h-2zM136 192h2v1h-2zM154 192h1v1h-1zM166 192h2v1h-2zM178 192h1v1h-1zM205 192h3v1h-3zM211 192h1v1h-1zM214 192h3v1h-3zM224 192h1v1h-1zM227 192h1v1h-1zM235 192h2v1h-2zM240 192h1v1h-1zM260 192h1v1h-1zM270 192h2v1h-2zM276 192h1v1h-1zM292 192h3v1h-3zM304 192h2v1h-2zM307 192h1v1h-1zM310 192h1v1h-1zM322 192h1v1h-1zM326 192h1v1h-1zM330 192h2v1h-2zM0 193h1v1h-1zM7 193h2v1h-2zM11 193h2v1h-2zM33 193h1v1h-1zM37 193h1v1h-1zM43 193h1v1h-1zM45 193h1v1h-1zM53 193h1v1h-1zM62 193h2v1h-2zM74 193h1v1h-1zM96 193h2v1h-2zM113 193h1v1h-1zM119 193h1v1h-1zM124 193h1v1h-1zM142 193h2v1h-2zM162 193h1v1h-1zM172 193h2v1h-2zM181 193h1v1h-1zM188 193h1v1h-1zM190 193h1v1h-1zM194 193h2v1h-2zM198 193h1v1h-1zM204 193h3v1h-3zM216 193h2v1h-2zM223 193h1v1h-1zM229 193h2v1h-2zM232 193h4v1h-4zM242 193h3v1h-3zM246 193h2v1h-2zM258 193h1v1h-1zM260 193h1v1h-1zM262 193h1v1h-1zM273 193h1v1h-1zM318 193h2v1h-2zM326 193h1v1h-1zM2 194h1v1h-1zM18 194h1v1h-1zM27 194h1v1h-1zM36 194h1v1h-1zM58 194h1v1h-1zM60 194h2v1h-2zM84 194h1v1h-1zM89 194h1v1h-1zM93 194h1v1h-1zM96 194h2v1h-2zM102 194h1v1h-1zM107 194h2v1h-2zM115 194h2v1h-2zM120 194h1v1h-1zM126 194h1v1h-1zM134 194h1v1h-1zM151 194h1v1h-1zM170 194h3v1h-3zM185 194h2v1h-2zM192 194h1v1h-1zM203 194h2v1h-2zM210 194h1v1h-1zM215 194h1v1h-1zM219 194h2v1h-2zM228 194h1v1h-1zM232 194h2v1h-2zM248 194h2v1h-2zM251 194h1v1h-1zM253 194h1v1h-1zM261 194h1v1h-1zM266 194h2v1h-2zM274 194h1v1h-1zM292 194h1v1h-1zM304 194h3v1h-3zM8 195h1v1h-1zM16 195h1v1h-1zM22 195h1v1h-1zM27 195h1v1h-1zM41 195h1v1h-1zM65 195h2v1h-2zM71 195h1v1h-1zM84 195h2v1h-2zM89 195h1v1h-1zM103 195h2v1h-2zM108 195h2v1h-2zM114 195h1v1h-1zM133 195h1v1h-1zM146 195h4v1h-4zM157 195h1v1h-1zM164 195h1v1h-1zM170 195h1v1h-1zM172 195h2v1h-2zM189 195h1v1h-1zM209 195h1v1h-1zM227 195h2v1h-2zM256 195h1v1h-1zM268 195h1v1h-1zM274 195h1v1h-1zM309 195h1v1h-1zM315 195h1v1h-1zM320 195h1v1h-1zM1 196h1v1h-1zM11 196h1v1h-1zM15 196h1v1h-1zM25 196h1v1h-1zM28 196h1v1h-1zM48 196h1v1h-1zM52 196h1v1h-1zM60 196h1v1h-1zM68 196h1v1h-1zM77 196h1v1h-1zM82 196h1v1h-1zM92 196h2v1h-2zM107 196h3v1h-3zM117 196h2v1h-2zM128 196h2v1h-2zM134 196h1v1h-1zM141 196h1v1h-1zM155 196h2v1h-2zM158 196h2v1h-2zM176 196h1v1h-1zM183 196h1v1h-1zM197 196h2v1h-2zM207 196h2v1h-2zM215 196h2v1h-2zM219 196h1v1h-1zM226 196h1v1h-1zM252 196h1v1h-1zM258 196h1v1h-1zM260 196h3v1h-3zM268 196h1v1h-1zM271 196h2v1h-2zM280 196h1v1h-1zM310 196h1v1h-1zM323 196h2v1h-2zM1 197h1v1h-1zM3 197h2v1h-2zM65 197h1v1h-1zM84 197h1v1h-1zM91 197h1v1h-1zM105 197h1v1h-1zM120 197h1v1h-1zM127 197h1v1h-1zM136 197h1v1h-1zM145 197h1v1h-1zM154 197h2v1h-2zM185 197h1v1h-1zM193 197h2v1h-2zM199 197h2v1h-2zM202 197h1v1h-1zM204 197h1v1h-1zM207 197h2v1h-2zM217 197h1v1h-1zM238 197h1v1h-1zM246 197h2v1h-2zM250 197h1v1h-1zM252 197h1v1h-1zM256 197h1v1h-1zM258 197h1v1h-1zM267 197h1v1h-1zM272 197h1v1h-1zM278 197h2v1h-2zM289 197h1v1h-1zM300 197h2v1h-2zM306 197h1v1h-1zM319 197h1v1h-1zM321 197h2v1h-2zM8 198h1v1h-1zM12 198h1v1h-1zM31 198h1v1h-1zM35 198h1v1h-1zM51 198h1v1h-1zM57 198h1v1h-1zM61 198h1v1h-1zM72 198h1v1h-1zM75 198h1v1h-1zM78 198h2v1h-2zM86 198h2v1h-2zM97 198h1v1h-1zM104 198h3v1h-3zM108 198h1v1h-1zM110 198h1v1h-1zM112 198h2v1h-2zM117 198h1v1h-1zM125 198h1v1h-1zM146 198h2v1h-2zM152 198h2v1h-2zM160 198h1v1h-1zM167 198h2v1h-2zM186 198h1v1h-1zM194 198h1v1h-1zM197 198h2v1h-2zM204 198h2v1h-2zM214 198h2v1h-2zM224 198h2v1h-2zM249 198h1v1h-1zM251 198h1v1h-1zM253 198h1v1h-1zM257 198h1v1h-1zM290 198h3v1h-3zM320 198h1v1h-1zM10 199h2v1h-2zM15 199h1v1h-1zM21 199h2v1h-2zM51 199h1v1h-1zM64 199h1v1h-1zM69 199h2v1h-2zM72 199h1v1h-1zM81 199h1v1h-1zM86 199h4v1h-4zM94 199h1v1h-1zM97 199h3v1h-3zM108 199h1v1h-1zM118 199h2v1h-2zM125 199h1v1h-1zM128 199h1v1h-1zM140 199h1v1h-1zM165 199h1v1h-1zM170 199h2v1h-2zM176 199h1v1h-1zM180 199h1v1h-1zM202 199h2v1h-2zM208 199h1v1h-1zM212 199h1v1h-1zM220 199h1v1h-1zM224 199h2v1h-2zM229 199h2v1h-2zM233 199h1v1h-1zM246 199h2v1h-2zM249 199h1v1h-1zM253 199h1v1h-1zM267 199h1v1h-1zM277 199h1v1h-1zM286 199h1v1h-1zM292 199h1v1h-1zM308 199h1v1h-1zM312 199h1v1h-1zM314 199h2v1h-2zM326 199h2v1h-2zM329 199h1v1h-1z"/><path fill="#000044" d="M63 0h1v1h-1zM127 0h1v1h-1zM276 3h1v1h-1zM192 8h1v1h-1zM270 8h2v1h-2zM285 8h1v1h-1zM242 10h1v1h-1zM152 11h2v1h-2zM301 11h2v1h-2zM131 14h2v1h-2zM161 15h2v1h-2zM209 15h1v1h-1zM249 17h1v1h-1zM294 17h2v1h-2zM236 18h1v1h-1zM284 19h2v1h-2zM184 20h1v1h-1zM201 21h1v1h-1zM283 21h1v1h-1zM289 21h1v1h-1zM289 22h1v1h-1zM293 22h1v1h-1zM292 23h1v1h-1zM220 25h2v1h-2zM291 25h1v1h-1zM296 25h2v1h-2zM299 25h1v1h-1zM301 25h1v1h-1zM295 26h1v1h-1zM288 27h1v1h-1zM293 27h1v1h-1zM187 28h1v1h-1zM190 28h1v1h-1zM294 28h1v1h-1zM297 28h1v1h-1zM296 29h2v1h-2zM295 30h1v1h-1zM300 30h1v1h-1zM287 31h1v1h-1zM290 31h1v1h-1zM41 32h1v1h-1zM201 32h2v1h-2zM238 32h1v1h-1zM200 33h3v1h-3zM205 33h1v1h-1zM207 33h1v1h-1zM293 33h1v1h-1zM79 34h1v1h-1zM214 34h1v1h-1zM289 34h1v1h-1zM294 34h1v1h-1zM289 35h1v1h-1zM293 35h1v1h-1zM293 36h1v1h-1zM295 36h1v1h-1zM297 36h2v1h-2zM307 36h1v1h-1zM56 38h1v1h-1zM287 38h1v1h-1zM289 38h1v1h-1zM292 38h1v1h-1zM284 39h1v1h-1zM288 39h1v1h-1zM291 39h2v1h-2zM295 39h1v1h-1zM54 40h1v1h-1zM283 40h2v1h-2zM291 40h2v1h-2zM282 41h1v1h-1zM286 41h1v1h-1zM289 41h1v1h-1zM293 41h1v1h-1zM290 42h1v1h-1zM293 42h1v1h-1zM27 43h1v1h-1zM282 43h2v1h-2zM287 43h2v1h-2zM290 43h3v1h-3zM279 44h1v1h-1zM287 44h1v1h-1zM289 44h1v1h-1zM193 45h1v1h-1zM280 45h1v1h-1zM60 46h1v1h-1zM283 46h1v1h-1zM290 46h1v1h-1zM276 47h2v1h-2zM281 47h1v1h-1zM289 47h1v1h-1zM280 48h2v1h-2zM286 48h1v1h-1zM184 49h1v1h-1zM279 49h1v1h-1zM287 49h1v1h-1zM284 50h1v1h-1zM104 51h1v1h-1zM276 51h1v1h-1zM278 51h1v1h-1zM183 52h1v1h-1zM275 52h1v1h-1zM277 52h1v1h-1zM282 52h3v1h-3zM130 53h2v1h-2zM234 53h1v1h-1zM269 53h2v1h-2zM275 53h2v1h-2zM281 53h4v1h-4zM25 54h1v1h-1zM280 54h1v1h-1zM282 54h2v1h-2zM271 55h1v1h-1zM281 55h1v1h-1zM182 56h1v1h-1zM277 56h1v1h-1zM269 57h2v1h-2zM272 57h1v1h-1zM274 57h1v1h-1zM279 57h1v1h-1zM269 58h2v1h-2zM276 58h1v1h-1zM279 58h1v1h-1zM282 58h1v1h-1zM270 59h1v1h-1zM182 60h1v1h-1zM270 60h1v1h-1zM275 60h1v1h-1zM277 60h1v1h-1zM279 60h1v1h-1zM274 61h1v1h-1zM83 62h1v1h-1zM263 62h1v1h-1zM272 62h1v1h-1zM274 62h2v1h-2zM277 62h1v1h-1zM272 63h1v1h-1zM274 63h2v1h-2zM277 63h1v1h-1zM31 64h2v1h-2zM137 64h1v1h-1zM269 64h2v1h-2zM276 64h2v1h-2zM266 65h1v1h-1zM265 66h1v1h-1zM274 66h3v1h-3zM271 67h1v1h-1zM262 68h1v1h-1zM269 68h1v1h-1zM271 68h1v1h-1zM273 68h1v1h-1zM275 68h2v1h-2zM265 69h2v1h-2zM270 69h1v1h-1zM274 69h2v1h-2zM260 70h2v1h-2zM273 71h1v1h-1zM51 72h1v1h-1zM264 72h2v1h-2zM275 72h1v1h-1zM260 73h1v1h-1zM265 73h1v1h-1zM267 73h1v1h-1zM262 74h1v1h-1zM265 74h2v1h-2zM269 74h1v1h-1zM184 75h1v1h-1zM261 75h1v1h-1zM263 75h1v1h-1zM268 75h1v1h-1zM272 75h1v1h-1zM286 75h1v1h-1zM260 76h1v1h-1zM263 76h1v1h-1zM270 76h1v1h-1zM181 77h1v1h-1zM266 77h2v1h-2zM275 77h1v1h-1zM262 78h1v1h-1zM272 79h1v1h-1zM263 80h1v1h-1zM269 80h1v1h-1zM179 81h1v1h-1zM264 81h1v1h-1zM269 81h2v1h-2zM272 81h1v1h-1zM180 82h1v1h-1zM221 82h2v1h-2zM271 82h1v1h-1zM33 83h1v1h-1zM263 83h1v1h-1zM265 83h1v1h-1zM269 83h2v1h-2zM265 84h1v1h-1zM271 84h2v1h-2zM261 85h1v1h-1zM263 85h1v1h-1zM261 86h1v1h-1zM265 86h2v1h-2zM268 86h1v1h-1zM270 86h1v1h-1zM80 87h1v1h-1zM264 87h1v1h-1zM266 87h1v1h-1zM261 88h1v1h-1zM265 88h1v1h-1zM268 88h1v1h-1zM271 88h1v1h-1zM53 89h1v1h-1zM266 89h1v1h-1zM268 89h2v1h-2zM261 90h2v1h-2zM264 90h2v1h-2zM267 90h2v1h-2zM259 91h1v1h-1zM263 91h1v1h-1zM265 91h1v1h-1zM257 92h1v1h-1zM259 92h1v1h-1zM263 93h1v1h-1zM266 93h2v1h-2zM269 93h2v1h-2zM265 94h2v1h-2zM270 94h1v1h-1zM261 95h1v1h-1zM262 96h1v1h-1zM267 96h2v1h-2zM259 97h1v1h-1zM266 97h1v1h-1zM259 98h1v1h-1zM268 98h1v1h-1zM256 99h1v1h-1zM261 99h2v1h-2zM264 99h1v1h-1zM266 99h3v1h-3zM264 100h1v1h-1zM267 100h2v1h-2zM264 101h1v1h-1zM182 102h1v1h-1zM263 102h1v1h-1zM268 103h1v1h-1zM260 104h1v1h-1zM264 104h1v1h-1zM259 105h1v1h-1zM266 105h1v1h-1zM260 106h3v1h-3zM267 106h1v1h-1zM48 107h1v1h-1zM182 107h1v1h-1zM258 107h1v1h-1zM267 107h1v1h-1zM261 108h1v1h-1zM316 108h1v1h-1zM178 109h1v1h-1zM176 110h1v1h-1zM182 110h1v1h-1zM260 110h1v1h-1zM265 110h1v1h-1zM257 111h2v1h-2zM262 111h1v1h-1zM265 111h1v1h-1zM259 112h1v1h-1zM262 112h2v1h-2zM301 112h1v1h-1zM106 113h1v1h-1zM259 113h1v1h-1zM262 113h1v1h-1zM264 113h1v1h-1zM180 114h1v1h-1zM259 114h1v1h-1zM264 114h2v1h-2zM154 115h1v1h-1zM257 115h1v1h-1zM261 116h1v1h-1zM263 116h3v1h-3zM180 117h1v1h-1zM256 117h1v1h-1zM178 118h1v1h-1zM180 118h1v1h-1zM263 118h2v1h-2zM9 119h1v1h-1zM105 119h1v1h-1zM179 119h1v1h-1zM176 120h1v1h-1zM256 120h2v1h-2zM262 121h1v1h-1zM257 122h1v1h-1zM257 123h1v1h-1zM259 123h1v1h-1zM261 124h1v1h-1zM264 124h1v1h-1zM237 125h1v1h-1zM260 125h2v1h-2zM264 125h1v1h-1zM260 126h1v1h-1zM257 127h1v1h-1zM260 127h1v1h-1zM82 128h2v1h-2zM245 128h1v1h-1zM260 128h1v1h-1zM263 129h3v1h-3zM258 130h1v1h-1zM265 131h1v1h-1zM294 131h1v1h-1zM256 132h1v1h-1zM258 132h1v1h-1zM260 132h1v1h-1zM260 133h1v1h-1zM126 134h1v1h-1zM256 134h1v1h-1zM261 134h1v1h-1zM263 134h1v1h-1zM260 135h1v1h-1zM263 135h1v1h-1zM251 136h1v1h-1zM246 137h1v1h-1zM249 137h1v1h-1zM256 137h2v1h-2zM260 137h2v1h-2zM185 138h1v1h-1zM187 138h2v1h-2zM253 138h1v1h-1zM260 138h1v1h-1zM247 139h1v1h-1zM255 139h1v1h-1zM94 140h1v1h-1zM249 140h1v1h-1zM253 140h1v1h-1zM257 140h1v1h-1zM261 140h1v1h-1zM245 141h1v1h-1zM248 141h1v1h-1zM249 142h1v1h-1zM251 142h3v1h-3zM10 143h1v1h-1zM250 143h1v1h-1zM252 143h1v1h-1zM254 143h3v1h-3zM252 144h2v1h-2zM252 145h1v1h-1zM262 145h1v1h-1zM305 145h1v1h-1zM251 146h1v1h-1zM253 146h2v1h-2zM257 146h1v1h-1zM259 146h1v1h-1zM251 147h2v1h-2zM251 148h1v1h-1zM254 148h1v1h-1zM258 149h1v1h-1zM287 149h1v1h-1zM16 150h1v1h-1zM257 150h2v1h-2zM259 151h1v1h-1zM255 152h1v1h-1zM259 152h1v1h-1zM253 153h1v1h-1zM146 154h1v1h-1zM205 154h2v1h-2zM253 154h1v1h-1zM256 154h2v1h-2zM251 155h1v1h-1zM253 155h1v1h-1zM258 155h2v1h-2zM262 155h1v1h-1zM247 156h2v1h-2zM250 156h2v1h-2zM256 156h1v1h-1zM312 156h1v1h-1zM247 157h2v1h-2zM251 157h1v1h-1zM253 157h1v1h-1zM255 157h2v1h-2zM248 158h1v1h-1zM250 158h1v1h-1zM252 158h1v1h-1zM257 158h1v1h-1zM262 158h1v1h-1zM297 158h2v1h-2zM310 158h2v1h-2zM252 159h1v1h-1zM254 159h1v1h-1zM261 159h1v1h-1zM253 160h1v1h-1zM257 160h1v1h-1zM259 160h1v1h-1zM256 161h1v1h-1zM261 161h1v1h-1zM248 162h1v1h-1zM255 162h1v1h-1zM260 162h1v1h-1zM254 163h1v1h-1zM258 163h1v1h-1zM217 164h1v1h-1zM235 164h2v1h-2zM253 164h1v1h-1zM28 165h1v1h-1zM251 165h1v1h-1zM291 165h2v1h-2zM250 166h1v1h-1zM252 166h1v1h-1zM254 166h1v1h-1zM252 167h1v1h-1zM261 167h1v1h-1zM253 168h1v1h-1zM261 168h1v1h-1zM248 169h1v1h-1zM259 169h1v1h-1zM255 170h1v1h-1zM259 170h1v1h-1zM107 171h1v1h-1zM255 171h1v1h-1zM260 171h1v1h-1zM198 172h1v1h-1zM227 172h1v1h-1zM253 172h1v1h-1zM257 172h2v1h-2zM260 172h1v1h-1zM235 173h2v1h-2zM254 173h2v1h-2zM257 173h1v1h-1zM249 174h2v1h-2zM252 174h1v1h-1zM260 174h1v1h-1zM50 176h1v1h-1zM250 176h1v1h-1zM252 176h1v1h-1zM257 176h1v1h-1zM302 176h1v1h-1zM188 177h1v1h-1zM254 177h1v1h-1zM261 177h1v1h-1zM253 178h1v1h-1zM257 178h1v1h-1zM261 178h1v1h-1zM73 179h1v1h-1zM252 179h3v1h-3zM257 179h1v1h-1zM261 179h1v1h-1zM168 181h1v1h-1zM223 181h1v1h-1zM249 181h1v1h-1zM253 181h1v1h-1zM255 181h1v1h-1zM13 182h2v1h-2zM28 182h1v1h-1zM254 182h1v1h-1zM257 182h1v1h-1zM121 183h1v1h-1zM253 183h2v1h-2zM258 184h2v1h-2zM71 185h1v1h-1zM250 185h1v1h-1zM256 185h1v1h-1zM259 185h1v1h-1zM321 185h1v1h-1zM255 186h1v1h-1zM257 186h3v1h-3zM327 186h1v1h-1zM85 187h1v1h-1zM87 188h1v1h-1zM250 188h2v1h-2zM257 188h1v1h-1zM179 189h2v1h-2zM251 189h1v1h-1zM254 189h1v1h-1zM257 189h2v1h-2zM260 189h1v1h-1zM251 190h1v1h-1zM272 190h2v1h-2zM179 191h1v1h-1zM250 191h1v1h-1zM252 191h1v1h-1zM260 191h1v1h-1zM255 192h2v1h-2zM255 193h1v1h-1zM259 193h1v1h-1zM250 194h1v1h-1zM255 195h1v1h-1zM257 195h1v1h-1zM319 195h1v1h-1zM256 196h1v1h-1zM219 197h1v1h-1zM253 197h1v1h-1zM259 197h1v1h-1zM252 198h1v1h-1zM254 198h1v1h-1zM251 199h1v1h-1zM260 199h1v1h-1z"/><path fill="#00005e" d="M126 0h1v1h-1zM226 0h2v1h-2zM282 7h1v1h-1zM23 8h2v1h-2zM64 8h1v1h-1zM211 9h2v1h-2zM283 9h1v1h-1zM236 10h1v1h-1zM241 10h1v1h-1zM239 11h1v1h-1zM91 12h1v1h-1zM135 13h1v1h-1zM235 18h1v1h-1zM283 19h1v1h-1zM286 19h3v1h-3zM315 19h2v1h-2zM83 21h1v1h-1zM260 21h1v1h-1zM284 21h1v1h-1zM284 22h1v1h-1zM288 22h1v1h-1zM291 22h1v1h-1zM146 24h1v1h-1zM297 24h1v1h-1zM188 25h1v1h-1zM294 25h1v1h-1zM298 25h1v1h-1zM189 26h1v1h-1zM290 26h1v1h-1zM298 26h2v1h-2zM287 27h1v1h-1zM292 27h1v1h-1zM297 27h1v1h-1zM241 28h1v1h-1zM290 28h1v1h-1zM293 28h1v1h-1zM296 28h1v1h-1zM119 29h2v1h-2zM290 29h2v1h-2zM294 29h1v1h-1zM186 30h1v1h-1zM188 30h1v1h-1zM190 30h1v1h-1zM291 30h1v1h-1zM294 30h1v1h-1zM27 32h1v1h-1zM189 32h1v1h-1zM203 32h1v1h-1zM205 32h2v1h-2zM288 32h1v1h-1zM293 32h2v1h-2zM204 33h1v1h-1zM206 33h1v1h-1zM254 33h1v1h-1zM290 33h3v1h-3zM48 34h2v1h-2zM186 34h1v1h-1zM201 34h3v1h-3zM205 34h2v1h-2zM296 34h1v1h-1zM85 35h2v1h-2zM291 35h1v1h-1zM291 36h1v1h-1zM294 36h1v1h-1zM41 38h1v1h-1zM185 38h1v1h-1zM187 38h1v1h-1zM282 38h4v1h-4zM293 38h1v1h-1zM302 38h1v1h-1zM286 39h1v1h-1zM290 39h1v1h-1zM187 40h1v1h-1zM282 40h1v1h-1zM288 40h1v1h-1zM184 41h3v1h-3zM283 41h1v1h-1zM288 41h1v1h-1zM185 42h1v1h-1zM188 42h1v1h-1zM283 42h1v1h-1zM289 42h1v1h-1zM292 42h1v1h-1zM186 43h1v1h-1zM281 43h1v1h-1zM285 43h1v1h-1zM282 44h1v1h-1zM285 44h2v1h-2zM290 44h1v1h-1zM282 45h3v1h-3zM287 45h1v1h-1zM290 45h1v1h-1zM184 46h1v1h-1zM187 46h1v1h-1zM200 46h1v1h-1zM279 46h1v1h-1zM284 46h2v1h-2zM287 46h1v1h-1zM232 47h1v1h-1zM284 47h1v1h-1zM286 47h1v1h-1zM96 48h1v1h-1zM187 48h1v1h-1zM276 48h1v1h-1zM282 48h1v1h-1zM285 48h1v1h-1zM277 49h1v1h-1zM281 49h2v1h-2zM285 49h2v1h-2zM26 50h1v1h-1zM184 50h1v1h-1zM271 50h1v1h-1zM273 50h2v1h-2zM276 50h2v1h-2zM280 50h1v1h-1zM281 51h1v1h-1zM283 51h2v1h-2zM184 52h1v1h-1zM270 52h1v1h-1zM278 52h1v1h-1zM287 52h1v1h-1zM268 53h1v1h-1zM273 53h2v1h-2zM279 53h1v1h-1zM186 54h1v1h-1zM268 54h3v1h-3zM272 54h1v1h-1zM275 54h2v1h-2zM279 54h1v1h-1zM183 55h1v1h-1zM268 55h1v1h-1zM272 55h1v1h-1zM274 55h2v1h-2zM277 55h2v1h-2zM268 56h4v1h-4zM275 56h2v1h-2zM282 56h1v1h-1zM187 57h1v1h-1zM264 57h1v1h-1zM277 57h1v1h-1zM265 58h2v1h-2zM268 58h1v1h-1zM271 58h1v1h-1zM186 59h1v1h-1zM266 59h1v1h-1zM268 59h2v1h-2zM278 59h1v1h-1zM109 60h1v1h-1zM142 60h2v1h-2zM185 60h1v1h-1zM228 60h2v1h-2zM264 60h1v1h-1zM187 61h1v1h-1zM264 61h1v1h-1zM268 61h1v1h-1zM273 61h1v1h-1zM277 61h1v1h-1zM82 62h1v1h-1zM185 62h1v1h-1zM273 62h1v1h-1zM278 62h1v1h-1zM305 62h1v1h-1zM84 63h1v1h-1zM185 63h1v1h-1zM262 63h1v1h-1zM270 63h1v1h-1zM7 64h1v1h-1zM185 64h1v1h-1zM237 64h1v1h-1zM262 64h1v1h-1zM266 64h1v1h-1zM268 64h1v1h-1zM272 64h1v1h-1zM274 64h1v1h-1zM264 65h1v1h-1zM268 65h1v1h-1zM270 65h1v1h-1zM272 65h1v1h-1zM206 66h1v1h-1zM267 66h2v1h-2zM270 66h1v1h-1zM308 66h1v1h-1zM180 67h1v1h-1zM263 67h1v1h-1zM266 67h4v1h-4zM274 67h1v1h-1zM185 68h1v1h-1zM266 68h2v1h-2zM270 68h1v1h-1zM261 69h1v1h-1zM269 69h1v1h-1zM264 70h1v1h-1zM266 70h1v1h-1zM271 70h1v1h-1zM273 70h1v1h-1zM261 71h1v1h-1zM264 71h1v1h-1zM266 71h1v1h-1zM271 71h2v1h-2zM274 71h2v1h-2zM277 71h1v1h-1zM183 72h1v1h-1zM267 72h1v1h-1zM269 72h1v1h-1zM272 72h1v1h-1zM266 73h1v1h-1zM270 73h1v1h-1zM272 73h1v1h-1zM274 73h1v1h-1zM238 74h1v1h-1zM259 74h1v1h-1zM76 75h2v1h-2zM259 75h1v1h-1zM262 75h1v1h-1zM267 75h1v1h-1zM270 75h1v1h-1zM274 75h1v1h-1zM96 76h1v1h-1zM181 76h1v1h-1zM216 76h1v1h-1zM268 76h1v1h-1zM274 76h1v1h-1zM258 77h1v1h-1zM268 77h1v1h-1zM270 77h1v1h-1zM259 78h1v1h-1zM271 78h1v1h-1zM275 78h1v1h-1zM179 79h1v1h-1zM181 79h1v1h-1zM206 79h1v1h-1zM211 79h1v1h-1zM264 79h1v1h-1zM259 80h2v1h-2zM262 80h1v1h-1zM270 80h1v1h-1zM185 81h1v1h-1zM261 81h3v1h-3zM265 81h1v1h-1zM273 81h1v1h-1zM266 82h2v1h-2zM272 82h1v1h-1zM258 83h1v1h-1zM260 83h1v1h-1zM266 83h1v1h-1zM120 84h2v1h-2zM258 84h1v1h-1zM264 84h1v1h-1zM267 84h4v1h-4zM257 85h1v1h-1zM265 85h3v1h-3zM271 85h1v1h-1zM275 85h1v1h-1zM178 86h1v1h-1zM258 86h1v1h-1zM260 86h1v1h-1zM7 87h1v1h-1zM262 87h2v1h-2zM265 87h1v1h-1zM269 87h2v1h-2zM179 88h1v1h-1zM259 88h2v1h-2zM266 88h2v1h-2zM272 88h1v1h-1zM91 89h1v1h-1zM259 89h1v1h-1zM264 89h1v1h-1zM267 89h1v1h-1zM179 90h2v1h-2zM182 90h2v1h-2zM220 90h2v1h-2zM257 90h3v1h-3zM5 91h1v1h-1zM176 91h1v1h-1zM179 91h1v1h-1zM257 91h1v1h-1zM260 91h1v1h-1zM268 91h1v1h-1zM275 91h2v1h-2zM181 92h1v1h-1zM262 92h1v1h-1zM264 92h1v1h-1zM268 92h1v1h-1zM179 93h1v1h-1zM258 93h1v1h-1zM262 93h1v1h-1zM264 93h1v1h-1zM183 94h1v1h-1zM262 94h1v1h-1zM264 94h1v1h-1zM267 94h1v1h-1zM327 94h1v1h-1zM36 95h1v1h-1zM183 95h1v1h-1zM263 95h1v1h-1zM136 96h1v1h-1zM257 96h1v1h-1zM259 96h2v1h-2zM177 97h1v1h-1zM180 97h2v1h-2zM256 97h1v1h-1zM258 97h1v1h-1zM261 97h2v1h-2zM275 97h1v1h-1zM178 98h1v1h-1zM180 98h1v1h-1zM182 98h1v1h-1zM266 98h2v1h-2zM284 98h1v1h-1zM177 99h1v1h-1zM258 99h1v1h-1zM179 100h1v1h-1zM258 100h1v1h-1zM265 100h1v1h-1zM176 101h2v1h-2zM34 102h1v1h-1zM153 102h1v1h-1zM257 102h1v1h-1zM262 102h1v1h-1zM264 102h1v1h-1zM266 102h1v1h-1zM256 103h2v1h-2zM259 103h1v1h-1zM264 103h1v1h-1zM180 104h2v1h-2zM183 104h1v1h-1zM258 104h2v1h-2zM263 104h1v1h-1zM177 105h1v1h-1zM256 105h2v1h-2zM264 105h1v1h-1zM288 105h1v1h-1zM175 106h1v1h-1zM181 106h1v1h-1zM265 106h1v1h-1zM317 106h2v1h-2zM266 107h1v1h-1zM179 108h1v1h-1zM181 108h1v1h-1zM259 108h1v1h-1zM179 109h1v1h-1zM265 109h1v1h-1zM262 110h3v1h-3zM267 110h1v1h-1zM272 110h1v1h-1zM331 110h1v1h-1zM180 111h1v1h-1zM256 111h1v1h-1zM259 111h1v1h-1zM261 111h1v1h-1zM264 111h1v1h-1zM108 112h1v1h-1zM182 112h1v1h-1zM255 112h1v1h-1zM261 112h1v1h-1zM300 112h1v1h-1zM175 113h2v1h-2zM285 113h2v1h-2zM174 114h1v1h-1zM179 114h1v1h-1zM256 114h3v1h-3zM262 114h1v1h-1zM174 115h1v1h-1zM260 115h1v1h-1zM264 115h1v1h-1zM179 116h1v1h-1zM256 116h1v1h-1zM258 116h1v1h-1zM175 117h1v1h-1zM261 117h1v1h-1zM128 118h1v1h-1zM179 118h1v1h-1zM255 118h1v1h-1zM257 118h3v1h-3zM8 119h1v1h-1zM258 119h3v1h-3zM263 119h1v1h-1zM258 120h1v1h-1zM260 120h1v1h-1zM262 120h1v1h-1zM284 120h1v1h-1zM300 120h1v1h-1zM234 121h2v1h-2zM263 121h1v1h-1zM265 121h1v1h-1zM301 121h1v1h-1zM264 122h2v1h-2zM261 123h1v1h-1zM264 123h1v1h-1zM258 124h1v1h-1zM257 125h1v1h-1zM259 125h1v1h-1zM256 126h2v1h-2zM262 126h1v1h-1zM263 127h1v1h-1zM31 128h1v1h-1zM256 128h1v1h-1zM258 128h1v1h-1zM233 129h1v1h-1zM262 129h1v1h-1zM260 130h2v1h-2zM90 131h2v1h-2zM262 131h1v1h-1zM255 132h1v1h-1zM261 133h1v1h-1zM263 133h1v1h-1zM276 133h2v1h-2zM146 134h1v1h-1zM258 134h1v1h-1zM264 134h1v1h-1zM256 135h3v1h-3zM261 135h1v1h-1zM248 136h2v1h-2zM253 136h1v1h-1zM252 137h1v1h-1zM221 138h2v1h-2zM250 138h1v1h-1zM252 138h1v1h-1zM256 138h1v1h-1zM195 139h1v1h-1zM228 139h1v1h-1zM253 139h1v1h-1zM93 140h1v1h-1zM248 140h1v1h-1zM260 140h1v1h-1zM244 141h1v1h-1zM259 141h1v1h-1zM330 141h1v1h-1zM256 142h1v1h-1zM251 143h1v1h-1zM253 143h1v1h-1zM258 143h1v1h-1zM251 144h1v1h-1zM258 144h1v1h-1zM249 145h1v1h-1zM200 146h1v1h-1zM255 146h2v1h-2zM74 147h1v1h-1zM222 147h1v1h-1zM238 148h1v1h-1zM261 148h1v1h-1zM217 149h1v1h-1zM253 149h1v1h-1zM257 149h1v1h-1zM286 149h1v1h-1zM251 150h1v1h-1zM75 152h1v1h-1zM143 152h1v1h-1zM252 152h1v1h-1zM254 152h1v1h-1zM249 153h1v1h-1zM255 153h1v1h-1zM257 153h1v1h-1zM323 153h2v1h-2zM9 154h1v1h-1zM39 154h1v1h-1zM250 154h2v1h-2zM259 154h1v1h-1zM154 155h1v1h-1zM255 155h1v1h-1zM257 155h1v1h-1zM220 157h1v1h-1zM252 157h1v1h-1zM257 157h1v1h-1zM251 158h1v1h-1zM254 158h1v1h-1zM260 158h1v1h-1zM250 159h1v1h-1zM256 159h1v1h-1zM259 159h1v1h-1zM327 159h1v1h-1zM288 160h1v1h-1zM249 161h1v1h-1zM251 161h1v1h-1zM253 161h1v1h-1zM257 161h1v1h-1zM267 161h1v1h-1zM325 161h1v1h-1zM254 162h1v1h-1zM256 162h1v1h-1zM261 162h1v1h-1zM250 163h1v1h-1zM253 163h1v1h-1zM255 163h1v1h-1zM257 163h1v1h-1zM258 164h1v1h-1zM260 164h1v1h-1zM250 165h1v1h-1zM253 165h1v1h-1zM253 167h1v1h-1zM258 168h1v1h-1zM253 169h1v1h-1zM257 169h1v1h-1zM159 170h1v1h-1zM252 170h1v1h-1zM258 170h1v1h-1zM56 171h1v1h-1zM252 171h1v1h-1zM284 171h1v1h-1zM8 172h1v1h-1zM250 172h1v1h-1zM254 172h2v1h-2zM304 172h1v1h-1zM253 173h1v1h-1zM71 174h2v1h-2zM255 175h1v1h-1zM49 176h1v1h-1zM99 176h1v1h-1zM220 176h1v1h-1zM255 176h1v1h-1zM259 176h1v1h-1zM187 177h1v1h-1zM251 177h2v1h-2zM255 177h1v1h-1zM252 178h1v1h-1zM254 178h1v1h-1zM259 179h1v1h-1zM148 180h1v1h-1zM171 180h2v1h-2zM252 180h1v1h-1zM255 180h1v1h-1zM258 180h2v1h-2zM268 180h1v1h-1zM167 181h1v1h-1zM120 182h2v1h-2zM251 182h1v1h-1zM253 182h1v1h-1zM135 183h1v1h-1zM31 184h1v1h-1zM253 184h1v1h-1zM257 184h1v1h-1zM172 185h1v1h-1zM253 185h1v1h-1zM9 186h1v1h-1zM248 186h2v1h-2zM214 187h1v1h-1zM252 187h1v1h-1zM254 187h1v1h-1zM258 187h2v1h-2zM86 188h1v1h-1zM253 188h1v1h-1zM258 188h1v1h-1zM315 188h1v1h-1zM89 189h1v1h-1zM255 189h2v1h-2zM47 190h1v1h-1zM255 190h1v1h-1zM258 190h1v1h-1zM187 191h1v1h-1zM254 191h1v1h-1zM254 192h1v1h-1zM258 192h1v1h-1zM240 193h1v1h-1zM252 193h3v1h-3zM257 193h1v1h-1zM308 193h1v1h-1zM189 194h2v1h-2zM252 194h1v1h-1zM254 194h1v1h-1zM258 194h1v1h-1zM46 195h1v1h-1zM252 195h1v1h-1zM254 195h1v1h-1zM318 195h1v1h-1zM35 196h2v1h-2zM251 196h1v1h-1zM257 196h1v1h-1zM107 197h1v1h-1zM218 197h1v1h-1zM285 197h1v1h-1zM256 198h1v1h-1zM295 198h2v1h-2zM54 199h1v1h-1zM255 199h1v1h-1zM259 199h1v1h-1z"/><path fill="#000080" d="M75 0h1v1h-1zM292 0h1v1h-1zM77 1h1v1h-1zM111 4h1v1h-1zM251 5h2v1h-2zM281 7h1v1h-1zM63 8h1v1h-1zM139 10h1v1h-1zM286 10h1v1h-1zM100 11h2v1h-2zM115 11h1v1h-1zM135 11h2v1h-2zM28 13h1v1h-1zM219 13h1v1h-1zM258 14h1v1h-1zM133 16h1v1h-1zM226 16h2v1h-2zM281 19h2v1h-2zM326 19h2v1h-2zM260 20h1v1h-1zM282 20h1v1h-1zM270 21h1v1h-1zM274 21h1v1h-1zM276 21h3v1h-3zM280 21h3v1h-3zM292 22h1v1h-1zM289 23h1v1h-1zM192 24h1v1h-1zM289 24h1v1h-1zM291 24h3v1h-3zM187 25h1v1h-1zM253 25h2v1h-2zM300 25h1v1h-1zM186 26h2v1h-2zM192 26h1v1h-1zM297 26h1v1h-1zM203 27h1v1h-1zM291 27h1v1h-1zM295 27h1v1h-1zM242 28h1v1h-1zM295 28h1v1h-1zM172 29h1v1h-1zM287 29h2v1h-2zM295 29h1v1h-1zM298 29h1v1h-1zM189 30h1v1h-1zM191 30h1v1h-1zM290 30h1v1h-1zM293 30h1v1h-1zM297 30h1v1h-1zM185 31h2v1h-2zM258 31h1v1h-1zM284 31h1v1h-1zM9 32h1v1h-1zM160 32h1v1h-1zM190 32h1v1h-1zM204 32h1v1h-1zM291 32h1v1h-1zM203 33h1v1h-1zM287 33h1v1h-1zM295 33h1v1h-1zM190 34h1v1h-1zM204 34h1v1h-1zM292 34h1v1h-1zM295 34h1v1h-1zM297 34h2v1h-2zM326 34h1v1h-1zM287 35h1v1h-1zM292 35h1v1h-1zM294 35h1v1h-1zM189 36h1v1h-1zM296 36h1v1h-1zM184 37h2v1h-2zM190 37h1v1h-1zM288 37h1v1h-1zM292 37h1v1h-1zM295 37h4v1h-4zM186 38h1v1h-1zM288 38h1v1h-1zM290 38h1v1h-1zM187 39h1v1h-1zM222 39h1v1h-1zM282 39h1v1h-1zM287 39h1v1h-1zM289 39h1v1h-1zM293 39h1v1h-1zM186 40h1v1h-1zM193 40h1v1h-1zM290 40h1v1h-1zM189 41h1v1h-1zM281 41h1v1h-1zM284 41h1v1h-1zM287 41h1v1h-1zM290 41h1v1h-1zM294 41h1v1h-1zM284 42h1v1h-1zM294 42h2v1h-2zM183 43h1v1h-1zM284 43h1v1h-1zM324 43h1v1h-1zM189 44h1v1h-1zM284 44h1v1h-1zM279 45h1v1h-1zM286 45h1v1h-1zM289 45h1v1h-1zM293 45h2v1h-2zM128 46h2v1h-2zM186 46h1v1h-1zM199 46h1v1h-1zM278 46h1v1h-1zM189 47h1v1h-1zM231 47h1v1h-1zM279 47h1v1h-1zM282 47h2v1h-2zM184 48h1v1h-1zM188 48h1v1h-1zM277 48h1v1h-1zM279 48h1v1h-1zM283 48h1v1h-1zM287 48h1v1h-1zM289 48h1v1h-1zM188 49h1v1h-1zM182 50h2v1h-2zM187 50h1v1h-1zM229 50h1v1h-1zM275 50h1v1h-1zM278 50h1v1h-1zM183 51h2v1h-2zM187 51h1v1h-1zM189 51h1v1h-1zM272 51h2v1h-2zM277 51h1v1h-1zM280 51h1v1h-1zM285 51h1v1h-1zM182 52h1v1h-1zM273 52h1v1h-1zM279 52h1v1h-1zM183 53h1v1h-1zM185 53h1v1h-1zM187 53h1v1h-1zM271 53h1v1h-1zM277 53h1v1h-1zM280 53h1v1h-1zM105 54h1v1h-1zM188 54h1v1h-1zM267 54h1v1h-1zM273 54h1v1h-1zM278 54h1v1h-1zM182 55h1v1h-1zM187 55h1v1h-1zM266 55h1v1h-1zM279 55h1v1h-1zM267 56h1v1h-1zM272 56h1v1h-1zM280 56h1v1h-1zM183 57h1v1h-1zM266 57h1v1h-1zM186 58h1v1h-1zM188 58h1v1h-1zM249 58h1v1h-1zM272 58h1v1h-1zM280 58h2v1h-2zM61 59h1v1h-1zM95 59h1v1h-1zM184 59h1v1h-1zM267 59h1v1h-1zM271 59h3v1h-3zM275 59h3v1h-3zM279 59h1v1h-1zM54 60h1v1h-1zM93 60h1v1h-1zM183 60h1v1h-1zM267 60h1v1h-1zM271 60h2v1h-2zM276 60h1v1h-1zM278 60h1v1h-1zM181 61h2v1h-2zM244 61h2v1h-2zM272 61h1v1h-1zM276 61h1v1h-1zM278 61h2v1h-2zM186 62h1v1h-1zM269 62h1v1h-1zM187 63h1v1h-1zM266 63h1v1h-1zM269 63h1v1h-1zM273 63h1v1h-1zM276 63h1v1h-1zM182 64h1v1h-1zM263 64h1v1h-1zM273 64h1v1h-1zM278 64h1v1h-1zM186 65h1v1h-1zM265 65h1v1h-1zM267 65h1v1h-1zM276 65h2v1h-2zM48 66h1v1h-1zM181 66h1v1h-1zM183 66h1v1h-1zM207 66h1v1h-1zM273 66h1v1h-1zM277 66h2v1h-2zM307 66h1v1h-1zM185 67h1v1h-1zM270 67h1v1h-1zM275 67h1v1h-1zM181 68h2v1h-2zM186 68h1v1h-1zM264 68h2v1h-2zM181 69h2v1h-2zM262 69h1v1h-1zM264 69h1v1h-1zM262 70h1v1h-1zM265 70h1v1h-1zM269 70h2v1h-2zM272 70h1v1h-1zM186 71h1v1h-1zM260 71h1v1h-1zM152 72h1v1h-1zM266 72h1v1h-1zM271 72h1v1h-1zM273 72h2v1h-2zM276 72h1v1h-1zM83 73h1v1h-1zM184 73h1v1h-1zM269 73h1v1h-1zM271 73h1v1h-1zM183 74h1v1h-1zM185 74h1v1h-1zM261 74h1v1h-1zM264 74h1v1h-1zM268 74h1v1h-1zM271 74h1v1h-1zM273 74h1v1h-1zM264 75h1v1h-1zM271 75h1v1h-1zM275 75h1v1h-1zM179 76h1v1h-1zM185 76h1v1h-1zM265 76h1v1h-1zM267 76h1v1h-1zM269 76h1v1h-1zM272 76h1v1h-1zM179 77h2v1h-2zM185 77h1v1h-1zM264 77h2v1h-2zM269 77h1v1h-1zM272 77h1v1h-1zM274 77h1v1h-1zM295 77h2v1h-2zM178 78h2v1h-2zM186 78h1v1h-1zM264 78h2v1h-2zM267 78h1v1h-1zM269 78h2v1h-2zM272 78h3v1h-3zM205 79h1v1h-1zM265 79h4v1h-4zM270 79h1v1h-1zM179 80h1v1h-1zM186 80h1v1h-1zM258 80h1v1h-1zM261 80h1v1h-1zM265 80h3v1h-3zM259 81h2v1h-2zM268 81h1v1h-1zM139 82h1v1h-1zM181 82h1v1h-1zM185 82h2v1h-2zM262 82h1v1h-1zM264 82h1v1h-1zM269 82h2v1h-2zM273 82h1v1h-1zM183 83h2v1h-2zM264 83h1v1h-1zM268 83h1v1h-1zM27 84h1v1h-1zM185 84h1v1h-1zM257 84h1v1h-1zM262 84h1v1h-1zM181 85h1v1h-1zM258 85h2v1h-2zM262 85h1v1h-1zM264 85h1v1h-1zM134 86h1v1h-1zM148 86h2v1h-2zM183 86h1v1h-1zM263 86h1v1h-1zM177 87h2v1h-2zM183 87h1v1h-1zM260 87h2v1h-2zM176 88h1v1h-1zM262 88h1v1h-1zM270 88h1v1h-1zM177 89h1v1h-1zM185 89h1v1h-1zM239 89h1v1h-1zM257 89h1v1h-1zM261 89h1v1h-1zM263 89h1v1h-1zM283 89h1v1h-1zM285 89h1v1h-1zM131 90h2v1h-2zM260 90h1v1h-1zM266 90h1v1h-1zM235 92h2v1h-2zM257 93h1v1h-1zM260 93h1v1h-1zM265 93h1v1h-1zM179 94h1v1h-1zM257 94h1v1h-1zM268 94h2v1h-2zM137 95h1v1h-1zM176 95h2v1h-2zM262 95h1v1h-1zM264 95h1v1h-1zM306 95h1v1h-1zM177 96h1v1h-1zM263 96h1v1h-1zM290 96h1v1h-1zM260 97h1v1h-1zM309 97h1v1h-1zM183 98h1v1h-1zM258 98h1v1h-1zM262 98h2v1h-2zM71 99h2v1h-2zM176 99h1v1h-1zM181 99h1v1h-1zM257 99h1v1h-1zM259 99h1v1h-1zM118 100h2v1h-2zM176 100h1v1h-1zM178 100h1v1h-1zM257 100h1v1h-1zM260 100h1v1h-1zM262 100h2v1h-2zM4 101h1v1h-1zM257 101h1v1h-1zM259 101h1v1h-1zM263 101h1v1h-1zM61 102h1v1h-1zM175 102h1v1h-1zM256 102h1v1h-1zM258 102h1v1h-1zM260 102h1v1h-1zM175 103h1v1h-1zM260 103h1v1h-1zM265 103h3v1h-3zM261 104h1v1h-1zM265 104h1v1h-1zM180 105h1v1h-1zM261 105h3v1h-3zM267 105h1v1h-1zM285 105h1v1h-1zM100 106h2v1h-2zM121 106h1v1h-1zM256 106h1v1h-1zM259 106h1v1h-1zM123 107h1v1h-1zM129 107h2v1h-2zM183 107h1v1h-1zM257 107h1v1h-1zM259 107h1v1h-1zM176 108h1v1h-1zM182 108h1v1h-1zM257 108h2v1h-2zM260 108h1v1h-1zM262 108h1v1h-1zM261 109h1v1h-1zM175 110h1v1h-1zM261 110h1v1h-1zM266 110h1v1h-1zM57 111h1v1h-1zM175 111h2v1h-2zM182 111h1v1h-1zM263 111h1v1h-1zM80 112h1v1h-1zM107 112h1v1h-1zM147 112h1v1h-1zM175 112h1v1h-1zM180 112h1v1h-1zM258 112h1v1h-1zM260 112h1v1h-1zM181 113h1v1h-1zM257 113h1v1h-1zM260 113h1v1h-1zM181 114h1v1h-1zM200 114h2v1h-2zM263 114h1v1h-1zM177 115h1v1h-1zM181 115h1v1h-1zM258 115h1v1h-1zM176 116h2v1h-2zM181 116h1v1h-1zM257 116h1v1h-1zM259 116h2v1h-2zM176 117h1v1h-1zM255 117h1v1h-1zM259 117h2v1h-2zM263 117h1v1h-1zM265 117h1v1h-1zM260 118h3v1h-3zM265 118h1v1h-1zM174 119h1v1h-1zM256 119h1v1h-1zM262 119h1v1h-1zM174 120h2v1h-2zM255 120h1v1h-1zM259 120h1v1h-1zM264 120h1v1h-1zM255 121h1v1h-1zM259 121h1v1h-1zM256 122h1v1h-1zM262 122h1v1h-1zM194 123h1v1h-1zM258 123h1v1h-1zM262 123h2v1h-2zM277 123h2v1h-2zM257 124h1v1h-1zM263 124h1v1h-1zM147 125h1v1h-1zM263 125h1v1h-1zM80 126h1v1h-1zM255 126h1v1h-1zM258 126h1v1h-1zM261 126h1v1h-1zM263 126h1v1h-1zM47 127h1v1h-1zM258 127h1v1h-1zM264 127h1v1h-1zM186 128h1v1h-1zM259 128h1v1h-1zM261 128h1v1h-1zM219 129h1v1h-1zM232 129h1v1h-1zM256 129h1v1h-1zM261 129h1v1h-1zM259 130h1v1h-1zM262 130h1v1h-1zM264 130h1v1h-1zM258 131h1v1h-1zM263 131h1v1h-1zM266 131h1v1h-1zM4 132h1v1h-1zM15 132h1v1h-1zM103 132h1v1h-1zM263 132h1v1h-1zM39 133h1v1h-1zM47 133h1v1h-1zM60 133h1v1h-1zM264 133h1v1h-1zM70 134h1v1h-1zM235 134h1v1h-1zM257 134h1v1h-1zM259 134h1v1h-1zM262 134h1v1h-1zM306 134h1v1h-1zM84 135h1v1h-1zM210 135h2v1h-2zM221 135h1v1h-1zM259 135h1v1h-1zM99 136h1v1h-1zM235 136h1v1h-1zM241 136h2v1h-2zM246 136h1v1h-1zM250 136h1v1h-1zM259 136h1v1h-1zM263 136h1v1h-1zM269 136h1v1h-1zM280 136h1v1h-1zM139 137h1v1h-1zM250 137h2v1h-2zM295 137h1v1h-1zM314 137h1v1h-1zM329 137h2v1h-2zM128 138h1v1h-1zM255 138h1v1h-1zM257 138h2v1h-2zM130 139h2v1h-2zM249 139h2v1h-2zM252 139h1v1h-1zM257 139h2v1h-2zM18 140h1v1h-1zM22 140h1v1h-1zM26 140h1v1h-1zM32 140h1v1h-1zM141 140h1v1h-1zM213 140h1v1h-1zM218 140h1v1h-1zM251 140h2v1h-2zM50 141h2v1h-2zM53 141h1v1h-1zM61 141h1v1h-1zM72 141h1v1h-1zM114 141h1v1h-1zM250 141h1v1h-1zM252 141h1v1h-1zM256 141h1v1h-1zM263 141h2v1h-2zM275 141h1v1h-1zM280 141h1v1h-1zM285 141h1v1h-1zM287 141h1v1h-1zM126 142h1v1h-1zM229 142h2v1h-2zM250 142h1v1h-1zM255 142h1v1h-1zM257 142h1v1h-1zM263 142h1v1h-1zM304 142h1v1h-1zM307 142h1v1h-1zM320 142h1v1h-1zM323 142h1v1h-1zM257 143h1v1h-1zM108 145h2v1h-2zM254 145h2v1h-2zM257 145h1v1h-1zM80 146h1v1h-1zM97 146h1v1h-1zM116 146h3v1h-3zM120 146h1v1h-1zM122 146h1v1h-1zM204 146h1v1h-1zM252 146h1v1h-1zM139 147h2v1h-2zM145 147h1v1h-1zM147 147h1v1h-1zM254 147h2v1h-2zM257 147h1v1h-1zM263 147h2v1h-2zM155 148h1v1h-1zM198 148h1v1h-1zM226 148h1v1h-1zM232 148h1v1h-1zM234 148h1v1h-1zM252 148h2v1h-2zM256 148h3v1h-3zM78 149h2v1h-2zM104 149h1v1h-1zM176 149h1v1h-1zM178 149h1v1h-1zM52 150h2v1h-2zM181 150h1v1h-1zM224 150h1v1h-1zM251 151h2v1h-2zM257 151h2v1h-2zM257 152h1v1h-1zM129 153h2v1h-2zM251 153h1v1h-1zM256 153h1v1h-1zM252 154h1v1h-1zM255 154h1v1h-1zM75 156h1v1h-1zM215 156h1v1h-1zM254 156h1v1h-1zM258 156h1v1h-1zM290 156h2v1h-2zM219 157h1v1h-1zM253 158h1v1h-1zM256 158h1v1h-1zM258 158h1v1h-1zM101 159h2v1h-2zM255 159h1v1h-1zM326 159h1v1h-1zM231 160h1v1h-1zM252 161h1v1h-1zM254 161h2v1h-2zM252 162h1v1h-1zM250 164h3v1h-3zM254 164h1v1h-1zM254 165h1v1h-1zM256 166h1v1h-1zM153 168h2v1h-2zM161 168h1v1h-1zM209 168h1v1h-1zM252 168h1v1h-1zM254 168h2v1h-2zM257 168h1v1h-1zM254 169h2v1h-2zM148 170h1v1h-1zM160 170h1v1h-1zM257 170h1v1h-1zM254 171h1v1h-1zM257 171h1v1h-1zM133 172h2v1h-2zM256 172h1v1h-1zM281 172h2v1h-2zM297 172h1v1h-1zM151 173h2v1h-2zM212 173h2v1h-2zM250 173h1v1h-1zM252 173h1v1h-1zM256 174h1v1h-1zM265 174h1v1h-1zM237 175h1v1h-1zM252 175h1v1h-1zM254 175h1v1h-1zM256 175h1v1h-1zM98 176h1v1h-1zM251 176h1v1h-1zM253 176h1v1h-1zM256 176h1v1h-1zM258 176h1v1h-1zM95 177h1v1h-1zM253 177h1v1h-1zM257 177h1v1h-1zM205 178h1v1h-1zM256 178h1v1h-1zM258 178h1v1h-1zM222 179h2v1h-2zM255 179h1v1h-1zM249 180h1v1h-1zM256 181h2v1h-2zM252 182h1v1h-1zM255 182h2v1h-2zM82 183h2v1h-2zM193 183h2v1h-2zM252 183h1v1h-1zM252 184h1v1h-1zM254 184h1v1h-1zM256 184h1v1h-1zM33 185h1v1h-1zM254 185h1v1h-1zM257 185h1v1h-1zM130 186h1v1h-1zM16 187h2v1h-2zM188 187h2v1h-2zM150 188h1v1h-1zM252 188h1v1h-1zM254 188h1v1h-1zM256 188h1v1h-1zM68 189h2v1h-2zM52 190h1v1h-1zM90 190h2v1h-2zM153 190h2v1h-2zM252 190h1v1h-1zM256 190h2v1h-2zM295 190h1v1h-1zM186 191h1v1h-1zM256 191h1v1h-1zM253 192h1v1h-1zM256 193h1v1h-1zM4 194h2v1h-2zM69 194h2v1h-2zM256 194h2v1h-2zM45 195h1v1h-1zM253 195h1v1h-1zM254 196h1v1h-1zM187 197h2v1h-2zM141 198h1v1h-1zM261 198h2v1h-2zM269 198h2v1h-2zM60 199h2v1h-2zM256 199h3v1h-3zM289 199h2v1h-2z"/><path fill="#0000aa" d="M9 2h1v1h-1zM11 2h1v1h-1zM39 2h1v1h-1zM46 2h1v1h-1zM79 2h1v1h-1zM125 2h1v1h-1zM138 2h1v1h-1zM171 2h1v1h-1zM216 2h1v1h-1zM222 2h1v1h-1zM241 2h1v1h-1zM247 2h1v1h-1zM257 2h1v1h-1zM261 19h1v1h-1zM279 19h2v1h-2zM278 20h1v1h-1zM268 21h2v1h-2zM271 21h3v1h-3zM275 21h1v1h-1zM279 21h1v1h-1zM287 22h1v1h-1zM288 23h1v1h-1zM290 23h2v1h-2zM187 24h1v1h-1zM288 24h1v1h-1zM192 25h1v1h-1zM290 25h1v1h-1zM292 25h2v1h-2zM295 25h1v1h-1zM191 26h1v1h-1zM294 26h1v1h-1zM296 26h1v1h-1zM191 28h1v1h-1zM291 28h1v1h-1zM187 29h1v1h-1zM292 29h2v1h-2zM287 30h2v1h-2zM296 30h1v1h-1zM298 30h1v1h-1zM187 31h1v1h-1zM190 31h2v1h-2zM201 31h4v1h-4zM207 31h1v1h-1zM282 31h2v1h-2zM187 32h1v1h-1zM285 32h1v1h-1zM287 32h1v1h-1zM289 32h2v1h-2zM187 33h1v1h-1zM289 33h1v1h-1zM294 33h1v1h-1zM185 34h1v1h-1zM189 34h1v1h-1zM288 34h1v1h-1zM290 34h1v1h-1zM293 34h1v1h-1zM286 35h1v1h-1zM185 36h3v1h-3zM290 36h1v1h-1zM188 37h1v1h-1zM290 37h2v1h-2zM293 37h2v1h-2zM286 38h1v1h-1zM184 39h1v1h-1zM188 39h1v1h-1zM283 39h1v1h-1zM285 39h1v1h-1zM188 40h1v1h-1zM280 40h1v1h-1zM285 41h1v1h-1zM187 42h1v1h-1zM184 43h1v1h-1zM286 43h1v1h-1zM183 44h3v1h-3zM288 44h1v1h-1zM183 45h1v1h-1zM186 45h1v1h-1zM188 45h1v1h-1zM285 45h1v1h-1zM288 45h1v1h-1zM189 46h1v1h-1zM281 46h2v1h-2zM286 46h1v1h-1zM288 46h2v1h-2zM184 47h1v1h-1zM188 47h1v1h-1zM278 47h1v1h-1zM285 47h1v1h-1zM185 49h1v1h-1zM187 49h1v1h-1zM273 49h4v1h-4zM278 49h1v1h-1zM280 49h1v1h-1zM188 50h1v1h-1zM272 50h1v1h-1zM186 51h1v1h-1zM279 51h1v1h-1zM186 52h1v1h-1zM188 52h1v1h-1zM272 52h1v1h-1zM276 52h1v1h-1zM280 52h2v1h-2zM182 53h1v1h-1zM188 53h1v1h-1zM272 53h1v1h-1zM182 54h1v1h-1zM187 54h1v1h-1zM271 54h1v1h-1zM277 54h1v1h-1zM270 55h1v1h-1zM273 55h1v1h-1zM266 56h1v1h-1zM273 56h2v1h-2zM184 57h2v1h-2zM188 57h1v1h-1zM268 57h1v1h-1zM271 57h1v1h-1zM275 57h1v1h-1zM182 58h2v1h-2zM267 58h1v1h-1zM273 58h3v1h-3zM277 58h1v1h-1zM185 59h1v1h-1zM187 59h1v1h-1zM264 59h1v1h-1zM274 59h1v1h-1zM187 60h1v1h-1zM265 60h2v1h-2zM268 60h1v1h-1zM273 60h1v1h-1zM185 61h1v1h-1zM266 61h1v1h-1zM269 61h3v1h-3zM181 62h2v1h-2zM264 62h4v1h-4zM271 62h1v1h-1zM183 63h2v1h-2zM264 63h2v1h-2zM268 63h1v1h-1zM180 64h1v1h-1zM186 64h1v1h-1zM265 64h1v1h-1zM271 64h1v1h-1zM275 64h1v1h-1zM181 65h1v1h-1zM183 65h1v1h-1zM262 65h1v1h-1zM186 66h2v1h-2zM262 66h2v1h-2zM266 66h1v1h-1zM269 66h1v1h-1zM271 66h1v1h-1zM181 67h1v1h-1zM186 67h1v1h-1zM261 67h2v1h-2zM265 67h1v1h-1zM272 67h2v1h-2zM183 68h2v1h-2zM260 68h2v1h-2zM268 68h1v1h-1zM272 68h1v1h-1zM180 69h1v1h-1zM186 69h1v1h-1zM263 69h1v1h-1zM267 69h2v1h-2zM271 69h1v1h-1zM180 70h1v1h-1zM183 70h1v1h-1zM185 70h1v1h-1zM267 70h2v1h-2zM181 71h1v1h-1zM184 71h1v1h-1zM262 71h2v1h-2zM265 71h1v1h-1zM267 71h1v1h-1zM269 71h2v1h-2zM181 72h1v1h-1zM185 72h1v1h-1zM260 72h2v1h-2zM268 72h1v1h-1zM179 73h1v1h-1zM185 73h1v1h-1zM259 73h1v1h-1zM262 73h3v1h-3zM268 73h1v1h-1zM258 74h1v1h-1zM260 74h1v1h-1zM263 74h1v1h-1zM181 75h1v1h-1zM265 75h2v1h-2zM269 75h1v1h-1zM264 76h1v1h-1zM183 77h1v1h-1zM186 77h1v1h-1zM262 77h1v1h-1zM183 78h1v1h-1zM185 78h1v1h-1zM258 78h1v1h-1zM260 78h2v1h-2zM263 78h1v1h-1zM266 78h1v1h-1zM178 79h1v1h-1zM263 79h1v1h-1zM269 79h1v1h-1zM180 80h2v1h-2zM185 80h1v1h-1zM264 80h1v1h-1zM268 80h1v1h-1zM182 81h1v1h-1zM258 81h1v1h-1zM266 81h1v1h-1zM261 82h1v1h-1zM263 82h1v1h-1zM265 82h1v1h-1zM268 82h1v1h-1zM178 83h1v1h-1zM259 83h1v1h-1zM261 83h1v1h-1zM259 84h2v1h-2zM263 84h1v1h-1zM182 85h1v1h-1zM184 85h1v1h-1zM260 85h1v1h-1zM270 85h1v1h-1zM179 86h1v1h-1zM181 86h2v1h-2zM259 86h1v1h-1zM262 86h1v1h-1zM264 86h1v1h-1zM267 86h1v1h-1zM182 87h1v1h-1zM184 87h2v1h-2zM267 87h1v1h-1zM177 88h2v1h-2zM183 88h1v1h-1zM263 88h2v1h-2zM182 89h1v1h-1zM184 89h1v1h-1zM260 89h1v1h-1zM262 89h1v1h-1zM265 89h1v1h-1zM263 90h1v1h-1zM177 91h1v1h-1zM184 91h1v1h-1zM262 91h1v1h-1zM264 91h1v1h-1zM178 92h1v1h-1zM182 92h2v1h-2zM258 92h1v1h-1zM260 92h2v1h-2zM263 92h1v1h-1zM259 93h1v1h-1zM261 93h1v1h-1zM180 94h1v1h-1zM182 94h1v1h-1zM256 94h1v1h-1zM259 94h1v1h-1zM261 94h1v1h-1zM263 94h1v1h-1zM256 95h1v1h-1zM259 95h2v1h-2zM178 96h2v1h-2zM181 96h1v1h-1zM258 96h1v1h-1zM264 96h1v1h-1zM179 97h1v1h-1zM183 97h1v1h-1zM257 97h1v1h-1zM263 97h3v1h-3zM179 98h1v1h-1zM184 98h1v1h-1zM257 98h1v1h-1zM260 98h2v1h-2zM264 98h2v1h-2zM260 99h1v1h-1zM265 99h1v1h-1zM181 100h1v1h-1zM261 100h1v1h-1zM182 101h2v1h-2zM258 101h1v1h-1zM260 101h2v1h-2zM265 101h1v1h-1zM259 102h1v1h-1zM261 102h1v1h-1zM176 103h1v1h-1zM258 103h1v1h-1zM261 103h3v1h-3zM174 104h1v1h-1zM256 104h1v1h-1zM262 104h1v1h-1zM176 105h1v1h-1zM182 105h1v1h-1zM258 106h1v1h-1zM263 106h1v1h-1zM175 107h1v1h-1zM256 107h1v1h-1zM260 107h1v1h-1zM262 107h1v1h-1zM175 108h1v1h-1zM177 108h1v1h-1zM255 108h2v1h-2zM175 109h2v1h-2zM182 109h2v1h-2zM257 109h1v1h-1zM180 110h1v1h-1zM183 110h1v1h-1zM257 110h1v1h-1zM259 110h1v1h-1zM177 111h1v1h-1zM181 111h1v1h-1zM177 112h1v1h-1zM180 113h1v1h-1zM182 113h1v1h-1zM256 113h1v1h-1zM258 113h1v1h-1zM263 113h1v1h-1zM175 114h2v1h-2zM255 114h1v1h-1zM261 114h1v1h-1zM179 115h2v1h-2zM255 115h2v1h-2zM259 115h1v1h-1zM261 115h2v1h-2zM175 116h1v1h-1zM178 116h1v1h-1zM177 117h1v1h-1zM257 117h2v1h-2zM264 117h1v1h-1zM181 118h1v1h-1zM175 119h2v1h-2zM261 119h1v1h-1zM179 120h2v1h-2zM258 121h1v1h-1zM260 121h2v1h-2zM255 122h1v1h-1zM259 122h1v1h-1zM263 122h1v1h-1zM256 123h1v1h-1zM260 123h1v1h-1zM255 124h2v1h-2zM262 124h1v1h-1zM258 125h1v1h-1zM259 126h1v1h-1zM256 127h1v1h-1zM262 127h1v1h-1zM257 128h1v1h-1zM220 129h1v1h-1zM257 129h1v1h-1zM259 129h2v1h-2zM257 130h1v1h-1zM0 131h1v1h-1zM260 131h2v1h-2zM11 132h1v1h-1zM23 132h1v1h-1zM261 132h1v1h-1zM48 133h1v1h-1zM50 133h2v1h-2zM56 133h1v1h-1zM63 133h1v1h-1zM257 133h1v1h-1zM259 133h1v1h-1zM262 133h1v1h-1zM75 134h1v1h-1zM79 134h1v1h-1zM260 134h1v1h-1zM212 135h1v1h-1zM228 136h1v1h-1zM234 136h1v1h-1zM256 136h2v1h-2zM268 136h1v1h-1zM103 137h1v1h-1zM107 137h2v1h-2zM111 137h1v1h-1zM253 137h1v1h-1zM255 137h1v1h-1zM258 137h1v1h-1zM290 137h1v1h-1zM294 137h1v1h-1zM299 137h1v1h-1zM315 137h2v1h-2zM319 137h1v1h-1zM325 137h1v1h-1zM113 138h1v1h-1zM115 138h1v1h-1zM120 138h1v1h-1zM129 139h1v1h-1zM0 140h1v1h-1zM5 140h1v1h-1zM133 140h2v1h-2zM143 140h1v1h-1zM222 140h1v1h-1zM224 140h2v1h-2zM246 140h1v1h-1zM250 140h1v1h-1zM254 140h1v1h-1zM31 141h1v1h-1zM45 141h1v1h-1zM57 141h1v1h-1zM59 141h1v1h-1zM64 141h1v1h-1zM68 141h1v1h-1zM71 141h1v1h-1zM253 141h2v1h-2zM260 141h1v1h-1zM279 141h1v1h-1zM284 141h1v1h-1zM289 141h2v1h-2zM74 142h2v1h-2zM158 142h1v1h-1zM163 142h1v1h-1zM254 142h1v1h-1zM292 142h1v1h-1zM294 142h1v1h-1zM328 142h1v1h-1zM87 143h2v1h-2zM167 143h1v1h-1zM169 143h1v1h-1zM178 143h1v1h-1zM180 144h2v1h-2zM186 144h1v1h-1zM190 144h1v1h-1zM250 144h1v1h-1zM107 145h1v1h-1zM110 145h1v1h-1zM194 145h2v1h-2zM197 145h2v1h-2zM256 145h1v1h-1zM128 146h1v1h-1zM133 147h1v1h-1zM135 147h1v1h-1zM206 147h1v1h-1zM209 147h1v1h-1zM216 147h1v1h-1zM218 147h1v1h-1zM256 147h1v1h-1zM148 148h1v1h-1zM160 148h1v1h-1zM227 148h1v1h-1zM179 149h1v1h-1zM252 149h1v1h-1zM256 149h1v1h-1zM183 150h1v1h-1zM186 150h1v1h-1zM189 150h2v1h-2zM252 150h1v1h-1zM254 150h3v1h-3zM253 151h1v1h-1zM253 152h1v1h-1zM254 153h1v1h-1zM254 154h1v1h-1zM256 155h1v1h-1zM255 156h1v1h-1zM255 158h1v1h-1zM253 159h1v1h-1zM254 160h1v1h-1zM256 160h1v1h-1zM253 162h1v1h-1zM256 164h1v1h-1zM256 165h1v1h-1zM255 166h1v1h-1zM257 166h1v1h-1zM254 167h3v1h-3zM256 168h1v1h-1zM253 170h1v1h-1zM256 170h1v1h-1zM253 174h3v1h-3zM257 175h1v1h-1zM253 180h2v1h-2zM256 180h1v1h-1zM254 181h1v1h-1zM255 183h1v1h-1zM255 184h1v1h-1zM253 186h2v1h-2zM253 187h1v1h-1zM255 187h2v1h-2zM253 190h1v1h-1zM296 190h1v1h-1zM255 194h1v1h-1zM255 196h1v1h-1zM254 197h1v1h-1zM255 198h1v1h-1zM254 199h1v1h-1z"/><path fill="#0000d4" d="M254 1h1v1h-1zM257 1h1v1h-1zM260 1h3v1h-3zM271 1h1v1h-1zM275 1h2v1h-2zM279 1h1v1h-1zM281 1h1v1h-1zM283 1h1v1h-1zM8 2h1v1h-1zM13 2h1v1h-1zM16 2h1v1h-1zM20 2h1v1h-1zM27 2h2v1h-2zM31 2h1v1h-1zM37 2h1v1h-1zM40 2h1v1h-1zM48 2h1v1h-1zM50 2h1v1h-1zM59 2h2v1h-2zM65 2h1v1h-1zM101 2h1v1h-1zM107 2h1v1h-1zM113 2h1v1h-1zM122 2h3v1h-3zM142 2h1v1h-1zM151 2h1v1h-1zM157 2h1v1h-1zM163 2h2v1h-2zM173 2h1v1h-1zM176 2h1v1h-1zM179 2h1v1h-1zM219 2h1v1h-1zM223 2h1v1h-1zM227 2h1v1h-1zM229 2h2v1h-2zM253 2h1v1h-1zM255 2h1v1h-1zM260 2h1v1h-1zM280 2h2v1h-2zM285 2h1v1h-1zM292 2h1v1h-1zM328 2h1v1h-1zM21 3h1v1h-1zM27 3h2v1h-2zM43 3h1v1h-1zM111 3h1v1h-1zM117 3h1v1h-1zM122 3h1v1h-1zM170 3h1v1h-1zM185 3h1v1h-1zM188 3h2v1h-2zM193 3h1v1h-1zM300 3h1v1h-1zM302 3h1v1h-1zM317 3h1v1h-1zM10 4h2v1h-2zM23 4h1v1h-1zM28 4h1v1h-1zM31 4h1v1h-1zM39 4h1v1h-1zM44 4h1v1h-1zM47 4h1v1h-1zM89 4h1v1h-1zM92 4h1v1h-1zM289 4h2v1h-2zM10 6h1v1h-1zM15 6h1v1h-1zM33 6h1v1h-1zM35 6h1v1h-1zM41 6h1v1h-1zM44 6h1v1h-1zM202 6h1v1h-1zM222 6h2v1h-2zM327 6h1v1h-1zM116 7h1v1h-1zM143 7h2v1h-2zM146 7h1v1h-1zM277 7h1v1h-1zM279 7h1v1h-1zM304 7h2v1h-2zM310 7h1v1h-1zM131 8h1v1h-1zM1 9h1v1h-1zM3 9h2v1h-2zM120 9h2v1h-2zM124 9h1v1h-1zM164 9h2v1h-2zM218 9h2v1h-2zM260 9h2v1h-2zM265 9h1v1h-1zM281 9h1v1h-1zM287 9h1v1h-1zM299 9h1v1h-1zM275 11h1v1h-1zM57 13h2v1h-2zM78 13h1v1h-1zM80 13h1v1h-1zM90 13h1v1h-1zM176 13h1v1h-1zM182 13h3v1h-3zM204 13h1v1h-1zM290 13h1v1h-1zM292 13h1v1h-1zM298 13h1v1h-1zM293 14h3v1h-3zM223 15h1v1h-1zM221 17h1v1h-1zM223 17h1v1h-1zM225 17h1v1h-1zM2 18h1v1h-1zM6 18h1v1h-1zM13 18h2v1h-2zM16 18h1v1h-1zM21 18h1v1h-1zM31 18h2v1h-2zM40 18h1v1h-1zM44 18h2v1h-2zM51 18h1v1h-1zM56 18h1v1h-1zM75 18h1v1h-1zM98 18h1v1h-1zM109 18h1v1h-1zM112 18h4v1h-4zM117 18h1v1h-1zM121 18h1v1h-1zM127 18h1v1h-1zM134 18h2v1h-2zM137 18h1v1h-1zM140 18h1v1h-1zM150 18h1v1h-1zM157 18h1v1h-1zM165 18h1v1h-1zM169 18h2v1h-2zM173 18h3v1h-3zM178 18h1v1h-1zM180 18h1v1h-1zM185 18h1v1h-1zM271 18h1v1h-1zM279 18h1v1h-1zM281 18h1v1h-1zM285 18h3v1h-3zM272 19h3v1h-3zM276 19h3v1h-3zM1 20h1v1h-1zM3 20h1v1h-1zM5 20h1v1h-1zM8 20h2v1h-2zM14 20h1v1h-1zM17 20h1v1h-1zM28 20h1v1h-1zM39 20h2v1h-2zM45 20h1v1h-1zM57 20h1v1h-1zM69 20h1v1h-1zM74 20h1v1h-1zM76 20h1v1h-1zM103 20h1v1h-1zM125 20h1v1h-1zM139 20h1v1h-1zM142 20h1v1h-1zM156 20h1v1h-1zM158 20h1v1h-1zM270 20h1v1h-1zM273 20h1v1h-1zM277 20h1v1h-1zM284 20h2v1h-2zM290 20h2v1h-2zM297 20h1v1h-1zM299 20h1v1h-1zM219 21h1v1h-1zM224 21h1v1h-1zM226 21h3v1h-3zM234 21h1v1h-1zM244 21h1v1h-1zM282 23h2v1h-2zM285 23h3v1h-3zM189 24h1v1h-1zM260 24h1v1h-1zM285 24h1v1h-1zM290 24h1v1h-1zM190 25h2v1h-2zM260 25h1v1h-1zM284 25h1v1h-1zM288 25h2v1h-2zM188 26h1v1h-1zM190 26h1v1h-1zM291 26h3v1h-3zM34 27h1v1h-1zM36 27h1v1h-1zM106 27h1v1h-1zM108 27h2v1h-2zM289 27h2v1h-2zM292 28h1v1h-1zM27 29h1v1h-1zM30 29h1v1h-1zM188 29h1v1h-1zM190 29h1v1h-1zM258 29h1v1h-1zM286 29h1v1h-1zM289 29h1v1h-1zM321 29h1v1h-1zM323 29h2v1h-2zM259 30h1v1h-1zM285 30h1v1h-1zM289 30h1v1h-1zM292 30h1v1h-1zM37 31h1v1h-1zM138 31h1v1h-1zM140 31h1v1h-1zM142 31h1v1h-1zM155 31h2v1h-2zM168 31h1v1h-1zM199 31h2v1h-2zM205 31h2v1h-2zM208 31h2v1h-2zM266 31h1v1h-1zM270 31h1v1h-1zM281 31h1v1h-1zM283 32h1v1h-1zM286 32h1v1h-1zM188 33h2v1h-2zM257 33h1v1h-1zM283 33h4v1h-4zM288 33h1v1h-1zM257 34h1v1h-1zM291 34h1v1h-1zM201 35h1v1h-1zM206 35h1v1h-1zM209 35h1v1h-1zM282 35h1v1h-1zM284 35h2v1h-2zM288 35h1v1h-1zM290 35h1v1h-1zM188 36h1v1h-1zM286 36h1v1h-1zM289 36h1v1h-1zM292 36h1v1h-1zM256 37h1v1h-1zM282 37h1v1h-1zM285 37h1v1h-1zM287 37h1v1h-1zM289 37h1v1h-1zM188 38h1v1h-1zM280 38h1v1h-1zM185 39h2v1h-2zM256 39h1v1h-1zM280 39h2v1h-2zM185 40h1v1h-1zM189 40h1v1h-1zM256 40h1v1h-1zM281 40h1v1h-1zM188 41h1v1h-1zM279 41h2v1h-2zM183 42h2v1h-2zM186 42h1v1h-1zM256 42h1v1h-1zM280 42h3v1h-3zM285 42h1v1h-1zM288 42h1v1h-1zM185 43h1v1h-1zM188 43h1v1h-1zM255 43h1v1h-1zM280 43h1v1h-1zM187 44h1v1h-1zM280 44h2v1h-2zM277 45h2v1h-2zM281 45h1v1h-1zM274 46h1v1h-1zM277 46h1v1h-1zM280 46h1v1h-1zM280 47h1v1h-1zM185 48h1v1h-1zM254 48h2v1h-2zM272 48h1v1h-1zM274 48h2v1h-2zM278 48h1v1h-1zM267 49h4v1h-4zM272 49h1v1h-1zM186 50h1v1h-1zM267 50h2v1h-2zM188 51h1v1h-1zM270 51h2v1h-2zM274 51h2v1h-2zM187 52h1v1h-1zM268 52h1v1h-1zM271 52h1v1h-1zM274 52h1v1h-1zM184 53h1v1h-1zM254 53h1v1h-1zM266 53h1v1h-1zM183 54h1v1h-1zM185 54h1v1h-1zM265 54h1v1h-1zM274 54h1v1h-1zM184 55h1v1h-1zM264 55h1v1h-1zM267 55h1v1h-1zM269 55h1v1h-1zM183 56h1v1h-1zM254 56h1v1h-1zM263 57h1v1h-1zM265 57h1v1h-1zM267 57h1v1h-1zM184 58h1v1h-1zM263 58h1v1h-1zM254 59h1v1h-1zM265 59h1v1h-1zM184 60h1v1h-1zM186 60h1v1h-1zM254 60h1v1h-1zM263 60h1v1h-1zM269 60h1v1h-1zM186 61h1v1h-1zM253 61h1v1h-1zM263 61h1v1h-1zM265 61h1v1h-1zM267 61h1v1h-1zM254 62h1v1h-1zM268 62h1v1h-1zM182 63h1v1h-1zM186 63h1v1h-1zM261 63h1v1h-1zM263 63h1v1h-1zM267 63h1v1h-1zM183 64h2v1h-2zM253 64h1v1h-1zM261 64h1v1h-1zM264 64h1v1h-1zM267 64h1v1h-1zM182 65h1v1h-1zM184 65h2v1h-2zM187 65h1v1h-1zM254 65h1v1h-1zM261 65h1v1h-1zM263 65h1v1h-1zM253 66h1v1h-1zM261 66h1v1h-1zM264 66h1v1h-1zM182 67h1v1h-1zM184 67h1v1h-1zM253 67h1v1h-1zM264 67h1v1h-1zM263 68h1v1h-1zM184 69h1v1h-1zM253 69h1v1h-1zM260 69h1v1h-1zM181 70h1v1h-1zM253 70h1v1h-1zM259 70h1v1h-1zM263 70h1v1h-1zM182 71h1v1h-1zM253 71h1v1h-1zM268 71h1v1h-1zM186 72h1v1h-1zM259 72h1v1h-1zM262 72h2v1h-2zM181 73h1v1h-1zM183 73h1v1h-1zM258 73h1v1h-1zM261 73h1v1h-1zM180 74h1v1h-1zM184 74h1v1h-1zM180 75h1v1h-1zM185 75h1v1h-1zM253 75h1v1h-1zM260 75h1v1h-1zM178 76h1v1h-1zM182 76h3v1h-3zM253 76h1v1h-1zM258 76h2v1h-2zM261 76h2v1h-2zM266 76h1v1h-1zM182 77h1v1h-1zM184 77h1v1h-1zM259 77h3v1h-3zM263 77h1v1h-1zM184 78h1v1h-1zM180 79h1v1h-1zM183 79h1v1h-1zM258 79h5v1h-5zM181 81h1v1h-1zM184 81h1v1h-1zM252 81h1v1h-1zM179 82h1v1h-1zM184 82h1v1h-1zM252 82h1v1h-1zM258 82h1v1h-1zM260 82h1v1h-1zM179 83h4v1h-4zM262 83h1v1h-1zM180 84h2v1h-2zM184 84h1v1h-1zM261 84h1v1h-1zM179 85h2v1h-2zM183 85h1v1h-1zM252 85h1v1h-1zM257 86h1v1h-1zM258 87h2v1h-2zM181 88h1v1h-1zM251 88h1v1h-1zM257 88h2v1h-2zM180 89h1v1h-1zM183 89h1v1h-1zM258 89h1v1h-1zM178 90h1v1h-1zM252 90h1v1h-1zM182 91h1v1h-1zM252 91h1v1h-1zM258 91h1v1h-1zM261 91h1v1h-1zM179 92h1v1h-1zM178 93h1v1h-1zM181 93h2v1h-2zM177 94h1v1h-1zM258 94h1v1h-1zM260 94h1v1h-1zM178 95h1v1h-1zM180 95h1v1h-1zM251 95h1v1h-1zM257 95h2v1h-2zM180 96h1v1h-1zM182 96h1v1h-1zM256 96h1v1h-1zM261 96h1v1h-1zM182 97h1v1h-1zM177 98h1v1h-1zM181 98h1v1h-1zM178 99h1v1h-1zM182 99h1v1h-1zM177 100h1v1h-1zM180 100h1v1h-1zM182 100h2v1h-2zM251 100h1v1h-1zM259 100h1v1h-1zM256 101h1v1h-1zM176 102h3v1h-3zM250 102h1v1h-1zM177 103h1v1h-1zM181 103h1v1h-1zM250 103h2v1h-2zM179 104h1v1h-1zM257 104h1v1h-1zM178 105h2v1h-2zM181 105h1v1h-1zM250 105h1v1h-1zM258 105h1v1h-1zM260 105h1v1h-1zM255 106h1v1h-1zM257 106h1v1h-1zM176 107h1v1h-1zM178 107h1v1h-1zM181 107h1v1h-1zM178 108h1v1h-1zM177 109h1v1h-1zM180 109h1v1h-1zM256 109h1v1h-1zM258 109h2v1h-2zM177 110h2v1h-2zM250 110h1v1h-1zM256 110h1v1h-1zM258 110h1v1h-1zM178 111h2v1h-2zM176 112h1v1h-1zM256 112h2v1h-2zM177 113h2v1h-2zM255 113h1v1h-1zM178 114h1v1h-1zM260 114h1v1h-1zM178 115h1v1h-1zM250 115h1v1h-1zM255 116h1v1h-1zM178 117h2v1h-2zM177 118h1v1h-1zM256 118h1v1h-1zM177 119h1v1h-1zM255 119h1v1h-1zM257 119h1v1h-1zM177 120h1v1h-1zM251 120h1v1h-1zM250 121h1v1h-1zM256 121h2v1h-2zM258 122h1v1h-1zM260 122h1v1h-1zM255 123h1v1h-1zM251 124h1v1h-1zM259 124h2v1h-2zM114 125h1v1h-1zM251 125h1v1h-1zM256 125h1v1h-1zM251 126h1v1h-1zM114 127h1v1h-1zM150 127h1v1h-1zM259 127h1v1h-1zM279 127h1v1h-1zM114 128h1v1h-1zM255 128h1v1h-1zM279 128h1v1h-1zM18 129h1v1h-1zM114 129h1v1h-1zM159 129h1v1h-1zM251 129h1v1h-1zM258 129h1v1h-1zM279 129h1v1h-1zM114 130h1v1h-1zM137 130h1v1h-1zM150 130h1v1h-1zM256 130h1v1h-1zM283 130h1v1h-1zM326 130h1v1h-1zM18 131h1v1h-1zM159 131h1v1h-1zM256 131h2v1h-2zM259 131h1v1h-1zM326 131h1v1h-1zM9 132h1v1h-1zM14 132h1v1h-1zM17 132h2v1h-2zM27 132h2v1h-2zM31 132h1v1h-1zM114 132h1v1h-1zM137 132h1v1h-1zM244 132h1v1h-1zM251 132h1v1h-1zM257 132h1v1h-1zM322 132h1v1h-1zM18 133h1v1h-1zM36 133h2v1h-2zM43 133h3v1h-3zM52 133h1v1h-1zM54 133h2v1h-2zM150 133h1v1h-1zM159 133h1v1h-1zM172 133h1v1h-1zM244 133h1v1h-1zM252 133h2v1h-2zM256 133h1v1h-1zM258 133h1v1h-1zM279 133h1v1h-1zM322 133h1v1h-1zM18 134h1v1h-1zM71 134h1v1h-1zM73 134h1v1h-1zM78 134h1v1h-1zM82 134h1v1h-1zM150 134h1v1h-1zM252 134h1v1h-1zM254 134h1v1h-1zM326 134h1v1h-1zM85 135h1v1h-1zM159 135h1v1h-1zM192 135h1v1h-1zM252 135h4v1h-4zM150 136h1v1h-1zM159 136h1v1h-1zM172 136h1v1h-1zM179 136h1v1h-1zM224 136h1v1h-1zM229 136h1v1h-1zM232 136h1v1h-1zM239 136h1v1h-1zM244 136h1v1h-1zM252 136h1v1h-1zM255 136h1v1h-1zM270 136h1v1h-1zM326 136h1v1h-1zM159 137h1v1h-1zM192 137h1v1h-1zM240 137h1v1h-1zM287 137h2v1h-2zM293 137h1v1h-1zM298 137h1v1h-1zM300 137h1v1h-1zM309 137h1v1h-1zM324 137h1v1h-1zM331 137h1v1h-1zM117 138h1v1h-1zM121 138h2v1h-2zM150 138h1v1h-1zM159 138h1v1h-1zM124 139h1v1h-1zM179 139h1v1h-1zM240 139h1v1h-1zM244 139h1v1h-1zM251 139h1v1h-1zM256 139h1v1h-1zM8 140h1v1h-1zM16 140h1v1h-1zM23 140h1v1h-1zM27 140h1v1h-1zM159 140h1v1h-1zM212 140h1v1h-1zM214 140h1v1h-1zM221 140h1v1h-1zM223 140h1v1h-1zM237 140h1v1h-1zM245 140h1v1h-1zM304 140h1v1h-1zM35 141h1v1h-1zM46 141h1v1h-1zM49 141h1v1h-1zM55 141h2v1h-2zM70 141h1v1h-1zM150 141h2v1h-2zM159 141h1v1h-1zM192 141h1v1h-1zM240 141h1v1h-1zM251 141h1v1h-1zM255 141h1v1h-1zM257 141h1v1h-1zM262 141h1v1h-1zM270 141h1v1h-1zM278 141h1v1h-1zM281 141h2v1h-2zM288 141h1v1h-1zM304 141h1v1h-1zM73 142h1v1h-1zM77 142h2v1h-2zM150 142h1v1h-1zM156 142h1v1h-1zM159 142h2v1h-2zM172 142h1v1h-1zM179 142h1v1h-1zM240 142h1v1h-1zM244 142h1v1h-1zM302 142h1v1h-1zM309 142h1v1h-1zM318 142h1v1h-1zM321 142h1v1h-1zM324 142h1v1h-1zM86 143h1v1h-1zM92 143h1v1h-1zM150 143h1v1h-1zM159 143h1v1h-1zM172 143h2v1h-2zM177 143h1v1h-1zM179 143h1v1h-1zM192 143h1v1h-1zM240 143h1v1h-1zM304 143h1v1h-1zM95 144h2v1h-2zM100 144h1v1h-1zM159 144h1v1h-1zM172 144h1v1h-1zM184 144h1v1h-1zM192 144h1v1h-1zM244 144h1v1h-1zM254 144h2v1h-2zM304 144h1v1h-1zM150 145h1v1h-1zM159 145h1v1h-1zM172 145h1v1h-1zM192 145h1v1h-1zM240 145h1v1h-1zM304 145h1v1h-1zM123 146h1v1h-1zM126 146h1v1h-1zM129 146h1v1h-1zM179 146h1v1h-1zM192 146h1v1h-1zM201 146h1v1h-1zM304 146h1v1h-1zM130 147h1v1h-1zM136 147h2v1h-2zM142 147h1v1h-1zM240 147h1v1h-1zM244 147h1v1h-1zM304 147h1v1h-1zM150 148h2v1h-2zM156 148h1v1h-1zM163 148h1v1h-1zM179 148h1v1h-1zM192 148h1v1h-1zM225 148h1v1h-1zM240 148h1v1h-1zM150 149h1v1h-1zM166 149h2v1h-2zM174 149h1v1h-1zM150 150h1v1h-1zM192 150h1v1h-1zM240 150h1v1h-1zM304 150h1v1h-1zM150 151h1v1h-1zM199 151h1v1h-1zM254 151h1v1h-1zM172 152h1v1h-1zM192 152h1v1h-1zM192 153h1v1h-1zM172 155h1v1h-1zM192 155h1v1h-1zM254 155h1v1h-1zM172 156h1v1h-1zM192 156h1v1h-1zM254 157h1v1h-1zM255 165h1v1h-1zM192 172h1v1h-1zM192 173h1v1h-1zM33 174h1v1h-1zM254 190h1v1h-1zM255 191h1v1h-1zM255 197h1v1h-1z"/><path fill="#0a00f5" d="M181 1h1v1h-1zM183 1h4v1h-4zM252 1h1v1h-1zM255 1h2v1h-2zM258 1h2v1h-2zM264 1h4v1h-4zM270 1h1v1h-1zM272 1h3v1h-3zM277 1h2v1h-2zM280 1h1v1h-1zM284 1h1v1h-1zM29 2h1v1h-1zM33 2h2v1h-2zM45 2h1v1h-1zM57 2h1v1h-1zM67 2h1v1h-1zM70 2h1v1h-1zM72 2h1v1h-1zM76 2h1v1h-1zM84 2h3v1h-3zM88 2h2v1h-2zM100 2h1v1h-1zM102 2h1v1h-1zM104 2h1v1h-1zM106 2h1v1h-1zM109 2h1v1h-1zM115 2h1v1h-1zM117 2h1v1h-1zM119 2h1v1h-1zM154 2h1v1h-1zM156 2h1v1h-1zM174 2h2v1h-2zM177 2h1v1h-1zM183 2h1v1h-1zM221 2h1v1h-1zM226 2h1v1h-1zM232 2h2v1h-2zM240 2h1v1h-1zM259 2h1v1h-1zM278 2h2v1h-2zM282 2h1v1h-1zM290 2h1v1h-1zM305 2h4v1h-4zM9 3h1v1h-1zM14 3h1v1h-1zM18 3h2v1h-2zM22 3h1v1h-1zM32 3h1v1h-1zM34 3h1v1h-1zM109 3h1v1h-1zM112 3h1v1h-1zM114 3h2v1h-2zM118 3h1v1h-1zM120 3h1v1h-1zM164 3h1v1h-1zM166 3h4v1h-4zM171 3h2v1h-2zM184 3h1v1h-1zM190 3h3v1h-3zM199 3h1v1h-1zM201 3h1v1h-1zM204 3h1v1h-1zM299 3h1v1h-1zM301 3h1v1h-1zM303 3h2v1h-2zM314 3h3v1h-3zM319 3h1v1h-1zM321 3h2v1h-2zM3 4h1v1h-1zM30 4h1v1h-1zM34 4h1v1h-1zM38 4h1v1h-1zM90 4h1v1h-1zM286 4h3v1h-3zM4 6h1v1h-1zM8 6h1v1h-1zM13 6h1v1h-1zM16 6h1v1h-1zM18 6h1v1h-1zM34 6h1v1h-1zM36 6h1v1h-1zM45 6h2v1h-2zM203 6h3v1h-3zM221 6h1v1h-1zM224 6h1v1h-1zM326 6h1v1h-1zM328 6h3v1h-3zM71 7h2v1h-2zM117 7h1v1h-1zM122 7h2v1h-2zM127 7h1v1h-1zM137 7h6v1h-6zM148 7h2v1h-2zM276 7h1v1h-1zM278 7h1v1h-1zM307 7h3v1h-3zM130 8h1v1h-1zM132 8h2v1h-2zM2 9h1v1h-1zM5 9h1v1h-1zM114 9h2v1h-2zM117 9h1v1h-1zM122 9h1v1h-1zM126 9h2v1h-2zM129 9h1v1h-1zM166 9h2v1h-2zM170 9h1v1h-1zM174 9h1v1h-1zM178 9h1v1h-1zM215 9h3v1h-3zM259 9h1v1h-1zM263 9h2v1h-2zM267 9h2v1h-2zM279 9h2v1h-2zM282 9h1v1h-1zM284 9h1v1h-1zM286 9h1v1h-1zM300 9h3v1h-3zM43 11h1v1h-1zM276 11h1v1h-1zM1 13h1v1h-1zM6 13h3v1h-3zM11 13h1v1h-1zM14 13h1v1h-1zM18 13h1v1h-1zM22 13h1v1h-1zM24 13h4v1h-4zM29 13h2v1h-2zM32 13h2v1h-2zM35 13h1v1h-1zM38 13h2v1h-2zM41 13h2v1h-2zM44 13h2v1h-2zM55 13h2v1h-2zM59 13h1v1h-1zM75 13h3v1h-3zM79 13h1v1h-1zM82 13h1v1h-1zM88 13h2v1h-2zM175 13h1v1h-1zM177 13h5v1h-5zM185 13h1v1h-1zM202 13h2v1h-2zM293 13h5v1h-5zM299 13h1v1h-1zM302 13h1v1h-1zM304 13h1v1h-1zM292 14h1v1h-1zM303 14h2v1h-2zM0 15h7v1h-7zM8 15h2v1h-2zM11 15h3v1h-3zM15 15h1v1h-1zM18 15h1v1h-1zM21 15h5v1h-5zM27 15h1v1h-1zM30 15h2v1h-2zM34 15h1v1h-1zM36 15h2v1h-2zM39 15h4v1h-4zM44 15h2v1h-2zM48 15h1v1h-1zM220 15h1v1h-1zM222 15h1v1h-1zM225 15h5v1h-5zM231 15h2v1h-2zM234 15h1v1h-1zM275 15h1v1h-1zM277 15h1v1h-1zM279 15h4v1h-4zM305 15h2v1h-2zM317 15h3v1h-3zM0 16h2v1h-2zM3 16h2v1h-2zM9 16h1v1h-1zM11 16h2v1h-2zM15 16h3v1h-3zM20 16h1v1h-1zM22 16h1v1h-1zM24 16h2v1h-2zM33 16h1v1h-1zM35 16h4v1h-4zM41 16h2v1h-2zM45 16h1v1h-1zM48 16h3v1h-3zM82 16h1v1h-1zM84 16h5v1h-5zM91 16h2v1h-2zM94 16h2v1h-2zM97 16h1v1h-1zM244 16h2v1h-2zM253 16h1v1h-1zM3 17h1v1h-1zM5 17h1v1h-1zM9 17h3v1h-3zM13 17h1v1h-1zM16 17h1v1h-1zM18 17h2v1h-2zM21 17h3v1h-3zM28 17h3v1h-3zM32 17h2v1h-2zM35 17h4v1h-4zM40 17h1v1h-1zM43 17h1v1h-1zM45 17h1v1h-1zM129 17h1v1h-1zM132 17h1v1h-1zM136 17h2v1h-2zM139 17h1v1h-1zM141 17h5v1h-5zM150 17h9v1h-9zM160 17h1v1h-1zM162 17h3v1h-3zM166 17h3v1h-3zM170 17h3v1h-3zM174 17h2v1h-2zM177 17h3v1h-3zM181 17h1v1h-1zM183 17h1v1h-1zM185 17h2v1h-2zM188 17h1v1h-1zM190 17h2v1h-2zM222 17h1v1h-1zM224 17h1v1h-1zM228 17h1v1h-1zM230 17h2v1h-2zM0 18h2v1h-2zM4 18h2v1h-2zM7 18h4v1h-4zM12 18h1v1h-1zM15 18h1v1h-1zM17 18h4v1h-4zM22 18h2v1h-2zM25 18h3v1h-3zM29 18h1v1h-1zM33 18h7v1h-7zM41 18h3v1h-3zM46 18h1v1h-1zM48 18h2v1h-2zM52 18h1v1h-1zM62 18h3v1h-3zM68 18h1v1h-1zM70 18h1v1h-1zM72 18h1v1h-1zM76 18h2v1h-2zM80 18h3v1h-3zM90 18h1v1h-1zM97 18h1v1h-1zM100 18h1v1h-1zM105 18h1v1h-1zM107 18h1v1h-1zM110 18h2v1h-2zM116 18h1v1h-1zM119 18h2v1h-2zM122 18h2v1h-2zM125 18h1v1h-1zM128 18h6v1h-6zM136 18h1v1h-1zM138 18h2v1h-2zM141 18h3v1h-3zM145 18h5v1h-5zM151 18h6v1h-6zM158 18h4v1h-4zM163 18h2v1h-2zM166 18h1v1h-1zM168 18h1v1h-1zM179 18h1v1h-1zM182 18h1v1h-1zM186 18h1v1h-1zM188 18h2v1h-2zM191 18h1v1h-1zM272 18h7v1h-7zM280 18h1v1h-1zM282 18h3v1h-3zM288 18h2v1h-2zM193 19h2v1h-2zM197 19h1v1h-1zM199 19h4v1h-4zM204 19h1v1h-1zM208 19h4v1h-4zM213 19h2v1h-2zM217 19h1v1h-1zM219 19h1v1h-1zM225 19h3v1h-3zM230 19h1v1h-1zM232 19h2v1h-2zM236 19h1v1h-1zM241 19h1v1h-1zM245 19h1v1h-1zM250 19h3v1h-3zM255 19h1v1h-1zM258 19h2v1h-2zM271 19h1v1h-1zM275 19h1v1h-1zM10 20h1v1h-1zM12 20h1v1h-1zM27 20h1v1h-1zM36 20h1v1h-1zM41 20h1v1h-1zM44 20h1v1h-1zM50 20h1v1h-1zM56 20h1v1h-1zM60 20h1v1h-1zM66 20h1v1h-1zM82 20h1v1h-1zM85 20h1v1h-1zM91 20h2v1h-2zM97 20h1v1h-1zM105 20h1v1h-1zM109 20h1v1h-1zM115 20h1v1h-1zM119 20h1v1h-1zM126 20h1v1h-1zM132 20h1v1h-1zM140 20h1v1h-1zM145 20h1v1h-1zM161 20h2v1h-2zM164 20h1v1h-1zM269 20h1v1h-1zM271 20h2v1h-2zM274 20h3v1h-3zM279 20h3v1h-3zM283 20h1v1h-1zM286 20h2v1h-2zM289 20h1v1h-1zM292 20h5v1h-5zM298 20h1v1h-1zM84 21h1v1h-1zM86 21h1v1h-1zM89 21h1v1h-1zM91 21h1v1h-1zM93 21h1v1h-1zM96 21h1v1h-1zM98 21h1v1h-1zM101 21h1v1h-1zM103 21h1v1h-1zM105 21h1v1h-1zM109 21h1v1h-1zM168 21h1v1h-1zM217 21h2v1h-2zM220 21h1v1h-1zM231 21h1v1h-1zM240 21h1v1h-1zM242 21h1v1h-1zM246 21h2v1h-2zM261 21h1v1h-1zM260 22h1v1h-1zM271 22h1v1h-1zM276 22h1v1h-1zM282 22h1v1h-1zM259 23h2v1h-2zM272 23h1v1h-1zM274 23h2v1h-2zM277 23h1v1h-1zM279 23h2v1h-2zM284 23h1v1h-1zM188 24h1v1h-1zM190 24h1v1h-1zM277 24h2v1h-2zM280 24h2v1h-2zM283 24h2v1h-2zM286 24h1v1h-1zM189 25h1v1h-1zM278 25h1v1h-1zM283 25h1v1h-1zM285 25h3v1h-3zM114 26h1v1h-1zM259 26h2v1h-2zM280 26h2v1h-2zM283 26h1v1h-1zM286 26h4v1h-4zM35 27h1v1h-1zM107 27h1v1h-1zM110 27h1v1h-1zM112 27h1v1h-1zM186 27h1v1h-1zM189 27h2v1h-2zM193 27h1v1h-1zM259 27h1v1h-1zM284 27h3v1h-3zM300 27h9v1h-9zM310 27h1v1h-1zM313 27h1v1h-1zM316 27h4v1h-4zM188 28h2v1h-2zM259 28h1v1h-1zM288 28h2v1h-2zM25 29h2v1h-2zM28 29h2v1h-2zM285 29h1v1h-1zM319 29h2v1h-2zM322 29h1v1h-1zM187 30h1v1h-1zM282 30h1v1h-1zM284 30h1v1h-1zM286 30h1v1h-1zM26 31h4v1h-4zM36 31h1v1h-1zM38 31h1v1h-1zM82 31h1v1h-1zM85 31h1v1h-1zM134 31h4v1h-4zM139 31h1v1h-1zM141 31h1v1h-1zM154 31h1v1h-1zM167 31h1v1h-1zM169 31h1v1h-1zM189 31h1v1h-1zM214 31h1v1h-1zM220 31h3v1h-3zM225 31h1v1h-1zM227 31h1v1h-1zM229 31h1v1h-1zM235 31h1v1h-1zM243 31h2v1h-2zM246 31h2v1h-2zM268 31h2v1h-2zM272 31h7v1h-7zM280 31h1v1h-1zM324 31h2v1h-2zM186 32h1v1h-1zM188 32h1v1h-1zM257 32h1v1h-1zM284 32h1v1h-1zM278 33h1v1h-1zM280 33h1v1h-1zM282 33h1v1h-1zM90 34h3v1h-3zM187 34h1v1h-1zM258 34h1v1h-1zM280 34h1v1h-1zM282 34h6v1h-6zM2 35h4v1h-4zM199 35h2v1h-2zM202 35h4v1h-4zM207 35h2v1h-2zM256 35h1v1h-1zM280 35h1v1h-1zM256 36h1v1h-1zM277 36h1v1h-1zM280 36h2v1h-2zM287 36h2v1h-2zM186 37h2v1h-2zM277 37h1v1h-1zM279 37h3v1h-3zM283 37h2v1h-2zM256 38h1v1h-1zM275 38h1v1h-1zM277 38h1v1h-1zM281 38h1v1h-1zM276 39h4v1h-4zM255 40h1v1h-1zM278 40h2v1h-2zM187 41h1v1h-1zM255 41h2v1h-2zM277 42h3v1h-3zM187 43h1v1h-1zM276 43h2v1h-2zM279 43h1v1h-1zM255 44h1v1h-1zM275 44h1v1h-1zM278 44h1v1h-1zM185 45h1v1h-1zM187 45h1v1h-1zM255 45h1v1h-1zM273 45h2v1h-2zM276 45h1v1h-1zM185 46h1v1h-1zM188 46h1v1h-1zM255 46h1v1h-1zM271 46h1v1h-1zM273 46h1v1h-1zM275 46h2v1h-2zM255 47h1v1h-1zM269 47h1v1h-1zM271 47h1v1h-1zM275 47h1v1h-1zM186 48h1v1h-1zM266 48h1v1h-1zM268 48h4v1h-4zM273 48h1v1h-1zM254 49h1v1h-1zM265 49h1v1h-1zM185 50h1v1h-1zM254 50h1v1h-1zM261 50h1v1h-1zM266 50h1v1h-1zM269 50h2v1h-2zM185 51h1v1h-1zM254 51h1v1h-1zM261 51h2v1h-2zM265 51h2v1h-2zM268 51h1v1h-1zM185 52h1v1h-1zM254 52h1v1h-1zM262 52h1v1h-1zM265 52h3v1h-3zM269 52h1v1h-1zM186 53h1v1h-1zM265 53h1v1h-1zM267 53h1v1h-1zM184 54h1v1h-1zM254 54h1v1h-1zM263 54h2v1h-2zM266 54h1v1h-1zM254 55h1v1h-1zM262 55h2v1h-2zM184 56h3v1h-3zM261 56h5v1h-5zM254 57h1v1h-1zM261 57h2v1h-2zM185 58h1v1h-1zM254 58h1v1h-1zM262 58h1v1h-1zM264 58h1v1h-1zM183 59h1v1h-1zM263 59h1v1h-1zM261 60h2v1h-2zM183 61h1v1h-1zM259 61h4v1h-4zM183 62h2v1h-2zM261 62h2v1h-2zM254 63h1v1h-1zM260 63h1v1h-1zM259 64h1v1h-1zM182 66h1v1h-1zM184 66h2v1h-2zM260 66h1v1h-1zM183 67h1v1h-1zM253 68h1v1h-1zM182 70h1v1h-1zM184 70h1v1h-1zM183 71h1v1h-1zM259 71h1v1h-1zM184 72h1v1h-1zM253 72h1v1h-1zM180 73h1v1h-1zM182 73h1v1h-1zM253 73h1v1h-1zM181 74h2v1h-2zM252 74h2v1h-2zM182 75h2v1h-2zM252 75h1v1h-1zM258 75h1v1h-1zM180 76h1v1h-1zM253 77h1v1h-1zM181 78h2v1h-2zM252 78h1v1h-1zM252 79h1v1h-1zM184 80h1v1h-1zM252 80h1v1h-1zM180 81h1v1h-1zM183 81h1v1h-1zM182 82h1v1h-1zM259 82h1v1h-1zM252 83h1v1h-1zM182 84h1v1h-1zM252 84h1v1h-1zM252 86h1v1h-1zM180 87h2v1h-2zM251 87h1v1h-1zM257 87h1v1h-1zM178 89h2v1h-2zM252 89h1v1h-1zM180 92h1v1h-1zM251 92h2v1h-2zM180 93h1v1h-1zM251 93h1v1h-1zM178 94h1v1h-1zM181 94h1v1h-1zM251 94h1v1h-1zM182 95h1v1h-1zM251 96h1v1h-1zM178 97h1v1h-1zM251 97h1v1h-1zM251 98h1v1h-1zM179 99h2v1h-2zM251 99h1v1h-1zM256 100h1v1h-1zM178 101h4v1h-4zM251 101h1v1h-1zM179 102h3v1h-3zM179 103h2v1h-2zM182 103h1v1h-1zM177 104h1v1h-1zM251 104h1v1h-1zM177 106h4v1h-4zM250 106h1v1h-1zM177 107h1v1h-1zM179 107h2v1h-2zM250 107h1v1h-1zM180 108h1v1h-1zM250 108h1v1h-1zM181 109h1v1h-1zM251 109h1v1h-1zM179 110h1v1h-1zM250 111h1v1h-1zM181 112h1v1h-1zM250 112h1v1h-1zM179 113h1v1h-1zM250 113h1v1h-1zM250 114h1v1h-1zM250 116h1v1h-1zM250 117h1v1h-1zM250 118h1v1h-1zM250 119h1v1h-1zM250 122h1v1h-1zM251 123h1v1h-1zM279 126h1v1h-1zM251 127h1v1h-1zM283 127h1v1h-1zM137 128h1v1h-1zM150 128h1v1h-1zM251 128h1v1h-1zM283 129h1v1h-1zM251 130h1v1h-1zM279 130h1v1h-1zM2 131h2v1h-2zM114 131h1v1h-1zM137 131h1v1h-1zM150 131h1v1h-1zM252 131h1v1h-1zM283 131h1v1h-1zM322 131h1v1h-1zM6 132h1v1h-1zM19 132h2v1h-2zM32 132h1v1h-1zM150 132h1v1h-1zM159 132h1v1h-1zM192 132h1v1h-1zM252 132h3v1h-3zM283 132h1v1h-1zM304 132h1v1h-1zM38 133h1v1h-1zM40 133h1v1h-1zM59 133h1v1h-1zM66 133h1v1h-1zM137 133h1v1h-1zM192 133h1v1h-1zM283 133h1v1h-1zM304 133h1v1h-1zM74 134h1v1h-1zM179 134h1v1h-1zM192 134h1v1h-1zM253 134h1v1h-1zM255 134h1v1h-1zM279 134h1v1h-1zM322 134h1v1h-1zM18 135h1v1h-1zM240 135h1v1h-1zM283 135h1v1h-1zM304 135h1v1h-1zM100 136h1v1h-1zM240 136h1v1h-1zM254 136h1v1h-1zM104 137h1v1h-1zM110 137h1v1h-1zM150 137h1v1h-1zM172 137h1v1h-1zM179 137h1v1h-1zM254 137h1v1h-1zM304 137h1v1h-1zM118 138h2v1h-2zM179 138h1v1h-1zM192 138h1v1h-1zM254 138h1v1h-1zM304 138h1v1h-1zM322 138h1v1h-1zM126 139h1v1h-1zM254 139h1v1h-1zM326 139h1v1h-1zM14 140h1v1h-1zM19 140h1v1h-1zM138 140h1v1h-1zM142 140h1v1h-1zM150 140h1v1h-1zM179 140h1v1h-1zM192 140h1v1h-1zM240 140h1v1h-1zM244 140h1v1h-1zM30 141h1v1h-1zM48 141h1v1h-1zM52 141h1v1h-1zM60 141h1v1h-1zM146 141h1v1h-1zM152 141h4v1h-4zM179 141h1v1h-1zM81 142h1v1h-1zM192 142h1v1h-1zM175 143h1v1h-1zM244 143h1v1h-1zM150 144h1v1h-1zM179 144h1v1h-1zM187 144h1v1h-1zM189 144h1v1h-1zM240 144h1v1h-1zM104 145h1v1h-1zM179 145h1v1h-1zM199 145h1v1h-1zM244 145h1v1h-1zM159 146h1v1h-1zM240 146h1v1h-1zM150 147h1v1h-1zM172 147h1v1h-1zM153 148h1v1h-1zM159 148h1v1h-1zM172 149h1v1h-1zM192 149h1v1h-1zM304 149h1v1h-1zM172 150h1v1h-1zM172 151h1v1h-1zM172 157h1v1h-1zM172 158h1v1h-1zM192 158h1v1h-1zM192 175h1v1h-1zM192 176h1v1h-1zM33 177h1v1h-1zM33 178h1v1h-1z"/><path fill="#5200ad" d="M268 1h1v1h-1zM282 1h1v1h-1zM30 2h1v1h-1zM66 2h1v1h-1zM68 2h1v1h-1zM73 2h1v1h-1zM75 2h1v1h-1zM77 2h1v1h-1zM134 2h1v1h-1zM136 2h1v1h-1zM139 2h1v1h-1zM155 2h1v1h-1zM178 2h1v1h-1zM199 2h1v1h-1zM203 2h1v1h-1zM205 2h2v1h-2zM208 2h1v1h-1zM211 2h1v1h-1zM329 2h3v1h-3zM318 3h1v1h-1zM91 4h1v1h-1zM201 4h1v1h-1zM53 7h1v1h-1zM57 7h1v1h-1zM61 7h2v1h-2zM66 7h2v1h-2zM73 7h2v1h-2zM190 7h3v1h-3zM196 7h3v1h-3zM201 7h1v1h-1zM271 7h1v1h-1zM306 7h1v1h-1zM130 9h2v1h-2zM214 9h1v1h-1zM269 11h4v1h-4zM274 11h1v1h-1zM5 13h1v1h-1zM9 13h1v1h-1zM16 13h1v1h-1zM23 13h1v1h-1zM31 13h1v1h-1zM46 13h1v1h-1zM74 13h1v1h-1zM81 13h1v1h-1zM106 13h1v1h-1zM7 15h1v1h-1zM16 15h1v1h-1zM20 15h1v1h-1zM26 15h1v1h-1zM28 15h1v1h-1zM33 15h1v1h-1zM38 15h1v1h-1zM43 15h1v1h-1zM46 15h1v1h-1zM49 15h1v1h-1zM51 15h2v1h-2zM210 15h4v1h-4zM215 15h3v1h-3zM219 15h1v1h-1zM276 15h1v1h-1zM278 15h1v1h-1zM2 16h1v1h-1zM5 16h3v1h-3zM10 16h1v1h-1zM14 16h1v1h-1zM18 16h2v1h-2zM23 16h1v1h-1zM26 16h2v1h-2zM29 16h2v1h-2zM32 16h1v1h-1zM34 16h1v1h-1zM39 16h2v1h-2zM43 16h1v1h-1zM89 16h2v1h-2zM93 16h1v1h-1zM96 16h1v1h-1zM98 16h1v1h-1zM240 16h4v1h-4zM246 16h3v1h-3zM251 16h1v1h-1zM254 16h1v1h-1zM0 17h3v1h-3zM4 17h1v1h-1zM7 17h2v1h-2zM12 17h1v1h-1zM15 17h1v1h-1zM17 17h1v1h-1zM24 17h1v1h-1zM26 17h2v1h-2zM31 17h1v1h-1zM39 17h1v1h-1zM41 17h2v1h-2zM44 17h1v1h-1zM46 17h2v1h-2zM70 17h1v1h-1zM81 17h2v1h-2zM130 17h2v1h-2zM133 17h3v1h-3zM138 17h1v1h-1zM140 17h1v1h-1zM146 17h4v1h-4zM159 17h1v1h-1zM161 17h1v1h-1zM165 17h1v1h-1zM169 17h1v1h-1zM173 17h1v1h-1zM176 17h1v1h-1zM180 17h1v1h-1zM182 17h1v1h-1zM184 17h1v1h-1zM189 17h1v1h-1zM3 18h1v1h-1zM28 18h1v1h-1zM55 18h1v1h-1zM57 18h5v1h-5zM65 18h3v1h-3zM69 18h1v1h-1zM71 18h1v1h-1zM73 18h2v1h-2zM78 18h1v1h-1zM83 18h1v1h-1zM87 18h3v1h-3zM91 18h2v1h-2zM94 18h1v1h-1zM96 18h1v1h-1zM99 18h1v1h-1zM101 18h2v1h-2zM104 18h1v1h-1zM106 18h1v1h-1zM108 18h1v1h-1zM144 18h1v1h-1zM162 18h1v1h-1zM167 18h1v1h-1zM171 18h1v1h-1zM184 18h1v1h-1zM190 18h1v1h-1zM192 19h1v1h-1zM195 19h1v1h-1zM205 19h1v1h-1zM207 19h1v1h-1zM212 19h1v1h-1zM215 19h1v1h-1zM218 19h1v1h-1zM228 19h2v1h-2zM234 19h2v1h-2zM237 19h4v1h-4zM242 19h3v1h-3zM246 19h4v1h-4zM253 19h1v1h-1zM256 19h1v1h-1zM260 19h1v1h-1zM133 20h1v1h-1zM288 20h1v1h-1zM85 21h1v1h-1zM88 21h1v1h-1zM90 21h1v1h-1zM92 21h1v1h-1zM94 21h1v1h-1zM97 21h1v1h-1zM99 21h1v1h-1zM102 21h1v1h-1zM104 21h1v1h-1zM106 21h3v1h-3zM211 21h1v1h-1zM216 21h1v1h-1zM236 21h3v1h-3zM262 21h6v1h-6zM319 21h4v1h-4zM325 21h1v1h-1zM327 21h1v1h-1zM268 22h3v1h-3zM272 22h2v1h-2zM283 22h1v1h-1zM269 23h2v1h-2zM273 23h1v1h-1zM276 23h1v1h-1zM278 23h1v1h-1zM281 23h1v1h-1zM282 24h1v1h-1zM287 24h1v1h-1zM276 25h2v1h-2zM279 25h4v1h-4zM279 26h1v1h-1zM282 26h1v1h-1zM284 26h2v1h-2zM116 27h2v1h-2zM187 27h1v1h-1zM191 27h2v1h-2zM194 27h3v1h-3zM283 27h1v1h-1zM309 27h1v1h-1zM311 27h1v1h-1zM314 27h2v1h-2zM320 27h1v1h-1zM283 28h5v1h-5zM280 29h5v1h-5zM283 30h1v1h-1zM34 31h2v1h-2zM42 31h2v1h-2zM83 31h1v1h-1zM188 31h1v1h-1zM219 31h1v1h-1zM224 31h1v1h-1zM228 31h1v1h-1zM232 31h1v1h-1zM239 31h1v1h-1zM245 31h1v1h-1zM259 31h1v1h-1zM264 31h2v1h-2zM267 31h1v1h-1zM271 31h1v1h-1zM279 31h1v1h-1zM278 32h5v1h-5zM279 33h1v1h-1zM281 33h1v1h-1zM147 34h1v1h-1zM281 34h1v1h-1zM1 35h1v1h-1zM277 35h3v1h-3zM281 35h1v1h-1zM283 35h1v1h-1zM314 35h2v1h-2zM317 35h3v1h-3zM321 35h1v1h-1zM323 35h2v1h-2zM137 36h4v1h-4zM142 36h1v1h-1zM278 36h2v1h-2zM282 36h4v1h-4zM275 37h1v1h-1zM278 37h1v1h-1zM286 37h1v1h-1zM276 38h1v1h-1zM278 38h2v1h-2zM264 39h1v1h-1zM267 39h1v1h-1zM270 39h2v1h-2zM273 39h1v1h-1zM275 39h1v1h-1zM276 40h2v1h-2zM276 41h3v1h-3zM276 42h1v1h-1zM278 43h1v1h-1zM276 44h2v1h-2zM271 45h2v1h-2zM275 45h1v1h-1zM270 46h1v1h-1zM272 46h1v1h-1zM267 47h2v1h-2zM270 47h1v1h-1zM272 47h3v1h-3zM264 48h2v1h-2zM267 48h1v1h-1zM264 49h1v1h-1zM266 49h1v1h-1zM271 49h1v1h-1zM263 50h3v1h-3zM260 51h1v1h-1zM263 51h2v1h-2zM267 51h1v1h-1zM269 51h1v1h-1zM261 52h1v1h-1zM263 52h2v1h-2zM260 53h5v1h-5zM260 54h3v1h-3zM185 55h1v1h-1zM260 55h2v1h-2zM265 55h1v1h-1zM260 56h1v1h-1zM260 58h2v1h-2zM261 59h2v1h-2zM260 60h1v1h-1zM184 61h1v1h-1zM259 62h2v1h-2zM259 63h1v1h-1zM260 64h1v1h-1zM259 65h2v1h-2zM259 66h1v1h-1zM259 67h2v1h-2zM259 68h1v1h-1zM183 69h1v1h-1zM259 69h1v1h-1zM258 70h1v1h-1zM182 72h1v1h-1zM182 79h1v1h-1zM182 80h2v1h-2zM179 95h1v1h-1zM181 95h1v1h-1zM178 112h2v1h-2zM252 128h1v1h-1zM254 128h1v1h-1zM252 129h3v1h-3zM254 130h1v1h-1zM253 131h3v1h-3zM254 133h2v1h-2z"/><path fill="#990066" d="M94 2h2v1h-2zM98 2h1v1h-1zM137 2h1v1h-1zM141 2h1v1h-1zM144 2h1v1h-1zM185 2h5v1h-5zM191 2h3v1h-3zM195 2h1v1h-1zM197 2h1v1h-1zM204 2h1v1h-1zM207 2h1v1h-1zM209 2h2v1h-2zM212 2h1v1h-1zM293 2h5v1h-5zM299 2h2v1h-2zM200 4h1v1h-1zM202 4h3v1h-3zM328 4h1v1h-1zM119 5h1v1h-1zM1 7h1v1h-1zM48 7h1v1h-1zM51 7h2v1h-2zM54 7h1v1h-1zM56 7h1v1h-1zM63 7h2v1h-2zM193 7h3v1h-3zM199 7h2v1h-2zM269 7h2v1h-2zM272 7h1v1h-1zM138 8h1v1h-1zM147 8h1v1h-1zM149 8h1v1h-1zM153 8h1v1h-1zM254 9h2v1h-2zM273 11h1v1h-1zM104 13h1v1h-1zM107 13h3v1h-3zM189 13h1v1h-1zM282 13h1v1h-1zM285 13h1v1h-1zM296 14h2v1h-2zM299 14h4v1h-4zM214 15h1v1h-1zM72 17h8v1h-8zM84 17h1v1h-1zM54 18h1v1h-1zM79 18h1v1h-1zM84 18h3v1h-3zM95 18h1v1h-1zM103 18h1v1h-1zM193 18h1v1h-1zM196 18h1v1h-1zM199 18h5v1h-5zM205 18h1v1h-1zM207 18h1v1h-1zM209 18h1v1h-1zM219 18h1v1h-1zM2 19h1v1h-1zM6 19h2v1h-2zM13 19h1v1h-1zM16 19h1v1h-1zM35 19h3v1h-3zM41 19h2v1h-2zM29 21h3v1h-3zM34 21h4v1h-4zM40 21h1v1h-1zM42 21h1v1h-1zM209 21h2v1h-2zM239 21h1v1h-1zM323 21h2v1h-2zM326 21h1v1h-1zM328 21h1v1h-1zM277 22h5v1h-5zM285 22h2v1h-2zM268 23h1v1h-1zM271 23h1v1h-1zM276 24h1v1h-1zM279 24h1v1h-1zM273 25h1v1h-1zM275 25h1v1h-1zM278 26h1v1h-1zM118 27h1v1h-1zM268 27h1v1h-1zM272 27h1v1h-1zM277 27h2v1h-2zM280 27h1v1h-1zM282 27h1v1h-1zM267 28h1v1h-1zM271 28h1v1h-1zM275 28h3v1h-3zM281 28h1v1h-1zM267 29h1v1h-1zM269 29h1v1h-1zM278 29h1v1h-1zM266 30h1v1h-1zM268 30h1v1h-1zM271 30h2v1h-2zM275 30h1v1h-1zM277 30h1v1h-1zM279 30h1v1h-1zM40 31h2v1h-2zM285 31h1v1h-1zM267 32h1v1h-1zM272 32h1v1h-1zM275 32h3v1h-3zM272 33h1v1h-1zM276 33h1v1h-1zM142 34h2v1h-2zM146 34h1v1h-1zM148 34h2v1h-2zM265 34h1v1h-1zM271 34h2v1h-2zM274 34h1v1h-1zM279 34h1v1h-1zM72 35h1v1h-1zM265 35h1v1h-1zM269 35h1v1h-1zM272 35h1v1h-1zM274 35h1v1h-1zM320 35h1v1h-1zM136 36h1v1h-1zM141 36h1v1h-1zM264 36h1v1h-1zM276 36h1v1h-1zM265 37h1v1h-1zM269 37h1v1h-1zM271 37h1v1h-1zM276 37h1v1h-1zM270 38h1v1h-1zM272 38h3v1h-3zM262 39h2v1h-2zM265 39h2v1h-2zM268 39h2v1h-2zM272 39h1v1h-1zM274 39h1v1h-1zM263 40h1v1h-1zM269 40h3v1h-3zM275 40h1v1h-1zM265 41h4v1h-4zM270 41h1v1h-1zM273 41h1v1h-1zM263 42h1v1h-1zM268 42h2v1h-2zM275 42h1v1h-1zM263 43h1v1h-1zM270 43h1v1h-1zM275 43h1v1h-1zM263 44h1v1h-1zM266 44h1v1h-1zM271 44h1v1h-1zM184 45h1v1h-1zM263 45h1v1h-1zM269 45h1v1h-1zM262 46h1v1h-1zM265 46h1v1h-1zM187 47h1v1h-1zM262 47h2v1h-2zM261 49h3v1h-3zM262 50h1v1h-1zM260 52h1v1h-1zM260 57h1v1h-1zM187 58h1v1h-1zM260 59h1v1h-1zM180 78h1v1h-1zM183 84h1v1h-1zM184 88h1v1h-1zM181 89h1v1h-1zM181 91h1v1h-1zM178 104h1v1h-1zM252 126h2v1h-2zM254 127h2v1h-2zM253 128h1v1h-1zM255 129h1v1h-1zM252 130h2v1h-2zM255 130h1v1h-1z"/><path fill="#e0001f" d="M184 2h1v1h-1zM198 2h1v1h-1zM302 2h1v1h-1zM315 2h1v1h-1zM317 2h1v1h-1zM321 2h2v1h-2zM324 2h1v1h-1zM114 5h1v1h-1zM116 5h1v1h-1zM0 7h1v1h-1zM2 7h3v1h-3zM136 8h2v1h-2zM139 8h5v1h-5zM145 8h2v1h-2zM148 8h1v1h-1zM150 8h2v1h-2zM250 9h4v1h-4zM68 13h2v1h-2zM105 13h1v1h-1zM110 13h1v1h-1zM283 13h2v1h-2zM286 13h4v1h-4zM298 14h1v1h-1zM67 16h1v1h-1zM70 16h2v1h-2zM74 16h2v1h-2zM77 16h2v1h-2zM80 16h1v1h-1zM236 16h1v1h-1zM195 17h1v1h-1zM199 17h1v1h-1zM205 17h1v1h-1zM210 17h1v1h-1zM194 18h2v1h-2zM197 18h2v1h-2zM204 18h1v1h-1zM208 18h1v1h-1zM210 18h9v1h-9zM0 19h2v1h-2zM4 19h2v1h-2zM8 19h5v1h-5zM14 19h2v1h-2zM17 19h1v1h-1zM20 19h2v1h-2zM23 19h1v1h-1zM25 19h1v1h-1zM30 19h1v1h-1zM33 19h1v1h-1zM38 19h3v1h-3zM28 21h1v1h-1zM32 21h2v1h-2zM38 21h2v1h-2zM41 21h1v1h-1zM274 22h2v1h-2zM269 24h2v1h-2zM272 24h2v1h-2zM271 25h1v1h-1zM274 25h1v1h-1zM270 26h1v1h-1zM272 26h1v1h-1zM274 26h3v1h-3zM267 27h1v1h-1zM274 27h2v1h-2zM279 27h1v1h-1zM281 27h1v1h-1zM272 28h2v1h-2zM278 28h1v1h-1zM280 28h1v1h-1zM273 29h3v1h-3zM267 30h1v1h-1zM276 30h1v1h-1zM278 30h1v1h-1zM44 31h1v1h-1zM48 31h1v1h-1zM51 31h1v1h-1zM171 31h1v1h-1zM226 31h1v1h-1zM260 31h4v1h-4zM286 31h1v1h-1zM288 31h2v1h-2zM294 31h2v1h-2zM268 32h1v1h-1zM273 32h1v1h-1zM264 33h1v1h-1zM267 33h4v1h-4zM273 33h2v1h-2zM144 34h2v1h-2zM188 34h1v1h-1zM267 34h2v1h-2zM273 34h1v1h-1zM275 34h1v1h-1zM277 34h1v1h-1zM66 35h3v1h-3zM73 35h1v1h-1zM75 35h1v1h-1zM77 35h2v1h-2zM180 35h2v1h-2zM264 35h1v1h-1zM268 35h1v1h-1zM270 35h1v1h-1zM273 35h1v1h-1zM276 35h1v1h-1zM265 36h2v1h-2zM268 36h1v1h-1zM270 36h3v1h-3zM264 37h1v1h-1zM266 37h1v1h-1zM263 38h2v1h-2zM268 38h2v1h-2zM271 38h1v1h-1zM257 39h1v1h-1zM265 40h3v1h-3zM272 40h1v1h-1zM274 40h1v1h-1zM269 41h1v1h-1zM271 41h1v1h-1zM275 41h1v1h-1zM264 42h2v1h-2zM270 42h2v1h-2zM274 42h1v1h-1zM264 43h4v1h-4zM272 43h2v1h-2zM186 44h1v1h-1zM265 44h1v1h-1zM268 44h3v1h-3zM272 44h2v1h-2zM266 45h1v1h-1zM263 46h2v1h-2zM269 46h1v1h-1zM185 47h1v1h-1zM264 47h3v1h-3zM261 48h2v1h-2zM186 49h1v1h-1zM186 55h1v1h-1zM186 57h1v1h-1zM256 73h1v1h-1zM254 74h2v1h-2zM257 74h1v1h-1zM256 76h1v1h-1zM183 82h1v1h-1zM179 84h1v1h-1zM178 85h1v1h-1zM180 86h1v1h-1zM180 88h1v1h-1zM182 88h1v1h-1zM181 90h1v1h-1zM178 91h1v1h-1zM180 91h1v1h-1zM183 91h1v1h-1zM252 95h1v1h-1zM252 96h1v1h-1zM178 103h1v1h-1zM176 104h1v1h-1zM252 114h1v1h-1zM251 115h1v1h-1zM251 116h2v1h-2zM251 117h1v1h-1zM253 117h1v1h-1zM251 118h1v1h-1zM253 118h2v1h-2zM251 119h2v1h-2zM178 120h1v1h-1zM253 120h2v1h-2zM253 121h2v1h-2zM252 122h2v1h-2zM253 123h2v1h-2zM254 124h1v1h-1zM253 125h3v1h-3zM254 126h1v1h-1zM252 127h2v1h-2z"/><path fill="#ff1f00" d="M69 2h1v1h-1zM74 2h1v1h-1zM87 2h1v1h-1zM158 2h5v1h-5zM190 2h1v1h-1zM196 2h1v1h-1zM201 2h2v1h-2zM268 2h3v1h-3zM272 2h3v1h-3zM298 2h1v1h-1zM316 2h1v1h-1zM318 2h1v1h-1zM320 2h1v1h-1zM330 4h1v1h-1zM115 5h1v1h-1zM117 5h1v1h-1zM209 6h4v1h-4zM8 7h1v1h-1zM131 7h1v1h-1zM133 7h2v1h-2zM202 7h1v1h-1zM6 9h1v1h-1zM28 9h1v1h-1zM38 9h1v1h-1zM40 9h8v1h-8zM109 9h1v1h-1zM168 9h1v1h-1zM238 9h1v1h-1zM243 9h1v1h-1zM247 9h1v1h-1zM280 11h4v1h-4zM60 13h3v1h-3zM67 13h1v1h-1zM208 15h1v1h-1zM218 15h1v1h-1zM230 15h1v1h-1zM63 16h4v1h-4zM72 16h2v1h-2zM76 16h1v1h-1zM79 16h1v1h-1zM81 16h1v1h-1zM83 16h1v1h-1zM234 16h2v1h-2zM237 16h3v1h-3zM257 16h1v1h-1zM49 17h1v1h-1zM51 17h1v1h-1zM55 17h2v1h-2zM59 17h2v1h-2zM62 17h1v1h-1zM64 17h1v1h-1zM66 17h2v1h-2zM69 17h1v1h-1zM122 17h1v1h-1zM193 17h1v1h-1zM196 17h3v1h-3zM200 17h1v1h-1zM203 17h2v1h-2zM206 17h3v1h-3zM213 17h2v1h-2zM216 17h2v1h-2zM18 19h2v1h-2zM22 19h1v1h-1zM24 19h1v1h-1zM26 19h2v1h-2zM31 19h2v1h-2zM34 19h1v1h-1zM117 19h4v1h-4zM123 19h1v1h-1zM128 19h1v1h-1zM136 19h1v1h-1zM148 19h1v1h-1zM150 19h1v1h-1zM154 19h5v1h-5zM212 21h1v1h-1zM329 21h1v1h-1zM261 22h1v1h-1zM261 24h1v1h-1zM271 24h1v1h-1zM274 24h2v1h-2zM268 25h3v1h-3zM272 25h1v1h-1zM123 26h1v1h-1zM126 26h4v1h-4zM268 26h2v1h-2zM271 26h1v1h-1zM273 26h1v1h-1zM277 26h1v1h-1zM111 27h1v1h-1zM188 27h1v1h-1zM260 27h1v1h-1zM269 27h3v1h-3zM273 27h1v1h-1zM276 27h1v1h-1zM268 28h3v1h-3zM274 28h1v1h-1zM279 28h1v1h-1zM282 28h1v1h-1zM189 29h1v1h-1zM259 29h1v1h-1zM266 29h1v1h-1zM268 29h1v1h-1zM270 29h3v1h-3zM276 29h2v1h-2zM279 29h1v1h-1zM260 30h1v1h-1zM269 30h2v1h-2zM273 30h2v1h-2zM280 30h2v1h-2zM11 31h1v1h-1zM24 31h1v1h-1zM46 31h2v1h-2zM50 31h1v1h-1zM170 31h1v1h-1zM172 31h1v1h-1zM198 31h1v1h-1zM240 31h1v1h-1zM292 31h2v1h-2zM296 31h1v1h-1zM266 32h1v1h-1zM269 32h3v1h-3zM274 32h1v1h-1zM258 33h1v1h-1zM263 33h1v1h-1zM265 33h2v1h-2zM271 33h1v1h-1zM275 33h1v1h-1zM277 33h1v1h-1zM266 34h1v1h-1zM269 34h2v1h-2zM276 34h1v1h-1zM278 34h1v1h-1zM70 35h2v1h-2zM182 35h1v1h-1zM213 35h1v1h-1zM257 35h1v1h-1zM266 35h2v1h-2zM271 35h1v1h-1zM275 35h1v1h-1zM316 35h1v1h-1zM322 35h1v1h-1zM267 36h1v1h-1zM269 36h1v1h-1zM267 37h2v1h-2zM270 37h1v1h-1zM272 37h3v1h-3zM265 38h3v1h-3zM264 40h1v1h-1zM268 40h1v1h-1zM273 40h1v1h-1zM263 41h2v1h-2zM272 41h1v1h-1zM274 41h1v1h-1zM266 42h2v1h-2zM272 42h2v1h-2zM256 43h1v1h-1zM262 43h1v1h-1zM268 43h2v1h-2zM271 43h1v1h-1zM274 43h1v1h-1zM262 44h1v1h-1zM264 44h1v1h-1zM267 44h1v1h-1zM274 44h1v1h-1zM264 45h2v1h-2zM267 45h2v1h-2zM270 45h1v1h-1zM266 46h3v1h-3zM186 47h1v1h-1zM263 48h1v1h-1zM255 50h1v1h-1zM260 50h1v1h-1zM255 54h1v1h-1zM259 57h1v1h-1zM255 60h1v1h-1zM256 61h3v1h-3zM255 62h2v1h-2zM257 63h1v1h-1zM258 65h1v1h-1zM254 67h1v1h-1zM255 72h4v1h-4zM254 73h2v1h-2zM254 75h1v1h-1zM256 75h2v1h-2zM255 76h1v1h-1zM257 76h1v1h-1zM254 77h4v1h-4zM253 78h2v1h-2zM253 79h1v1h-1zM257 80h1v1h-1zM253 85h1v1h-1zM256 85h1v1h-1zM179 87h1v1h-1zM252 87h1v1h-1zM256 87h1v1h-1zM252 88h1v1h-1zM253 94h1v1h-1zM255 94h1v1h-1zM254 95h2v1h-2zM253 96h2v1h-2zM252 97h1v1h-1zM254 97h1v1h-1zM252 98h1v1h-1zM254 98h3v1h-3zM253 99h1v1h-1zM255 99h1v1h-1zM255 100h1v1h-1zM251 102h1v1h-1zM251 108h1v1h-1zM181 110h1v1h-1zM251 112h1v1h-1zM251 114h1v1h-1zM253 114h2v1h-2zM252 115h3v1h-3zM180 116h1v1h-1zM253 116h2v1h-2zM252 117h1v1h-1zM254 117h1v1h-1zM252 118h1v1h-1zM253 119h2v1h-2zM252 120h1v1h-1zM251 121h2v1h-2zM251 122h1v1h-1zM254 122h1v1h-1zM252 123h1v1h-1zM252 124h2v1h-2zM252 125h1v1h-1zM304 134h1v1h-1zM179 135h1v1h-1zM244 135h1v1h-1zM322 135h1v1h-1zM326 135h1v1h-1zM18 136h1v1h-1zM172 139h1v1h-1zM192 139h1v1h-1zM304 139h1v1h-1zM172 175h1v1h-1zM172 177h1v1h-1z"/><path fill="#ff5c00" d="M200 2h1v1h-1zM265 2h3v1h-3zM271 2h1v1h-1zM195 3h1v1h-1zM198 4h2v1h-2zM208 6h1v1h-1zM219 6h2v1h-2zM27 7h3v1h-3zM130 7h1v1h-1zM132 7h1v1h-1zM135 7h2v1h-2zM20 8h1v1h-1zM134 8h2v1h-2zM39 9h1v1h-1zM48 9h1v1h-1zM100 9h1v1h-1zM104 9h1v1h-1zM113 9h1v1h-1zM236 9h1v1h-1zM240 9h2v1h-2zM244 9h1v1h-1zM248 9h2v1h-2zM46 11h1v1h-1zM48 11h1v1h-1zM63 13h4v1h-4zM14 15h1v1h-1zM224 15h1v1h-1zM307 15h1v1h-1zM48 17h1v1h-1zM50 17h1v1h-1zM52 17h3v1h-3zM57 17h2v1h-2zM61 17h1v1h-1zM63 17h1v1h-1zM65 17h1v1h-1zM68 17h1v1h-1zM88 17h3v1h-3zM93 17h3v1h-3zM99 17h2v1h-2zM105 17h1v1h-1zM107 17h1v1h-1zM109 17h4v1h-4zM115 17h1v1h-1zM123 17h4v1h-4zM128 17h1v1h-1zM192 17h1v1h-1zM209 17h1v1h-1zM212 17h1v1h-1zM218 17h2v1h-2zM263 18h1v1h-1zM269 18h2v1h-2zM28 19h2v1h-2zM116 19h1v1h-1zM121 19h2v1h-2zM126 19h2v1h-2zM130 19h1v1h-1zM132 19h1v1h-1zM135 19h1v1h-1zM137 19h1v1h-1zM139 19h4v1h-4zM144 19h1v1h-1zM146 19h1v1h-1zM149 19h1v1h-1zM151 19h3v1h-3zM263 19h1v1h-1zM262 20h1v1h-1zM268 20h1v1h-1zM264 22h1v1h-1zM267 22h1v1h-1zM261 23h1v1h-1zM267 23h1v1h-1zM265 24h1v1h-1zM267 24h2v1h-2zM261 25h1v1h-1zM267 25h1v1h-1zM110 26h1v1h-1zM125 26h1v1h-1zM261 26h1v1h-1zM267 26h1v1h-1zM264 27h1v1h-1zM266 27h1v1h-1zM260 28h3v1h-3zM266 28h1v1h-1zM262 29h2v1h-2zM265 29h1v1h-1zM262 30h1v1h-1zM8 31h2v1h-2zM12 31h1v1h-1zM84 31h1v1h-1zM123 31h2v1h-2zM127 31h1v1h-1zM129 31h1v1h-1zM132 31h2v1h-2zM258 32h1v1h-1zM260 32h1v1h-1zM264 32h1v1h-1zM263 34h2v1h-2zM21 35h1v1h-1zM186 35h1v1h-1zM189 35h1v1h-1zM258 35h1v1h-1zM257 36h1v1h-1zM260 36h1v1h-1zM263 36h1v1h-1zM257 37h1v1h-1zM259 37h1v1h-1zM263 37h1v1h-1zM257 38h1v1h-1zM260 38h1v1h-1zM262 38h1v1h-1zM262 40h1v1h-1zM257 41h1v1h-1zM262 41h1v1h-1zM257 42h1v1h-1zM256 44h1v1h-1zM256 45h1v1h-1zM260 45h1v1h-1zM262 45h1v1h-1zM256 46h1v1h-1zM258 46h1v1h-1zM260 46h2v1h-2zM256 47h1v1h-1zM261 47h1v1h-1zM256 48h1v1h-1zM258 48h1v1h-1zM255 49h1v1h-1zM258 49h1v1h-1zM260 49h1v1h-1zM255 51h1v1h-1zM259 51h1v1h-1zM255 52h1v1h-1zM259 52h1v1h-1zM255 53h1v1h-1zM257 53h1v1h-1zM259 53h1v1h-1zM257 54h1v1h-1zM255 55h1v1h-1zM258 55h2v1h-2zM255 56h3v1h-3zM259 56h1v1h-1zM256 57h2v1h-2zM255 58h1v1h-1zM259 58h1v1h-1zM259 59h1v1h-1zM259 60h1v1h-1zM254 61h2v1h-2zM257 62h2v1h-2zM255 63h2v1h-2zM258 63h1v1h-1zM254 64h1v1h-1zM257 64h2v1h-2zM255 65h1v1h-1zM254 66h1v1h-1zM256 66h1v1h-1zM258 66h1v1h-1zM255 67h1v1h-1zM258 67h1v1h-1zM254 68h1v1h-1zM255 69h2v1h-2zM258 69h1v1h-1zM255 70h1v1h-1zM257 71h2v1h-2zM254 72h1v1h-1zM257 73h1v1h-1zM256 74h1v1h-1zM255 75h1v1h-1zM254 76h1v1h-1zM255 78h3v1h-3zM255 79h1v1h-1zM257 79h1v1h-1zM253 80h1v1h-1zM253 81h1v1h-1zM256 81h2v1h-2zM253 82h1v1h-1zM257 82h1v1h-1zM253 83h1v1h-1zM256 83h1v1h-1zM254 85h1v1h-1zM254 86h1v1h-1zM256 86h1v1h-1zM253 87h1v1h-1zM254 91h1v1h-1zM255 92h2v1h-2zM252 93h1v1h-1zM255 93h2v1h-2zM252 94h1v1h-1zM254 94h1v1h-1zM253 95h1v1h-1zM255 96h1v1h-1zM253 97h1v1h-1zM255 97h1v1h-1zM253 98h1v1h-1zM252 99h1v1h-1zM254 99h1v1h-1zM252 100h1v1h-1zM252 101h2v1h-2zM255 104h1v1h-1zM255 105h1v1h-1zM251 106h1v1h-1zM251 107h1v1h-1zM255 107h1v1h-1zM255 109h1v1h-1zM251 110h1v1h-1zM251 111h1v1h-1zM252 112h1v1h-1zM251 113h1v1h-1zM253 113h2v1h-2z"/><path fill="#ff9900" d="M194 3h1v1h-1zM196 3h3v1h-3zM194 4h1v1h-1zM201 5h1v1h-1zM203 5h2v1h-2zM0 6h1v1h-1zM2 6h1v1h-1zM24 7h3v1h-3zM30 7h1v1h-1zM330 7h2v1h-2zM41 8h1v1h-1zM144 8h1v1h-1zM152 8h1v1h-1zM219 8h1v1h-1zM221 8h1v1h-1zM223 8h2v1h-2zM226 8h3v1h-3zM230 8h5v1h-5zM103 9h1v1h-1zM105 9h2v1h-2zM108 9h1v1h-1zM110 9h3v1h-3zM237 9h1v1h-1zM242 9h1v1h-1zM246 9h1v1h-1zM47 11h1v1h-1zM44 16h1v1h-1zM46 16h1v1h-1zM53 16h1v1h-1zM100 16h1v1h-1zM102 16h2v1h-2zM106 16h1v1h-1zM108 16h2v1h-2zM83 17h1v1h-1zM87 17h1v1h-1zM91 17h1v1h-1zM96 17h3v1h-3zM103 17h1v1h-1zM118 17h2v1h-2zM262 18h1v1h-1zM264 18h1v1h-1zM267 18h2v1h-2zM125 19h1v1h-1zM129 19h1v1h-1zM131 19h1v1h-1zM133 19h2v1h-2zM145 19h1v1h-1zM147 19h1v1h-1zM262 19h1v1h-1zM267 19h4v1h-4zM265 22h2v1h-2zM107 26h2v1h-2zM111 26h1v1h-1zM116 26h1v1h-1zM118 26h2v1h-2zM266 26h1v1h-1zM306 26h1v1h-1zM316 26h1v1h-1zM320 26h1v1h-1zM265 30h1v1h-1zM39 31h1v1h-1zM125 31h1v1h-1zM128 31h1v1h-1zM131 31h1v1h-1zM166 31h1v1h-1zM196 31h1v1h-1zM326 31h3v1h-3zM331 31h1v1h-1zM265 32h1v1h-1zM19 35h1v1h-1zM22 35h1v1h-1zM185 35h1v1h-1zM187 35h1v1h-1zM191 35h4v1h-4zM263 35h1v1h-1zM118 36h1v1h-1zM124 36h1v1h-1zM126 36h2v1h-2zM273 36h1v1h-1zM275 36h1v1h-1zM262 37h1v1h-1zM258 39h4v1h-4zM262 42h1v1h-1zM261 43h1v1h-1zM261 45h1v1h-1zM260 48h1v1h-1zM259 54h1v1h-1zM256 60h3v1h-3zM255 64h1v1h-1zM258 68h1v1h-1zM254 71h1v1h-1zM254 79h1v1h-1zM257 83h1v1h-1zM256 84h1v1h-1zM256 88h1v1h-1zM256 91h1v1h-1zM254 93h1v1h-1zM253 100h1v1h-1zM255 101h1v1h-1zM255 102h1v1h-1zM255 110h1v1h-1zM255 111h1v1h-1zM252 113h1v1h-1z"/><path fill="#ffd600" d="M202 5h1v1h-1zM205 5h1v1h-1zM1 6h1v1h-1zM31 8h9v1h-9zM42 8h2v1h-2zM222 8h1v1h-1zM225 8h1v1h-1zM98 9h1v1h-1zM52 16h1v1h-1zM99 16h1v1h-1zM101 16h1v1h-1zM104 16h2v1h-2zM266 18h1v1h-1zM264 19h2v1h-2zM263 20h1v1h-1zM266 20h2v1h-2zM262 22h2v1h-2zM263 23h1v1h-1zM266 23h1v1h-1zM262 24h1v1h-1zM264 25h1v1h-1zM106 26h1v1h-1zM109 26h1v1h-1zM112 26h1v1h-1zM117 26h1v1h-1zM120 26h3v1h-3zM304 26h1v1h-1zM312 26h1v1h-1zM319 26h1v1h-1zM262 27h1v1h-1zM265 27h1v1h-1zM260 29h1v1h-1zM2 31h1v1h-1zM10 31h1v1h-1zM329 31h2v1h-2zM69 35h1v1h-1zM74 35h1v1h-1zM210 35h1v1h-1zM117 36h1v1h-1zM119 36h4v1h-4zM125 36h1v1h-1zM128 36h1v1h-1zM258 56h1v1h-1zM257 59h1v1h-1zM256 64h1v1h-1zM255 66h1v1h-1zM256 68h1v1h-1zM254 69h1v1h-1zM257 70h1v1h-1zM255 71h1v1h-1zM254 81h2v1h-2zM253 86h1v1h-1zM255 88h1v1h-1zM254 89h1v1h-1zM254 90h1v1h-1zM256 90h1v1h-1zM253 92h1v1h-1zM253 93h1v1h-1zM254 100h1v1h-1zM253 103h2v1h-2zM252 104h2v1h-2zM251 105h3v1h-3zM252 106h1v1h-1zM252 108h1v1h-1zM254 109h1v1h-1zM252 110h3v1h-3zM252 111h1v1h-1zM253 112h2v1h-2z"/><path fill="#ffff19" d="M206 5h2v1h-2zM29 8h1v1h-1zM40 8h1v1h-1zM239 9h1v1h-1zM245 9h1v1h-1zM45 10h1v1h-1zM276 14h1v1h-1zM280 14h3v1h-3zM308 15h4v1h-4zM314 15h2v1h-2zM54 16h3v1h-3zM59 16h3v1h-3zM249 16h2v1h-2zM252 16h1v1h-1zM255 16h1v1h-1zM265 18h1v1h-1zM266 19h1v1h-1zM264 20h2v1h-2zM262 23h1v1h-1zM264 23h2v1h-2zM263 24h1v1h-1zM266 24h1v1h-1zM262 25h2v1h-2zM265 25h2v1h-2zM263 26h3v1h-3zM300 26h4v1h-4zM305 26h1v1h-1zM307 26h5v1h-5zM313 26h3v1h-3zM317 26h2v1h-2zM261 27h1v1h-1zM263 27h1v1h-1zM263 28h3v1h-3zM264 29h1v1h-1zM261 30h1v1h-1zM264 30h1v1h-1zM3 31h2v1h-2zM49 31h1v1h-1zM126 31h1v1h-1zM130 31h1v1h-1zM259 32h1v1h-1zM261 32h1v1h-1zM263 32h1v1h-1zM260 33h3v1h-3zM259 34h2v1h-2zM20 35h1v1h-1zM188 35h1v1h-1zM123 36h1v1h-1zM261 36h1v1h-1zM274 36h1v1h-1zM261 38h1v1h-1zM260 47h1v1h-1zM257 49h1v1h-1zM258 50h2v1h-2zM257 51h2v1h-2zM258 52h1v1h-1zM256 53h1v1h-1zM258 53h1v1h-1zM258 54h1v1h-1zM256 55h2v1h-2zM255 57h1v1h-1zM256 58h3v1h-3zM255 59h2v1h-2zM258 59h1v1h-1zM256 65h2v1h-2zM257 66h1v1h-1zM256 67h2v1h-2zM255 68h1v1h-1zM257 68h1v1h-1zM257 69h1v1h-1zM254 70h1v1h-1zM256 70h1v1h-1zM256 71h1v1h-1zM256 79h1v1h-1zM254 80h2v1h-2zM254 82h1v1h-1zM256 82h1v1h-1zM255 83h1v1h-1zM253 84h3v1h-3zM255 85h1v1h-1zM255 86h1v1h-1zM254 87h2v1h-2zM253 88h1v1h-1zM253 89h1v1h-1zM255 89h2v1h-2zM253 90h1v1h-1zM255 90h1v1h-1zM253 91h1v1h-1zM255 91h1v1h-1zM254 92h1v1h-1zM254 101h1v1h-1zM252 102h2v1h-2zM252 103h1v1h-1zM255 103h1v1h-1zM254 104h1v1h-1zM254 105h1v1h-1zM253 106h2v1h-2zM252 107h3v1h-3zM253 108h2v1h-2zM252 109h2v1h-2zM253 111h2v1h-2z"/><path fill="#ffff80" d="M30 8h1v1h-1zM42 10h3v1h-3zM46 10h3v1h-3zM275 14h1v1h-1zM277 14h3v1h-3zM312 15h2v1h-2zM316 15h1v1h-1zM47 16h1v1h-1zM51 16h1v1h-1zM57 16h2v1h-2zM62 16h1v1h-1zM264 24h1v1h-1zM262 26h1v1h-1zM261 29h1v1h-1zM263 30h1v1h-1zM164 31h1v1h-1zM262 32h1v1h-1zM259 33h1v1h-1zM261 34h2v1h-2zM259 35h4v1h-4zM258 36h2v1h-2zM262 36h1v1h-1zM258 37h1v1h-1zM260 37h2v1h-2zM259 38h1v1h-1zM257 40h3v1h-3zM258 41h1v1h-1zM259 42h1v1h-1zM257 43h4v1h-4zM257 44h5v1h-5zM257 45h3v1h-3zM257 46h1v1h-1zM259 46h1v1h-1zM257 47h3v1h-3zM257 48h1v1h-1zM259 48h1v1h-1zM256 49h1v1h-1zM259 49h1v1h-1zM256 50h2v1h-2zM256 51h1v1h-1zM256 52h2v1h-2zM256 54h1v1h-1zM258 57h1v1h-1zM256 80h1v1h-1zM255 82h1v1h-1zM254 83h1v1h-1zM254 88h1v1h-1zM254 102h1v1h-1z"/><path fill="#ffffff" d="M208 5h12v1h-12zM23 6h9v1h-9zM129 6h7v1h-7zM264 6h8v1h-8zM258 38h1v1h-1zM260 40h2v1h-2zM259 41h3v1h-3zM258 42h1v1h-1zM260 42h2v1h-2z"/></svg>

<!-- profile box -->
<div class="a" style="left:668px;top:90px;width:70px;height:384px;border:1px solid #000;background:#eeeeee"></div>
<div class="a" style="left:669px;top:91px;width:68px;height:382px;border:1px solid #fff"></div>
<div class="a" style="left:2px;top:90px;width:736px;height:1px;background:#000"></div>

<!-- plot box -->
<div class="a" style="left:2px;top:474px;width:666px;height:70px;border:1px solid #000;background:#eeeeee"></div>
<div class="a" style="left:3px;top:475px;width:664px;height:68px;border:1px solid #fff"></div>

<div class="a" style="left:742px;top:104px;width:6px;height:1px;background:#333"></div>
<div class="a tick" style="left:751px;top:101px">17</div>
<div class="a" style="left:742px;top:132px;width:6px;height:1px;background:#333"></div>
<div class="a tick" style="left:751px;top:129px">22</div>
<div class="a" style="left:742px;top:160px;width:6px;height:1px;background:#333"></div>
<div class="a tick" style="left:751px;top:157px">28</div>
<div class="a" style="left:742px;top:188px;width:6px;height:1px;background:#333"></div>
<div class="a tick" style="left:751px;top:185px">33</div>
<div class="a" style="left:742px;top:215px;width:6px;height:1px;background:#333"></div>
<div class="a tick" style="left:751px;top:212px">38</div>
<div class="a" style="left:742px;top:243px;width:6px;height:1px;background:#333"></div>
<div class="a tick" style="left:751px;top:240px">43</div>
<div class="a" style="left:742px;top:271px;width:6px;height:1px;background:#333"></div>
<div class="a tick" style="left:751px;top:268px">49</div>
<div class="a" style="left:742px;top:299px;width:6px;height:1px;background:#333"></div>
<div class="a tick" style="left:751px;top:296px">54</div>
<div class="a" style="left:742px;top:327px;width:6px;height:1px;background:#333"></div>
<div class="a tick" style="left:751px;top:324px">59</div>
<div class="a" style="left:742px;top:355px;width:6px;height:1px;background:#333"></div>
<div class="a tick" style="left:751px;top:352px">64</div>
<div class="a" style="left:742px;top:382px;width:6px;height:1px;background:#333"></div>
<div class="a tick" style="left:751px;top:379px">70</div>
<div class="a" style="left:742px;top:410px;width:6px;height:1px;background:#333"></div>
<div class="a tick" style="left:751px;top:407px">75</div>
<div class="a" style="left:742px;top:438px;width:6px;height:1px;background:#333"></div>
<div class="a tick" style="left:751px;top:435px">80</div>
<div class="a" style="left:742px;top:466px;width:6px;height:1px;background:#333"></div>
<div class="a tick" style="left:751px;top:463px">85</div>
<div class="a" style="left:71px;top:545px;width:1px;height:6px;background:#333"></div>
<div class="a" style="left:209px;top:545px;width:1px;height:6px;background:#333"></div>
<div class="a" style="left:347px;top:545px;width:1px;height:6px;background:#333"></div>
<div class="a" style="left:486px;top:545px;width:1px;height:6px;background:#333"></div>
<div class="a" style="left:624px;top:545px;width:1px;height:6px;background:#333"></div>
<div class="a" style="left:0;top:0;width:667px;height:602px;overflow:hidden">
<div class="a tl" style="left:12px;top:558px;width:120px;text-align:center">01:28:41.63000</div>
<div class="a tl" style="left:150px;top:558px;width:120px;text-align:center">01:28:59.63000</div>
<div class="a tl" style="left:288px;top:558px;width:120px;text-align:center">01:29:17.63000</div>
<div class="a tl" style="left:427px;top:558px;width:120px;text-align:center">01:29:35.63000</div>
<div class="a tl" style="left:565px;top:558px;width:120px;text-align:center">01:29:53.63000</div>
</div>
<svg class="a" style="left:790px;top:86px" width="39" height="392" shape-rendering="crispEdges">
<defs>
<linearGradient id="gv" x1="0" y1="0" x2="1" y2="0">
 <stop offset="0" stop-color="#c9dbef"/><stop offset="0.35" stop-color="#ffffff"/><stop offset="0.6" stop-color="#dde8f3"/><stop offset="1" stop-color="#b8cfe5"/>
</linearGradient>
<linearGradient id="gh" x1="0" y1="0" x2="0" y2="1">
 <stop offset="0" stop-color="#c9dbef"/><stop offset="0.35" stop-color="#ffffff"/><stop offset="0.6" stop-color="#dde8f3"/><stop offset="1" stop-color="#b8cfe5"/>
</linearGradient>
</defs>
<g transform="translate(-790,-86)">
 <rect x="794" y="90" width="16" height="384" fill="#eeeeee"/>
 <path d="M794.5 90v384M794 90.5h16M809.5 90v384" stroke="#7a8a99" fill="none"/>
 <path d="M795.5 91v14M795 91.5h14" stroke="#ffffff"/>
 <path d="M796 105.5h13" stroke="#7a8a99"/>
 <path d="M795.5 106v10M795 106.5h14" stroke="#dde8f3"/>
 <path d="M803 96 L807.5 100.5 L798.5 100.5 Z" fill="#222" shape-rendering="geometricPrecision"/>
 <rect x="794.5" y="116.5" width="15" height="339" fill="url(#gv)" stroke="#6382be"/>
 <path d="M798 284.5h9M798 286.5h9M798 288.5h9" stroke="#6382be"/>
 <path d="M799 285.5h9M799 287.5h9M799 289.5h9" stroke="#ffffff"/>
 <rect x="794" y="456" width="16" height="18" fill="#eeeeee"/>
 <path d="M794.5 456v18M809.5 457v17M796 457.5h14M796 472.5h14" stroke="#7a8a99"/>
 <path d="M795.5 458v14M795 458.5h14" stroke="#ffffff"/>
 <path d="M798.5 464 L807.5 464 L803 468.5 Z" fill="#222" shape-rendering="geometricPrecision"/>
 <!-- sliders -->
 <rect x="815.5" y="97.5" width="5" height="176" fill="url(#gv)" stroke="#7a8a99"/>
 <path d="M816 273.5h4" stroke="#6382be"/>
 <rect x="815.5" y="289.5" width="5" height="172" fill="url(#gv)" stroke="#7a8a99"/>
 <path d="M811 248.5 H819 L826 255.5 L819 262.5 H811 Z" fill="url(#gv)" stroke="none" shape-rendering="geometricPrecision"/>
 <path d="M811 248.5 H819 L826 255.5 L819 262.5 H811" fill="none" stroke="#222"/>
 <path d="M811 459.5 H819 L826 466.5 L819 473.5 H811 Z" fill="url(#gv)" stroke="none" shape-rendering="geometricPrecision"/>
 <path d="M811 459.5 H819 L826 466.5 L819 473.5 H811" fill="none" stroke="#222"/>
</g></svg>
<svg class="a" style="left:0;top:580px" width="670" height="21" shape-rendering="crispEdges">
<defs>
<linearGradient id="gh2" x1="0" y1="0" x2="0" y2="1">
 <stop offset="0" stop-color="#c9dbef"/><stop offset="0.35" stop-color="#ffffff"/><stop offset="0.6" stop-color="#dde8f3"/><stop offset="1" stop-color="#b8cfe5"/>
</linearGradient></defs>
<g transform="translate(0,-580)">
 <rect x="3" y="583" width="665" height="16" fill="#eeeeee"/>
 <path d="M3 583.5h665M3.5 583v16M3 598.5h665" stroke="#7a8a99"/>
 <path d="M4 584.5h14M4.5 584v14" stroke="#ffffff"/>
 <path d="M18.5 585v13" stroke="#7a8a99"/>
 <path d="M19 584.5h573M19.5 584v14" stroke="#dde8f3"/>
 <path d="M13.5 588 L13.5 597 L9 592.5 Z" fill="#222" shape-rendering="geometricPrecision"/>
 <rect x="592.5" y="583.5" width="59" height="15" fill="url(#gh2)" stroke="#6382be"/>
 <path d="M620.5 588v7M622.5 588v7M624.5 588v7" stroke="#6382be"/>
 <path d="M621.5 589v7M623.5 589v7M625.5 589v7" stroke="#ffffff"/>
 <rect x="652" y="583" width="16" height="16" fill="#eeeeee"/>
 <path d="M652 583.5h15M666.5 583v16M652 598.5h15M652.5 584v15" stroke="#7a8a99"/>
 <path d="M653.5 585v13M653 584.5h13" stroke="#ffffff"/>
 <path d="M657.5 588 L657.5 597 L662 592.5 Z" fill="#222" shape-rendering="geometricPrecision"/>
</g></svg>
<svg class="a" style="left:0;top:0" width="829" height="602"><path d="M737.5 91.5 L737.5 93.0 L729.0 93.3 L719.0 94.4 L709.0 95.2 L715.0 95.8 L723.0 97.3 L732.0 98.5 L737.5 99.6 L737.5 117.0 L733.5 118.0 L730.0 119.3 L733.5 121.3 L737.5 122.7 L737.5 139.1 L722.0 139.4 L705.0 140.3 L688.2 141.4 L696.4 142.0 L707.4 143.5 L721.0 144.2 L728.4 145.3 L734.0 145.7 L737.5 148.7 L737.5 154.7 L733.0 157.1 L723.0 157.4 L715.0 158.5 L707.0 159.4 L715.0 160.4 L724.7 161.0 L734.8 162.0 L737.5 163.0 L737.5 166.8 L735.5 167.3 L735.0 168.2 L735.0 169.4 L735.5 170.3 L737.5 170.8 L737.5 173.0 L735.5 173.5 L735.0 174.4 L735.0 175.6 L735.5 176.5 L737.5 177.0 L737.5 181.0 L735.5 181.5 L735.0 182.4 L735.0 183.6 L735.5 184.5 L737.5 185.0 L737.5 214.0 L735.5 214.5 L735.0 215.4 L735.0 216.6 L735.5 217.5 L737.5 218.0 L737.5 251.0 L735.5 251.5 L735.0 252.4 L735.0 253.6 L735.5 254.5 L737.5 255.0 L737.5 256.0 L735.5 256.5 L735.0 257.4 L735.0 258.6 L735.5 259.5 L737.5 260.0 L737.5 267.5 L735.5 268.0 L735.0 268.9 L735.0 270.1 L735.5 271.0 L737.5 271.5 L737.5 296.0 L735.5 296.5 L735.0 297.4 L735.0 298.6 L735.5 299.5 L737.5 300.0 L737.5 345.5 L735.5 346.0 L735.0 346.9 L735.0 348.1 L735.5 349.0 L737.5 349.5 L737.5 361.5 L735.5 362.0 L735.0 362.9 L735.0 364.1 L735.5 365.0 L737.5 365.5 L737.5 379.7 L735.5 380.2 L735.0 381.1 L735.0 382.3 L735.5 383.2 L737.5 383.7 L737.5 393.6 L735.5 394.1 L735.0 395.0 L735.0 396.2 L735.5 397.1 L737.5 397.6 L737.5 425.0 L735.5 425.5 L735.0 426.4 L735.0 427.6 L735.5 428.5 L737.5 429.0 L737.5 438.0 L735.5 438.5 L735.0 439.4 L735.0 440.6 L735.5 441.5 L737.5 442.0 L737.5 472.0" fill="none" stroke="#111" stroke-width="1" shape-rendering="crispEdges"/><path d="M3.0 543.5 L12.8 543.5 L13.3 541.5 L14.2 541.0 L15.4 541.0 L16.3 541.5 L16.8 543.5 L67.3 543.5 L67.8 541.5 L68.7 541.0 L69.9 541.0 L70.8 541.5 L71.3 543.5 L74.9 543.5 L75.4 541.5 L76.3 541.0 L77.5 541.0 L78.4 541.5 L78.9 543.5 L80.0 543.5 L80.5 541.5 L81.4 541.0 L82.6 541.0 L83.5 541.5 L84.0 543.5 L96.0 543.5 L98.0 539.5 L100.0 543.5 L103.2 543.5 L103.7 541.5 L104.6 541.0 L105.8 541.0 L106.7 541.5 L107.2 543.5 L113.5 543.5 L114.0 541.5 L114.9 541.0 L116.1 541.0 L117.0 541.5 L117.0 543.5 L117.5 541.5 L117.5 543.5 L118.4 541.0 L119.6 541.0 L120.5 541.5 L121.0 543.5 L176.7 543.5 L177.2 541.5 L178.1 541.0 L179.3 541.0 L180.2 541.5 L180.7 543.5 L273.0 543.5 L273.5 541.5 L274.4 541.0 L275.6 541.0 L276.5 541.5 L277.0 543.5 L304.5 543.5 L305.0 541.5 L305.9 541.0 L307.1 541.0 L308.0 541.5 L308.5 543.5 L308.5 543.5 L309.0 541.5 L309.9 541.0 L311.1 541.0 L312.0 541.5 L312.5 543.5 L319.0 543.5 L319.5 541.5 L320.4 541.0 L321.6 541.0 L322.5 541.5 L323.0 543.5 L323.0 543.5 L323.5 541.5 L324.4 541.0 L325.6 541.0 L326.5 541.5 L327.0 543.5 L352.5 543.5 L353.0 541.5 L353.9 541.0 L355.1 541.0 L356.0 541.5 L356.5 543.5 L357.0 543.5 L359.0 537.6 L360.0 531.6 L361.0 527.0 L361.6 521.0 L363.0 517.6 L363.6 515.3 L365.0 517.0 L368.3 517.0 L369.6 515.3 L370.2 518.3 L371.2 523.0 L372.0 527.6 L373.6 529.6 L375.0 534.2 L376.2 539.6 L377.0 543.5 L377.5 541.5 L378.4 541.0 L379.6 541.0 L380.5 541.5 L381.0 543.5 L381.0 543.5 L381.5 541.5 L382.4 541.0 L383.6 541.0 L384.5 541.5 L385.0 543.5 L398.8 543.5 L399.3 541.5 L400.2 541.0 L401.4 541.0 L402.3 541.5 L402.8 543.5 L413.0 543.5 L413.5 541.5 L414.4 541.0 L415.6 541.0 L416.5 541.5 L417.0 543.5 L442.0 543.5 L442.5 541.5 L443.4 541.0 L444.6 541.0 L445.5 541.5 L446.0 543.5 L451.7 543.5 L452.2 541.5 L453.1 541.0 L454.3 541.0 L455.2 541.5 L455.7 543.5 L467.5 543.5 L468.0 541.5 L468.9 541.0 L470.1 541.0 L471.0 541.5 L471.5 543.5 L478.7 543.5 L479.2 541.5 L480.1 541.0 L481.3 541.0 L482.2 541.5 L482.7 543.5 L502.2 543.5 L503.4 538.5 L505.6 538.0 L506.8 531.3 L508.5 522.9 L510.2 515.3 L511.5 504.3 L513.2 499.2 L515.3 501.3 L516.5 506.0 L518.6 516.1 L520.3 525.4 L522.9 531.3 L527.5 531.3 L528.8 529.2 L532.6 529.2 L536.4 533.9 L541.5 536.4 L545.7 541.0 L550.7 541.5 L554.1 541.0 L557.5 543.5 L565.4 543.5 L565.9 541.5 L566.8 541.0 L568.0 541.0 L568.9 541.5 L569.4 543.5 L575.0 543.5 L575.5 541.5 L576.4 541.0 L577.6 541.0 L578.5 541.5 L579.0 543.5 L579.0 543.5 L579.5 541.5 L580.4 541.0 L581.6 541.0 L582.5 541.5 L583.0 543.5 L585.0 543.5 L585.5 541.5 L586.4 541.0 L587.6 541.0 L588.5 541.5 L589.0 543.5 L589.0 543.5 L589.5 541.5 L590.4 541.0 L591.6 541.0 L592.5 541.5 L593.0 543.5 L600.0 543.5 L600.5 541.5 L601.4 541.0 L602.6 541.0 L603.5 541.5 L604.0 543.5 L614.0 543.5 L614.5 541.5 L615.4 541.0 L616.6 541.0 L617.5 541.5 L618.0 543.5 L618.8 543.5 L619.3 541.5 L620.2 541.0 L621.4 541.0 L622.3 541.5 L622.8 543.5 L629.0 543.5 L629.5 541.5 L630.4 541.0 L631.6 541.0 L632.5 541.5 L633.0 543.5 L638.4 543.5 L638.9 541.5 L639.8 541.0 L641.0 541.0 L641.9 541.5 L642.4 543.5 L661.0 543.5 L661.5 541.5 L662.4 541.0 L663.6 541.0 L664.5 541.5 L665.0 543.5 L666.0 543.5" fill="none" stroke="#111" stroke-width="1" shape-rendering="crispEdges"/></svg>
<!-- info -->
<div class="a info" style="left:680px;top:497px">01:29:54.99125 UT</div>
<div class="a info" style="left:728px;top:513px">45.688 MHz</div>
<div class="a info" style="left:745px;top:529px">144 null</div>

</body></html>
